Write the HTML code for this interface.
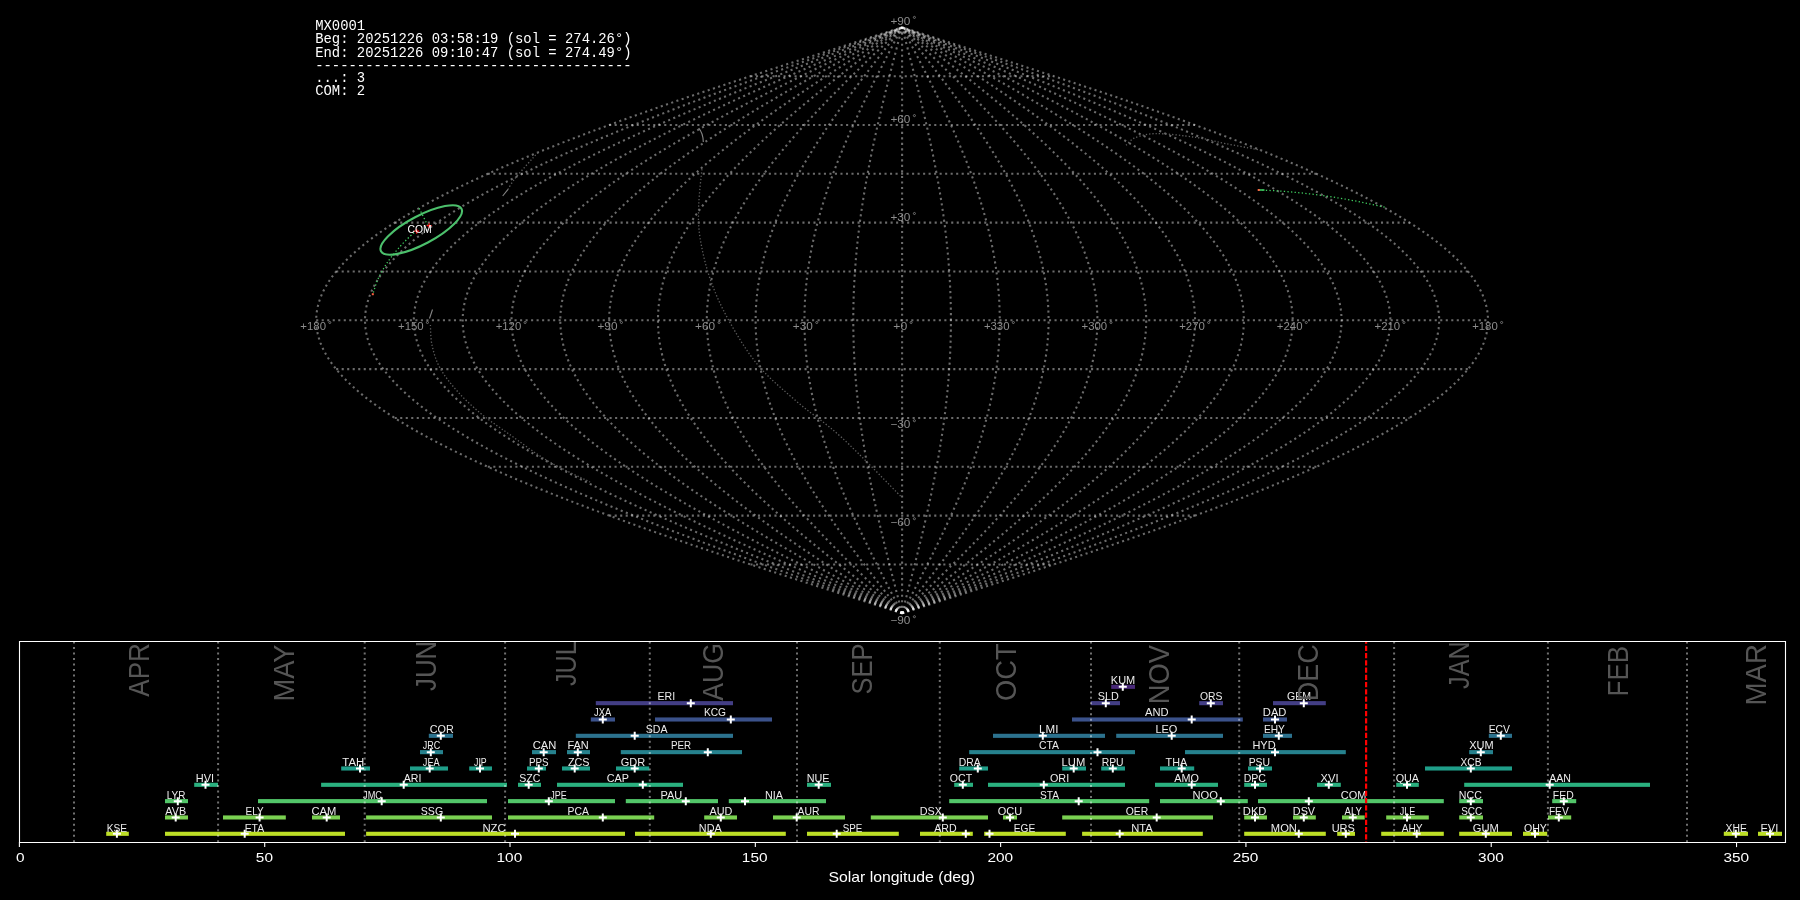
<!DOCTYPE html>
<html><head><meta charset="utf-8"><title>MX0001</title>
<style>
html,body{margin:0;padding:0;background:#000;width:1800px;height:900px;overflow:hidden}
svg{display:block;will-change:transform}
text{font-family:"Liberation Sans",sans-serif}
.mono{font-family:"Liberation Mono",monospace}
</style></head><body>
<svg width="1800" height="900" viewBox="0 0 1800 900">
<rect width="1800" height="900" fill="#000"/>
<g fill="none" stroke="#fff" stroke-opacity="0.42" stroke-width="2.08" stroke-dasharray="2.08 3.43">
<path d="M902.1 613.25 L907.21 611.63 L912.33 610 L917.44 608.37 L922.55 606.74 L927.66 605.12 L932.76 603.49 L937.87 601.86 L942.97 600.23 L948.07 598.61 L953.17 596.98 L958.26 595.35 L963.34 593.72 L968.43 592.1 L973.5 590.47 L978.58 588.84 L983.64 587.21 L988.7 585.59 L993.76 583.96 L998.8 582.33 L1003.84 580.7 L1008.87 579.08 L1013.9 577.45 L1018.91 575.82 L1023.92 574.19 L1028.91 572.57 L1033.9 570.94 L1038.88 569.31 L1043.84 567.68 L1048.8 566.06 L1053.74 564.43 L1058.68 562.8 L1063.6 561.17 L1068.51 559.55 L1073.4 557.92 L1078.29 556.29 L1083.16 554.66 L1088.01 553.04 L1092.85 551.41 L1097.68 549.78 L1102.49 548.15 L1107.29 546.53 L1112.07 544.9 L1116.84 543.27 L1121.58 541.64 L1126.32 540.02 L1131.03 538.39 L1135.73 536.76 L1140.41 535.13 L1145.07 533.51 L1149.72 531.88 L1154.34 530.25 L1158.94 528.62 L1163.53 526.99 L1168.1 525.37 L1172.64 523.74 L1177.17 522.11 L1181.67 520.48 L1186.15 518.86 L1190.61 517.23 L1195.05 515.6 L1199.47 513.97 L1203.86 512.35 L1208.24 510.72 L1212.58 509.09 L1216.91 507.46 L1221.21 505.84 L1225.48 504.21 L1229.74 502.58 L1233.96 500.95 L1238.16 499.33 L1242.34 497.7 L1246.49 496.07 L1250.61 494.44 L1254.71 492.82 L1258.78 491.19 L1262.82 489.56 L1266.84 487.93 L1270.82 486.31 L1274.78 484.68 L1278.71 483.05 L1282.62 481.42 L1286.49 479.8 L1290.33 478.17 L1294.15 476.54 L1297.93 474.91 L1301.69 473.29 L1305.41 471.66 L1309.11 470.03 L1312.77 468.4 L1316.4 466.78 L1320 465.15 L1323.57 463.52 L1327.1 461.89 L1330.61 460.27 L1334.08 458.64 L1337.51 457.01 L1340.92 455.38 L1344.29 453.76 L1347.63 452.13 L1350.93 450.5 L1354.2 448.87 L1357.44 447.25 L1360.64 445.62 L1363.8 443.99 L1366.93 442.36 L1370.03 440.74 L1373.09 439.11 L1376.11 437.48 L1379.1 435.85 L1382.05 434.23 L1384.96 432.6 L1387.84 430.97 L1390.68 429.34 L1393.48 427.72 L1396.25 426.09 L1398.98 424.46 L1401.67 422.83 L1404.32 421.21 L1406.93 419.58 L1409.51 417.95 L1412.05 416.32 L1414.55 414.7 L1417.01 413.07 L1419.43 411.44 L1421.81 409.81 L1424.15 408.19 L1426.45 406.56 L1428.71 404.93 L1430.93 403.3 L1433.11 401.68 L1435.25 400.05 L1437.35 398.42 L1439.41 396.79 L1441.43 395.17 L1443.41 393.54 L1445.34 391.91 L1447.24 390.28 L1449.09 388.66 L1450.9 387.03 L1452.67 385.4 L1454.4 383.77 L1456.09 382.15 L1457.73 380.52 L1459.33 378.89 L1460.89 377.26 L1462.41 375.64 L1463.88 374.01 L1465.31 372.38 L1466.7 370.75 L1468.04 369.13 L1469.34 367.5 L1470.6 365.87 L1471.82 364.24 L1472.99 362.62 L1474.12 360.99 L1475.2 359.36 L1476.24 357.73 L1477.24 356.11 L1478.2 354.48 L1479.11 352.85 L1479.97 351.22 L1480.79 349.6 L1481.57 347.97 L1482.31 346.34 L1482.99 344.71 L1483.64 343.09 L1484.24 341.46 L1484.8 339.83 L1485.31 338.2 L1485.78 336.58 L1486.2 334.95 L1486.58 333.32 L1486.91 331.69 L1487.2 330.07 L1487.45 328.44 L1487.65 326.81 L1487.81 325.18 L1487.92 323.56 L1487.98 321.93 L1488.01 320.3 L1487.98 318.67 L1487.92 317.04 L1487.81 315.42 L1487.65 313.79 L1487.45 312.16 L1487.2 310.53 L1486.91 308.91 L1486.58 307.28 L1486.2 305.65 L1485.78 304.02 L1485.31 302.4 L1484.8 300.77 L1484.24 299.14 L1483.64 297.51 L1482.99 295.89 L1482.31 294.26 L1481.57 292.63 L1480.79 291 L1479.97 289.38 L1479.11 287.75 L1478.2 286.12 L1477.24 284.49 L1476.24 282.87 L1475.2 281.24 L1474.12 279.61 L1472.99 277.98 L1471.82 276.36 L1470.6 274.73 L1469.34 273.1 L1468.04 271.47 L1466.7 269.85 L1465.31 268.22 L1463.88 266.59 L1462.41 264.96 L1460.89 263.34 L1459.33 261.71 L1457.73 260.08 L1456.09 258.45 L1454.4 256.83 L1452.67 255.2 L1450.9 253.57 L1449.09 251.94 L1447.24 250.32 L1445.34 248.69 L1443.41 247.06 L1441.43 245.43 L1439.41 243.81 L1437.35 242.18 L1435.25 240.55 L1433.11 238.92 L1430.93 237.3 L1428.71 235.67 L1426.45 234.04 L1424.15 232.41 L1421.81 230.79 L1419.43 229.16 L1417.01 227.53 L1414.55 225.9 L1412.05 224.28 L1409.51 222.65 L1406.93 221.02 L1404.32 219.39 L1401.67 217.77 L1398.98 216.14 L1396.25 214.51 L1393.48 212.88 L1390.68 211.26 L1387.84 209.63 L1384.96 208 L1382.05 206.37 L1379.1 204.75 L1376.11 203.12 L1373.09 201.49 L1370.03 199.86 L1366.93 198.24 L1363.8 196.61 L1360.64 194.98 L1357.44 193.35 L1354.2 191.73 L1350.93 190.1 L1347.63 188.47 L1344.29 186.84 L1340.92 185.22 L1337.51 183.59 L1334.08 181.96 L1330.61 180.33 L1327.1 178.71 L1323.57 177.08 L1320 175.45 L1316.4 173.82 L1312.77 172.2 L1309.11 170.57 L1305.41 168.94 L1301.69 167.31 L1297.93 165.69 L1294.15 164.06 L1290.33 162.43 L1286.49 160.8 L1282.62 159.18 L1278.71 157.55 L1274.78 155.92 L1270.82 154.29 L1266.84 152.67 L1262.82 151.04 L1258.78 149.41 L1254.71 147.78 L1250.61 146.16 L1246.49 144.53 L1242.34 142.9 L1238.16 141.27 L1233.96 139.65 L1229.74 138.02 L1225.48 136.39 L1221.21 134.76 L1216.91 133.14 L1212.58 131.51 L1208.24 129.88 L1203.86 128.25 L1199.47 126.63 L1195.05 125 L1190.61 123.37 L1186.15 121.74 L1181.67 120.12 L1177.17 118.49 L1172.64 116.86 L1168.1 115.23 L1163.53 113.61 L1158.94 111.98 L1154.34 110.35 L1149.72 108.72 L1145.07 107.09 L1140.41 105.47 L1135.73 103.84 L1131.03 102.21 L1126.32 100.58 L1121.58 98.96 L1116.84 97.33 L1112.07 95.7 L1107.29 94.07 L1102.49 92.45 L1097.68 90.82 L1092.85 89.19 L1088.01 87.56 L1083.16 85.94 L1078.29 84.31 L1073.4 82.68 L1068.51 81.05 L1063.6 79.43 L1058.68 77.8 L1053.74 76.17 L1048.8 74.54 L1043.84 72.92 L1038.88 71.29 L1033.9 69.66 L1028.91 68.03 L1023.92 66.41 L1018.91 64.78 L1013.9 63.15 L1008.87 61.52 L1003.84 59.9 L998.8 58.27 L993.76 56.64 L988.7 55.01 L983.64 53.39 L978.58 51.76 L973.5 50.13 L968.43 48.5 L963.34 46.88 L958.26 45.25 L953.17 43.62 L948.07 41.99 L942.97 40.37 L937.87 38.74 L932.76 37.11 L927.66 35.48 L922.55 33.86 L917.44 32.23 L912.33 30.6 L907.21 28.97 L902.1 27.35"/>
<path d="M902.1 613.25 L906.79 611.63 L911.47 610 L916.16 608.37 L920.84 606.74 L925.53 605.12 L930.21 603.49 L934.89 601.86 L939.56 600.23 L944.24 598.61 L948.91 596.98 L953.58 595.35 L958.24 593.72 L962.9 592.1 L967.55 590.47 L972.2 588.84 L976.85 587.21 L981.49 585.59 L986.12 583.96 L990.74 582.33 L995.36 580.7 L999.98 579.08 L1004.58 577.45 L1009.18 575.82 L1013.77 574.19 L1018.35 572.57 L1022.92 570.94 L1027.48 569.31 L1032.03 567.68 L1036.57 566.06 L1041.11 564.43 L1045.63 562.8 L1050.14 561.17 L1054.64 559.55 L1059.13 557.92 L1063.6 556.29 L1068.07 554.66 L1072.52 553.04 L1076.96 551.41 L1081.38 549.78 L1085.79 548.15 L1090.19 546.53 L1094.57 544.9 L1098.94 543.27 L1103.29 541.64 L1107.63 540.02 L1111.95 538.39 L1116.26 536.76 L1120.55 535.13 L1124.82 533.51 L1129.08 531.88 L1133.32 530.25 L1137.54 528.62 L1141.74 526.99 L1145.93 525.37 L1150.1 523.74 L1154.24 522.11 L1158.37 520.48 L1162.48 518.86 L1166.57 517.23 L1170.64 515.6 L1174.69 513.97 L1178.72 512.35 L1182.72 510.72 L1186.71 509.09 L1190.67 507.46 L1194.62 505.84 L1198.54 504.21 L1202.43 502.58 L1206.31 500.95 L1210.16 499.33 L1213.98 497.7 L1217.79 496.07 L1221.57 494.44 L1225.32 492.82 L1229.05 491.19 L1232.76 489.56 L1236.44 487.93 L1240.1 486.31 L1243.73 484.68 L1247.33 483.05 L1250.91 481.42 L1254.46 479.8 L1257.98 478.17 L1261.48 476.54 L1264.95 474.91 L1268.39 473.29 L1271.8 471.66 L1275.19 470.03 L1278.55 468.4 L1281.87 466.78 L1285.17 465.15 L1288.44 463.52 L1291.69 461.89 L1294.9 460.27 L1298.08 458.64 L1301.23 457.01 L1304.35 455.38 L1307.44 453.76 L1310.5 452.13 L1313.53 450.5 L1316.53 448.87 L1319.49 447.25 L1322.42 445.62 L1325.33 443.99 L1328.2 442.36 L1331.03 440.74 L1333.84 439.11 L1336.61 437.48 L1339.35 435.85 L1342.05 434.23 L1344.72 432.6 L1347.36 430.97 L1349.96 429.34 L1352.53 427.72 L1355.07 426.09 L1357.57 424.46 L1360.04 422.83 L1362.47 421.21 L1364.87 419.58 L1367.23 417.95 L1369.55 416.32 L1371.84 414.7 L1374.1 413.07 L1376.31 411.44 L1378.5 409.81 L1380.64 408.19 L1382.75 406.56 L1384.83 404.93 L1386.86 403.3 L1388.86 401.68 L1390.82 400.05 L1392.75 398.42 L1394.64 396.79 L1396.49 395.17 L1398.3 393.54 L1400.07 391.91 L1401.81 390.28 L1403.51 388.66 L1405.17 387.03 L1406.79 385.4 L1408.38 383.77 L1409.92 382.15 L1411.43 380.52 L1412.89 378.89 L1414.32 377.26 L1415.71 375.64 L1417.06 374.01 L1418.38 372.38 L1419.65 370.75 L1420.88 369.13 L1422.07 367.5 L1423.23 365.87 L1424.34 364.24 L1425.42 362.62 L1426.45 360.99 L1427.44 359.36 L1428.4 357.73 L1429.31 356.11 L1430.19 354.48 L1431.02 352.85 L1431.82 351.22 L1432.57 349.6 L1433.28 347.97 L1433.95 346.34 L1434.59 344.71 L1435.18 343.09 L1435.73 341.46 L1436.24 339.83 L1436.71 338.2 L1437.14 336.58 L1437.53 334.95 L1437.87 333.32 L1438.18 331.69 L1438.45 330.07 L1438.67 328.44 L1438.85 326.81 L1439 325.18 L1439.1 323.56 L1439.16 321.93 L1439.18 320.3 L1439.16 318.67 L1439.1 317.04 L1439 315.42 L1438.85 313.79 L1438.67 312.16 L1438.45 310.53 L1438.18 308.91 L1437.87 307.28 L1437.53 305.65 L1437.14 304.02 L1436.71 302.4 L1436.24 300.77 L1435.73 299.14 L1435.18 297.51 L1434.59 295.89 L1433.95 294.26 L1433.28 292.63 L1432.57 291 L1431.82 289.38 L1431.02 287.75 L1430.19 286.12 L1429.31 284.49 L1428.4 282.87 L1427.44 281.24 L1426.45 279.61 L1425.42 277.98 L1424.34 276.36 L1423.23 274.73 L1422.07 273.1 L1420.88 271.47 L1419.65 269.85 L1418.38 268.22 L1417.06 266.59 L1415.71 264.96 L1414.32 263.34 L1412.89 261.71 L1411.43 260.08 L1409.92 258.45 L1408.38 256.83 L1406.79 255.2 L1405.17 253.57 L1403.51 251.94 L1401.81 250.32 L1400.07 248.69 L1398.3 247.06 L1396.49 245.43 L1394.64 243.81 L1392.75 242.18 L1390.82 240.55 L1388.86 238.92 L1386.86 237.3 L1384.83 235.67 L1382.75 234.04 L1380.64 232.41 L1378.5 230.79 L1376.31 229.16 L1374.1 227.53 L1371.84 225.9 L1369.55 224.28 L1367.23 222.65 L1364.87 221.02 L1362.47 219.39 L1360.04 217.77 L1357.57 216.14 L1355.07 214.51 L1352.53 212.88 L1349.96 211.26 L1347.36 209.63 L1344.72 208 L1342.05 206.37 L1339.35 204.75 L1336.61 203.12 L1333.84 201.49 L1331.03 199.86 L1328.2 198.24 L1325.33 196.61 L1322.42 194.98 L1319.49 193.35 L1316.53 191.73 L1313.53 190.1 L1310.5 188.47 L1307.44 186.84 L1304.35 185.22 L1301.23 183.59 L1298.08 181.96 L1294.9 180.33 L1291.69 178.71 L1288.44 177.08 L1285.17 175.45 L1281.87 173.82 L1278.55 172.2 L1275.19 170.57 L1271.8 168.94 L1268.39 167.31 L1264.95 165.69 L1261.48 164.06 L1257.98 162.43 L1254.46 160.8 L1250.91 159.18 L1247.33 157.55 L1243.73 155.92 L1240.1 154.29 L1236.44 152.67 L1232.76 151.04 L1229.05 149.41 L1225.32 147.78 L1221.57 146.16 L1217.79 144.53 L1213.98 142.9 L1210.16 141.27 L1206.31 139.65 L1202.43 138.02 L1198.54 136.39 L1194.62 134.76 L1190.67 133.14 L1186.71 131.51 L1182.72 129.88 L1178.72 128.25 L1174.69 126.63 L1170.64 125 L1166.57 123.37 L1162.48 121.74 L1158.37 120.12 L1154.24 118.49 L1150.1 116.86 L1145.93 115.23 L1141.74 113.61 L1137.54 111.98 L1133.32 110.35 L1129.08 108.72 L1124.82 107.09 L1120.55 105.47 L1116.26 103.84 L1111.95 102.21 L1107.63 100.58 L1103.29 98.96 L1098.94 97.33 L1094.57 95.7 L1090.19 94.07 L1085.79 92.45 L1081.38 90.82 L1076.96 89.19 L1072.52 87.56 L1068.07 85.94 L1063.6 84.31 L1059.13 82.68 L1054.64 81.05 L1050.14 79.43 L1045.63 77.8 L1041.11 76.17 L1036.57 74.54 L1032.03 72.92 L1027.48 71.29 L1022.92 69.66 L1018.35 68.03 L1013.77 66.41 L1009.18 64.78 L1004.58 63.15 L999.98 61.52 L995.36 59.9 L990.74 58.27 L986.12 56.64 L981.49 55.01 L976.85 53.39 L972.2 51.76 L967.55 50.13 L962.9 48.5 L958.24 46.88 L953.58 45.25 L948.91 43.62 L944.24 41.99 L939.56 40.37 L934.89 38.74 L930.21 37.11 L925.53 35.48 L920.84 33.86 L916.16 32.23 L911.47 30.6 L906.79 28.97 L902.1 27.35"/>
<path d="M902.1 613.25 L906.36 611.63 L910.62 610 L914.88 608.37 L919.14 606.74 L923.4 605.12 L927.65 603.49 L931.91 601.86 L936.16 600.23 L940.41 598.61 L944.65 596.98 L948.9 595.35 L953.14 593.72 L957.37 592.1 L961.6 590.47 L965.83 588.84 L970.05 587.21 L974.27 585.59 L978.48 583.96 L982.69 582.33 L986.88 580.7 L991.08 579.08 L995.26 577.45 L999.44 575.82 L1003.61 574.19 L1007.78 572.57 L1011.93 570.94 L1016.08 569.31 L1020.22 567.68 L1024.35 566.06 L1028.47 564.43 L1032.58 562.8 L1036.68 561.17 L1040.77 559.55 L1044.85 557.92 L1048.92 556.29 L1052.98 554.66 L1057.03 553.04 L1061.06 551.41 L1065.08 549.78 L1069.09 548.15 L1073.09 546.53 L1077.08 544.9 L1081.05 543.27 L1085 541.64 L1088.95 540.02 L1092.88 538.39 L1096.79 536.76 L1100.69 535.13 L1104.58 533.51 L1108.45 531.88 L1112.3 530.25 L1116.14 528.62 L1119.96 526.99 L1123.76 525.37 L1127.55 523.74 L1131.32 522.11 L1135.08 520.48 L1138.81 518.86 L1142.53 517.23 L1146.23 515.6 L1149.91 513.97 L1153.57 512.35 L1157.21 510.72 L1160.84 509.09 L1164.44 507.46 L1168.02 505.84 L1171.59 504.21 L1175.13 502.58 L1178.65 500.95 L1182.15 499.33 L1185.63 497.7 L1189.09 496.07 L1192.53 494.44 L1195.94 492.82 L1199.33 491.19 L1202.7 489.56 L1206.05 487.93 L1209.37 486.31 L1212.67 484.68 L1215.94 483.05 L1219.2 481.42 L1222.42 479.8 L1225.63 478.17 L1228.81 476.54 L1231.96 474.91 L1235.09 473.29 L1238.19 471.66 L1241.27 470.03 L1244.32 468.4 L1247.35 466.78 L1250.35 465.15 L1253.32 463.52 L1256.27 461.89 L1259.19 460.27 L1262.08 458.64 L1264.94 457.01 L1267.78 455.38 L1270.59 453.76 L1273.37 452.13 L1276.13 450.5 L1278.85 448.87 L1281.55 447.25 L1284.21 445.62 L1286.85 443.99 L1289.46 442.36 L1292.04 440.74 L1294.59 439.11 L1297.11 437.48 L1299.6 435.85 L1302.06 434.23 L1304.48 432.6 L1306.88 430.97 L1309.25 429.34 L1311.59 427.72 L1313.89 426.09 L1316.16 424.46 L1318.41 422.83 L1320.62 421.21 L1322.8 419.58 L1324.94 417.95 L1327.06 416.32 L1329.14 414.7 L1331.19 413.07 L1333.2 411.44 L1335.19 409.81 L1337.14 408.19 L1339.06 406.56 L1340.94 404.93 L1342.79 403.3 L1344.61 401.68 L1346.39 400.05 L1348.14 398.42 L1349.86 396.79 L1351.54 395.17 L1353.19 393.54 L1354.8 391.91 L1356.38 390.28 L1357.93 388.66 L1359.44 387.03 L1360.91 385.4 L1362.35 383.77 L1363.75 382.15 L1365.12 380.52 L1366.46 378.89 L1367.76 377.26 L1369.02 375.64 L1370.25 374.01 L1371.44 372.38 L1372.6 370.75 L1373.72 369.13 L1374.8 367.5 L1375.85 365.87 L1376.87 364.24 L1377.84 362.62 L1378.78 360.99 L1379.69 359.36 L1380.55 357.73 L1381.39 356.11 L1382.18 354.48 L1382.94 352.85 L1383.66 351.22 L1384.34 349.6 L1384.99 347.97 L1385.6 346.34 L1386.18 344.71 L1386.72 343.09 L1387.22 341.46 L1387.68 339.83 L1388.11 338.2 L1388.5 336.58 L1388.85 334.95 L1389.17 333.32 L1389.45 331.69 L1389.69 330.07 L1389.89 328.44 L1390.06 326.81 L1390.19 325.18 L1390.28 323.56 L1390.34 321.93 L1390.36 320.3 L1390.34 318.67 L1390.28 317.04 L1390.19 315.42 L1390.06 313.79 L1389.89 312.16 L1389.69 310.53 L1389.45 308.91 L1389.17 307.28 L1388.85 305.65 L1388.5 304.02 L1388.11 302.4 L1387.68 300.77 L1387.22 299.14 L1386.72 297.51 L1386.18 295.89 L1385.6 294.26 L1384.99 292.63 L1384.34 291 L1383.66 289.38 L1382.94 287.75 L1382.18 286.12 L1381.39 284.49 L1380.55 282.87 L1379.69 281.24 L1378.78 279.61 L1377.84 277.98 L1376.87 276.36 L1375.85 274.73 L1374.8 273.1 L1373.72 271.47 L1372.6 269.85 L1371.44 268.22 L1370.25 266.59 L1369.02 264.96 L1367.76 263.34 L1366.46 261.71 L1365.12 260.08 L1363.75 258.45 L1362.35 256.83 L1360.91 255.2 L1359.44 253.57 L1357.93 251.94 L1356.38 250.32 L1354.8 248.69 L1353.19 247.06 L1351.54 245.43 L1349.86 243.81 L1348.14 242.18 L1346.39 240.55 L1344.61 238.92 L1342.79 237.3 L1340.94 235.67 L1339.06 234.04 L1337.14 232.41 L1335.19 230.79 L1333.2 229.16 L1331.19 227.53 L1329.14 225.9 L1327.06 224.28 L1324.94 222.65 L1322.8 221.02 L1320.62 219.39 L1318.41 217.77 L1316.16 216.14 L1313.89 214.51 L1311.59 212.88 L1309.25 211.26 L1306.88 209.63 L1304.48 208 L1302.06 206.37 L1299.6 204.75 L1297.11 203.12 L1294.59 201.49 L1292.04 199.86 L1289.46 198.24 L1286.85 196.61 L1284.21 194.98 L1281.55 193.35 L1278.85 191.73 L1276.13 190.1 L1273.37 188.47 L1270.59 186.84 L1267.78 185.22 L1264.94 183.59 L1262.08 181.96 L1259.19 180.33 L1256.27 178.71 L1253.32 177.08 L1250.35 175.45 L1247.35 173.82 L1244.32 172.2 L1241.27 170.57 L1238.19 168.94 L1235.09 167.31 L1231.96 165.69 L1228.81 164.06 L1225.63 162.43 L1222.42 160.8 L1219.2 159.18 L1215.94 157.55 L1212.67 155.92 L1209.37 154.29 L1206.05 152.67 L1202.7 151.04 L1199.33 149.41 L1195.94 147.78 L1192.53 146.16 L1189.09 144.53 L1185.63 142.9 L1182.15 141.27 L1178.65 139.65 L1175.13 138.02 L1171.59 136.39 L1168.02 134.76 L1164.44 133.14 L1160.84 131.51 L1157.21 129.88 L1153.57 128.25 L1149.91 126.63 L1146.23 125 L1142.53 123.37 L1138.81 121.74 L1135.08 120.12 L1131.32 118.49 L1127.55 116.86 L1123.76 115.23 L1119.96 113.61 L1116.14 111.98 L1112.3 110.35 L1108.45 108.72 L1104.58 107.09 L1100.69 105.47 L1096.79 103.84 L1092.88 102.21 L1088.95 100.58 L1085 98.96 L1081.05 97.33 L1077.08 95.7 L1073.09 94.07 L1069.09 92.45 L1065.08 90.82 L1061.06 89.19 L1057.03 87.56 L1052.98 85.94 L1048.92 84.31 L1044.85 82.68 L1040.77 81.05 L1036.68 79.43 L1032.58 77.8 L1028.47 76.17 L1024.35 74.54 L1020.22 72.92 L1016.08 71.29 L1011.93 69.66 L1007.78 68.03 L1003.61 66.41 L999.44 64.78 L995.26 63.15 L991.08 61.52 L986.88 59.9 L982.69 58.27 L978.48 56.64 L974.27 55.01 L970.05 53.39 L965.83 51.76 L961.6 50.13 L957.37 48.5 L953.14 46.88 L948.9 45.25 L944.65 43.62 L940.41 41.99 L936.16 40.37 L931.91 38.74 L927.65 37.11 L923.4 35.48 L919.14 33.86 L914.88 32.23 L910.62 30.6 L906.36 28.97 L902.1 27.35"/>
<path d="M902.1 613.25 L905.93 611.63 L909.77 610 L913.6 608.37 L917.44 606.74 L921.27 605.12 L925.1 603.49 L928.93 601.86 L932.75 600.23 L936.58 598.61 L940.4 596.98 L944.22 595.35 L948.03 593.72 L951.84 592.1 L955.65 590.47 L959.46 588.84 L963.26 587.21 L967.05 585.59 L970.84 583.96 L974.63 582.33 L978.41 580.7 L982.18 579.08 L985.95 577.45 L989.71 575.82 L993.46 574.19 L997.21 572.57 L1000.95 570.94 L1004.68 569.31 L1008.41 567.68 L1012.12 566.06 L1015.83 564.43 L1019.53 562.8 L1023.22 561.17 L1026.9 559.55 L1030.58 557.92 L1034.24 556.29 L1037.89 554.66 L1041.53 553.04 L1045.16 551.41 L1048.78 549.78 L1052.39 548.15 L1055.99 546.53 L1059.58 544.9 L1063.15 543.27 L1066.71 541.64 L1070.26 540.02 L1073.8 538.39 L1077.32 536.76 L1080.83 535.13 L1084.33 533.51 L1087.81 531.88 L1091.28 530.25 L1094.73 528.62 L1098.17 526.99 L1101.6 525.37 L1105.01 523.74 L1108.4 522.11 L1111.78 520.48 L1115.14 518.86 L1118.49 517.23 L1121.82 515.6 L1125.13 513.97 L1128.42 512.35 L1131.7 510.72 L1134.96 509.09 L1138.21 507.46 L1141.43 505.84 L1144.64 504.21 L1147.83 502.58 L1151 500.95 L1154.15 499.33 L1157.28 497.7 L1160.39 496.07 L1163.48 494.44 L1166.56 492.82 L1169.61 491.19 L1172.64 489.56 L1175.65 487.93 L1178.64 486.31 L1181.61 484.68 L1184.56 483.05 L1187.49 481.42 L1190.39 479.8 L1193.28 478.17 L1196.14 476.54 L1198.97 474.91 L1201.79 473.29 L1204.58 471.66 L1207.35 470.03 L1210.1 468.4 L1212.82 466.78 L1215.52 465.15 L1218.2 463.52 L1220.85 461.89 L1223.48 460.27 L1226.08 458.64 L1228.66 457.01 L1231.21 455.38 L1233.74 453.76 L1236.25 452.13 L1238.72 450.5 L1241.18 448.87 L1243.6 447.25 L1246 445.62 L1248.38 443.99 L1250.72 442.36 L1253.04 440.74 L1255.34 439.11 L1257.61 437.48 L1259.85 435.85 L1262.06 434.23 L1264.25 432.6 L1266.4 430.97 L1268.53 429.34 L1270.64 427.72 L1272.71 426.09 L1274.76 424.46 L1276.78 422.83 L1278.77 421.21 L1280.73 419.58 L1282.66 417.95 L1284.56 416.32 L1286.43 414.7 L1288.28 413.07 L1290.09 411.44 L1291.88 409.81 L1293.64 408.19 L1295.36 406.56 L1297.06 404.93 L1298.72 403.3 L1300.36 401.68 L1301.96 400.05 L1303.54 398.42 L1305.08 396.79 L1306.6 395.17 L1308.08 393.54 L1309.53 391.91 L1310.95 390.28 L1312.34 388.66 L1313.7 387.03 L1315.03 385.4 L1316.33 383.77 L1317.59 382.15 L1318.82 380.52 L1320.02 378.89 L1321.19 377.26 L1322.33 375.64 L1323.43 374.01 L1324.51 372.38 L1325.55 370.75 L1326.56 369.13 L1327.53 367.5 L1328.48 365.87 L1329.39 364.24 L1330.27 362.62 L1331.11 360.99 L1331.93 359.36 L1332.71 357.73 L1333.46 356.11 L1334.17 354.48 L1334.85 352.85 L1335.5 351.22 L1336.12 349.6 L1336.7 347.97 L1337.25 346.34 L1337.77 344.71 L1338.25 343.09 L1338.71 341.46 L1339.12 339.83 L1339.51 338.2 L1339.86 336.58 L1340.18 334.95 L1340.46 333.32 L1340.71 331.69 L1340.93 330.07 L1341.11 328.44 L1341.26 326.81 L1341.38 325.18 L1341.46 323.56 L1341.51 321.93 L1341.53 320.3 L1341.51 318.67 L1341.46 317.04 L1341.38 315.42 L1341.26 313.79 L1341.11 312.16 L1340.93 310.53 L1340.71 308.91 L1340.46 307.28 L1340.18 305.65 L1339.86 304.02 L1339.51 302.4 L1339.12 300.77 L1338.71 299.14 L1338.25 297.51 L1337.77 295.89 L1337.25 294.26 L1336.7 292.63 L1336.12 291 L1335.5 289.38 L1334.85 287.75 L1334.17 286.12 L1333.46 284.49 L1332.71 282.87 L1331.93 281.24 L1331.11 279.61 L1330.27 277.98 L1329.39 276.36 L1328.48 274.73 L1327.53 273.1 L1326.56 271.47 L1325.55 269.85 L1324.51 268.22 L1323.43 266.59 L1322.33 264.96 L1321.19 263.34 L1320.02 261.71 L1318.82 260.08 L1317.59 258.45 L1316.33 256.83 L1315.03 255.2 L1313.7 253.57 L1312.34 251.94 L1310.95 250.32 L1309.53 248.69 L1308.08 247.06 L1306.6 245.43 L1305.08 243.81 L1303.54 242.18 L1301.96 240.55 L1300.36 238.92 L1298.72 237.3 L1297.06 235.67 L1295.36 234.04 L1293.64 232.41 L1291.88 230.79 L1290.09 229.16 L1288.28 227.53 L1286.43 225.9 L1284.56 224.28 L1282.66 222.65 L1280.73 221.02 L1278.77 219.39 L1276.78 217.77 L1274.76 216.14 L1272.71 214.51 L1270.64 212.88 L1268.53 211.26 L1266.4 209.63 L1264.25 208 L1262.06 206.37 L1259.85 204.75 L1257.61 203.12 L1255.34 201.49 L1253.04 199.86 L1250.72 198.24 L1248.38 196.61 L1246 194.98 L1243.6 193.35 L1241.18 191.73 L1238.72 190.1 L1236.25 188.47 L1233.74 186.84 L1231.21 185.22 L1228.66 183.59 L1226.08 181.96 L1223.48 180.33 L1220.85 178.71 L1218.2 177.08 L1215.52 175.45 L1212.82 173.82 L1210.1 172.2 L1207.35 170.57 L1204.58 168.94 L1201.79 167.31 L1198.97 165.69 L1196.14 164.06 L1193.28 162.43 L1190.39 160.8 L1187.49 159.18 L1184.56 157.55 L1181.61 155.92 L1178.64 154.29 L1175.65 152.67 L1172.64 151.04 L1169.61 149.41 L1166.56 147.78 L1163.48 146.16 L1160.39 144.53 L1157.28 142.9 L1154.15 141.27 L1151 139.65 L1147.83 138.02 L1144.64 136.39 L1141.43 134.76 L1138.21 133.14 L1134.96 131.51 L1131.7 129.88 L1128.42 128.25 L1125.13 126.63 L1121.82 125 L1118.49 123.37 L1115.14 121.74 L1111.78 120.12 L1108.4 118.49 L1105.01 116.86 L1101.6 115.23 L1098.17 113.61 L1094.73 111.98 L1091.28 110.35 L1087.81 108.72 L1084.33 107.09 L1080.83 105.47 L1077.32 103.84 L1073.8 102.21 L1070.26 100.58 L1066.71 98.96 L1063.15 97.33 L1059.58 95.7 L1055.99 94.07 L1052.39 92.45 L1048.78 90.82 L1045.16 89.19 L1041.53 87.56 L1037.89 85.94 L1034.24 84.31 L1030.58 82.68 L1026.9 81.05 L1023.22 79.43 L1019.53 77.8 L1015.83 76.17 L1012.12 74.54 L1008.41 72.92 L1004.68 71.29 L1000.95 69.66 L997.21 68.03 L993.46 66.41 L989.71 64.78 L985.95 63.15 L982.18 61.52 L978.41 59.9 L974.63 58.27 L970.84 56.64 L967.05 55.01 L963.26 53.39 L959.46 51.76 L955.65 50.13 L951.84 48.5 L948.03 46.88 L944.22 45.25 L940.4 43.62 L936.58 41.99 L932.75 40.37 L928.93 38.74 L925.1 37.11 L921.27 35.48 L917.44 33.86 L913.6 32.23 L909.77 30.6 L905.93 28.97 L902.1 27.35"/>
<path d="M902.1 613.25 L905.51 611.63 L908.92 610 L912.32 608.37 L915.73 606.74 L919.14 605.12 L922.54 603.49 L925.95 601.86 L929.35 600.23 L932.75 598.61 L936.14 596.98 L939.54 595.35 L942.93 593.72 L946.32 592.1 L949.7 590.47 L953.08 588.84 L956.46 587.21 L959.84 585.59 L963.2 583.96 L966.57 582.33 L969.93 580.7 L973.28 579.08 L976.63 577.45 L979.97 575.82 L983.31 574.19 L986.64 572.57 L989.97 570.94 L993.28 569.31 L996.6 567.68 L999.9 566.06 L1003.2 564.43 L1006.48 562.8 L1009.77 561.17 L1013.04 559.55 L1016.3 557.92 L1019.56 556.29 L1022.8 554.66 L1026.04 553.04 L1029.27 551.41 L1032.49 549.78 L1035.69 548.15 L1038.89 546.53 L1042.08 544.9 L1045.26 543.27 L1048.42 541.64 L1051.58 540.02 L1054.72 538.39 L1057.85 536.76 L1060.97 535.13 L1064.08 533.51 L1067.18 531.88 L1070.26 530.25 L1073.33 528.62 L1076.39 526.99 L1079.43 525.37 L1082.46 523.74 L1085.48 522.11 L1088.48 520.48 L1091.47 518.86 L1094.44 517.23 L1097.4 515.6 L1100.35 513.97 L1103.28 512.35 L1106.19 510.72 L1109.09 509.09 L1111.97 507.46 L1114.84 505.84 L1117.69 504.21 L1120.52 502.58 L1123.34 500.95 L1126.14 499.33 L1128.93 497.7 L1131.69 496.07 L1134.44 494.44 L1137.17 492.82 L1139.89 491.19 L1142.58 489.56 L1145.26 487.93 L1147.92 486.31 L1150.56 484.68 L1153.18 483.05 L1155.78 481.42 L1158.36 479.8 L1160.92 478.17 L1163.47 476.54 L1165.99 474.91 L1168.49 473.29 L1170.97 471.66 L1173.44 470.03 L1175.88 468.4 L1178.3 466.78 L1180.7 465.15 L1183.08 463.52 L1185.43 461.89 L1187.77 460.27 L1190.08 458.64 L1192.38 457.01 L1194.65 455.38 L1196.89 453.76 L1199.12 452.13 L1201.32 450.5 L1203.5 448.87 L1205.66 447.25 L1207.79 445.62 L1209.9 443.99 L1211.99 442.36 L1214.05 440.74 L1216.09 439.11 L1218.11 437.48 L1220.1 435.85 L1222.06 434.23 L1224.01 432.6 L1225.93 430.97 L1227.82 429.34 L1229.69 427.72 L1231.53 426.09 L1233.35 424.46 L1235.15 422.83 L1236.91 421.21 L1238.66 419.58 L1240.37 417.95 L1242.07 416.32 L1243.73 414.7 L1245.37 413.07 L1246.98 411.44 L1248.57 409.81 L1250.13 408.19 L1251.67 406.56 L1253.17 404.93 L1254.65 403.3 L1256.11 401.68 L1257.54 400.05 L1258.94 398.42 L1260.31 396.79 L1261.65 395.17 L1262.97 393.54 L1264.26 391.91 L1265.53 390.28 L1266.76 388.66 L1267.97 387.03 L1269.15 385.4 L1270.3 383.77 L1271.42 382.15 L1272.52 380.52 L1273.59 378.89 L1274.63 377.26 L1275.64 375.64 L1276.62 374.01 L1277.57 372.38 L1278.5 370.75 L1279.4 369.13 L1280.26 367.5 L1281.1 365.87 L1281.91 364.24 L1282.69 362.62 L1283.45 360.99 L1284.17 359.36 L1284.86 357.73 L1285.53 356.11 L1286.16 354.48 L1286.77 352.85 L1287.35 351.22 L1287.9 349.6 L1288.41 347.97 L1288.9 346.34 L1289.36 344.71 L1289.79 343.09 L1290.19 341.46 L1290.56 339.83 L1290.91 338.2 L1291.22 336.58 L1291.5 334.95 L1291.75 333.32 L1291.98 331.69 L1292.17 330.07 L1292.33 328.44 L1292.47 326.81 L1292.57 325.18 L1292.65 323.56 L1292.69 321.93 L1292.7 320.3 L1292.69 318.67 L1292.65 317.04 L1292.57 315.42 L1292.47 313.79 L1292.33 312.16 L1292.17 310.53 L1291.98 308.91 L1291.75 307.28 L1291.5 305.65 L1291.22 304.02 L1290.91 302.4 L1290.56 300.77 L1290.19 299.14 L1289.79 297.51 L1289.36 295.89 L1288.9 294.26 L1288.41 292.63 L1287.9 291 L1287.35 289.38 L1286.77 287.75 L1286.16 286.12 L1285.53 284.49 L1284.86 282.87 L1284.17 281.24 L1283.45 279.61 L1282.69 277.98 L1281.91 276.36 L1281.1 274.73 L1280.26 273.1 L1279.4 271.47 L1278.5 269.85 L1277.57 268.22 L1276.62 266.59 L1275.64 264.96 L1274.63 263.34 L1273.59 261.71 L1272.52 260.08 L1271.42 258.45 L1270.3 256.83 L1269.15 255.2 L1267.97 253.57 L1266.76 251.94 L1265.53 250.32 L1264.26 248.69 L1262.97 247.06 L1261.65 245.43 L1260.31 243.81 L1258.94 242.18 L1257.54 240.55 L1256.11 238.92 L1254.65 237.3 L1253.17 235.67 L1251.67 234.04 L1250.13 232.41 L1248.57 230.79 L1246.98 229.16 L1245.37 227.53 L1243.73 225.9 L1242.07 224.28 L1240.37 222.65 L1238.66 221.02 L1236.91 219.39 L1235.15 217.77 L1233.35 216.14 L1231.53 214.51 L1229.69 212.88 L1227.82 211.26 L1225.93 209.63 L1224.01 208 L1222.06 206.37 L1220.1 204.75 L1218.11 203.12 L1216.09 201.49 L1214.05 199.86 L1211.99 198.24 L1209.9 196.61 L1207.79 194.98 L1205.66 193.35 L1203.5 191.73 L1201.32 190.1 L1199.12 188.47 L1196.89 186.84 L1194.65 185.22 L1192.38 183.59 L1190.08 181.96 L1187.77 180.33 L1185.43 178.71 L1183.08 177.08 L1180.7 175.45 L1178.3 173.82 L1175.88 172.2 L1173.44 170.57 L1170.97 168.94 L1168.49 167.31 L1165.99 165.69 L1163.47 164.06 L1160.92 162.43 L1158.36 160.8 L1155.78 159.18 L1153.18 157.55 L1150.56 155.92 L1147.92 154.29 L1145.26 152.67 L1142.58 151.04 L1139.89 149.41 L1137.17 147.78 L1134.44 146.16 L1131.69 144.53 L1128.93 142.9 L1126.14 141.27 L1123.34 139.65 L1120.52 138.02 L1117.69 136.39 L1114.84 134.76 L1111.97 133.14 L1109.09 131.51 L1106.19 129.88 L1103.28 128.25 L1100.35 126.63 L1097.4 125 L1094.44 123.37 L1091.47 121.74 L1088.48 120.12 L1085.48 118.49 L1082.46 116.86 L1079.43 115.23 L1076.39 113.61 L1073.33 111.98 L1070.26 110.35 L1067.18 108.72 L1064.08 107.09 L1060.97 105.47 L1057.85 103.84 L1054.72 102.21 L1051.58 100.58 L1048.42 98.96 L1045.26 97.33 L1042.08 95.7 L1038.89 94.07 L1035.69 92.45 L1032.49 90.82 L1029.27 89.19 L1026.04 87.56 L1022.8 85.94 L1019.56 84.31 L1016.3 82.68 L1013.04 81.05 L1009.77 79.43 L1006.48 77.8 L1003.2 76.17 L999.9 74.54 L996.6 72.92 L993.28 71.29 L989.97 69.66 L986.64 68.03 L983.31 66.41 L979.97 64.78 L976.63 63.15 L973.28 61.52 L969.93 59.9 L966.57 58.27 L963.2 56.64 L959.84 55.01 L956.46 53.39 L953.08 51.76 L949.7 50.13 L946.32 48.5 L942.93 46.88 L939.54 45.25 L936.14 43.62 L932.75 41.99 L929.35 40.37 L925.95 38.74 L922.54 37.11 L919.14 35.48 L915.73 33.86 L912.32 32.23 L908.92 30.6 L905.51 28.97 L902.1 27.35"/>
<path d="M902.1 613.25 L905.08 611.63 L908.06 610 L911.05 608.37 L914.03 606.74 L917.01 605.12 L919.99 603.49 L922.97 601.86 L925.94 600.23 L928.92 598.61 L931.89 596.98 L934.86 595.35 L937.83 593.72 L940.79 592.1 L943.75 590.47 L946.71 588.84 L949.67 587.21 L952.62 585.59 L955.57 583.96 L958.51 582.33 L961.45 580.7 L964.38 579.08 L967.31 577.45 L970.24 575.82 L973.16 574.19 L976.07 572.57 L978.98 570.94 L981.89 569.31 L984.78 567.68 L987.67 566.06 L990.56 564.43 L993.44 562.8 L996.31 561.17 L999.17 559.55 L1002.03 557.92 L1004.87 556.29 L1007.72 554.66 L1010.55 553.04 L1013.37 551.41 L1016.19 549.78 L1019 548.15 L1021.79 546.53 L1024.58 544.9 L1027.36 543.27 L1030.13 541.64 L1032.89 540.02 L1035.64 538.39 L1038.38 536.76 L1041.11 535.13 L1043.83 533.51 L1046.54 531.88 L1049.24 530.25 L1051.93 528.62 L1054.6 526.99 L1057.26 525.37 L1059.92 523.74 L1062.56 522.11 L1065.18 520.48 L1067.8 518.86 L1070.4 517.23 L1072.99 515.6 L1075.57 513.97 L1078.13 512.35 L1080.68 510.72 L1083.22 509.09 L1085.74 507.46 L1088.25 505.84 L1090.74 504.21 L1093.22 502.58 L1095.69 500.95 L1098.14 499.33 L1100.57 497.7 L1102.99 496.07 L1105.4 494.44 L1107.79 492.82 L1110.16 491.19 L1112.52 489.56 L1114.86 487.93 L1117.19 486.31 L1119.5 484.68 L1121.79 483.05 L1124.07 481.42 L1126.33 479.8 L1128.57 478.17 L1130.79 476.54 L1133 474.91 L1135.19 473.29 L1137.37 471.66 L1139.52 470.03 L1141.66 468.4 L1143.77 466.78 L1145.87 465.15 L1147.96 463.52 L1150.02 461.89 L1152.06 460.27 L1154.09 458.64 L1156.09 457.01 L1158.08 455.38 L1160.04 453.76 L1161.99 452.13 L1163.92 450.5 L1165.83 448.87 L1167.71 447.25 L1169.58 445.62 L1171.43 443.99 L1173.25 442.36 L1175.06 440.74 L1176.84 439.11 L1178.61 437.48 L1180.35 435.85 L1182.07 434.23 L1183.77 432.6 L1185.45 430.97 L1187.1 429.34 L1188.74 427.72 L1190.35 426.09 L1191.95 424.46 L1193.51 422.83 L1195.06 421.21 L1196.59 419.58 L1198.09 417.95 L1199.57 416.32 L1201.03 414.7 L1202.46 413.07 L1203.87 411.44 L1205.26 409.81 L1206.63 408.19 L1207.97 406.56 L1209.29 404.93 L1210.58 403.3 L1211.86 401.68 L1213.11 400.05 L1214.33 398.42 L1215.53 396.79 L1216.71 395.17 L1217.86 393.54 L1218.99 391.91 L1220.1 390.28 L1221.18 388.66 L1222.23 387.03 L1223.27 385.4 L1224.28 383.77 L1225.26 382.15 L1226.22 380.52 L1227.15 378.89 L1228.06 377.26 L1228.94 375.64 L1229.8 374.01 L1230.64 372.38 L1231.45 370.75 L1232.23 369.13 L1232.99 367.5 L1233.73 365.87 L1234.44 364.24 L1235.12 362.62 L1235.78 360.99 L1236.41 359.36 L1237.02 357.73 L1237.6 356.11 L1238.16 354.48 L1238.69 352.85 L1239.19 351.22 L1239.67 349.6 L1240.12 347.97 L1240.55 346.34 L1240.96 344.71 L1241.33 343.09 L1241.68 341.46 L1242.01 339.83 L1242.31 338.2 L1242.58 336.58 L1242.83 334.95 L1243.05 333.32 L1243.24 331.69 L1243.41 330.07 L1243.55 328.44 L1243.67 326.81 L1243.76 325.18 L1243.83 323.56 L1243.87 321.93 L1243.88 320.3 L1243.87 318.67 L1243.83 317.04 L1243.76 315.42 L1243.67 313.79 L1243.55 312.16 L1243.41 310.53 L1243.24 308.91 L1243.05 307.28 L1242.83 305.65 L1242.58 304.02 L1242.31 302.4 L1242.01 300.77 L1241.68 299.14 L1241.33 297.51 L1240.96 295.89 L1240.55 294.26 L1240.12 292.63 L1239.67 291 L1239.19 289.38 L1238.69 287.75 L1238.16 286.12 L1237.6 284.49 L1237.02 282.87 L1236.41 281.24 L1235.78 279.61 L1235.12 277.98 L1234.44 276.36 L1233.73 274.73 L1232.99 273.1 L1232.23 271.47 L1231.45 269.85 L1230.64 268.22 L1229.8 266.59 L1228.94 264.96 L1228.06 263.34 L1227.15 261.71 L1226.22 260.08 L1225.26 258.45 L1224.28 256.83 L1223.27 255.2 L1222.23 253.57 L1221.18 251.94 L1220.1 250.32 L1218.99 248.69 L1217.86 247.06 L1216.71 245.43 L1215.53 243.81 L1214.33 242.18 L1213.11 240.55 L1211.86 238.92 L1210.58 237.3 L1209.29 235.67 L1207.97 234.04 L1206.63 232.41 L1205.26 230.79 L1203.87 229.16 L1202.46 227.53 L1201.03 225.9 L1199.57 224.28 L1198.09 222.65 L1196.59 221.02 L1195.06 219.39 L1193.51 217.77 L1191.95 216.14 L1190.35 214.51 L1188.74 212.88 L1187.1 211.26 L1185.45 209.63 L1183.77 208 L1182.07 206.37 L1180.35 204.75 L1178.61 203.12 L1176.84 201.49 L1175.06 199.86 L1173.25 198.24 L1171.43 196.61 L1169.58 194.98 L1167.71 193.35 L1165.83 191.73 L1163.92 190.1 L1161.99 188.47 L1160.04 186.84 L1158.08 185.22 L1156.09 183.59 L1154.09 181.96 L1152.06 180.33 L1150.02 178.71 L1147.96 177.08 L1145.87 175.45 L1143.77 173.82 L1141.66 172.2 L1139.52 170.57 L1137.37 168.94 L1135.19 167.31 L1133 165.69 L1130.79 164.06 L1128.57 162.43 L1126.33 160.8 L1124.07 159.18 L1121.79 157.55 L1119.5 155.92 L1117.19 154.29 L1114.86 152.67 L1112.52 151.04 L1110.16 149.41 L1107.79 147.78 L1105.4 146.16 L1102.99 144.53 L1100.57 142.9 L1098.14 141.27 L1095.69 139.65 L1093.22 138.02 L1090.74 136.39 L1088.25 134.76 L1085.74 133.14 L1083.22 131.51 L1080.68 129.88 L1078.13 128.25 L1075.57 126.63 L1072.99 125 L1070.4 123.37 L1067.8 121.74 L1065.18 120.12 L1062.56 118.49 L1059.92 116.86 L1057.26 115.23 L1054.6 113.61 L1051.93 111.98 L1049.24 110.35 L1046.54 108.72 L1043.83 107.09 L1041.11 105.47 L1038.38 103.84 L1035.64 102.21 L1032.89 100.58 L1030.13 98.96 L1027.36 97.33 L1024.58 95.7 L1021.79 94.07 L1019 92.45 L1016.19 90.82 L1013.37 89.19 L1010.55 87.56 L1007.72 85.94 L1004.87 84.31 L1002.03 82.68 L999.17 81.05 L996.31 79.43 L993.44 77.8 L990.56 76.17 L987.67 74.54 L984.78 72.92 L981.89 71.29 L978.98 69.66 L976.07 68.03 L973.16 66.41 L970.24 64.78 L967.31 63.15 L964.38 61.52 L961.45 59.9 L958.51 58.27 L955.57 56.64 L952.62 55.01 L949.67 53.39 L946.71 51.76 L943.75 50.13 L940.79 48.5 L937.83 46.88 L934.86 45.25 L931.89 43.62 L928.92 41.99 L925.94 40.37 L922.97 38.74 L919.99 37.11 L917.01 35.48 L914.03 33.86 L911.05 32.23 L908.06 30.6 L905.08 28.97 L902.1 27.35"/>
<path d="M902.1 613.25 L904.66 611.63 L907.21 610 L909.77 608.37 L912.32 606.74 L914.88 605.12 L917.43 603.49 L919.98 601.86 L922.54 600.23 L925.08 598.61 L927.63 596.98 L930.18 595.35 L932.72 593.72 L935.26 592.1 L937.8 590.47 L940.34 588.84 L942.87 587.21 L945.4 585.59 L947.93 583.96 L950.45 582.33 L952.97 580.7 L955.49 579.08 L958 577.45 L960.51 575.82 L963.01 574.19 L965.51 572.57 L968 570.94 L970.49 569.31 L972.97 567.68 L975.45 566.06 L977.92 564.43 L980.39 562.8 L982.85 561.17 L985.3 559.55 L987.75 557.92 L990.19 556.29 L992.63 554.66 L995.06 553.04 L997.48 551.41 L999.89 549.78 L1002.3 548.15 L1004.69 546.53 L1007.09 544.9 L1009.47 543.27 L1011.84 541.64 L1014.21 540.02 L1016.57 538.39 L1018.91 536.76 L1021.25 535.13 L1023.59 533.51 L1025.91 531.88 L1028.22 530.25 L1030.52 528.62 L1032.82 526.99 L1035.1 525.37 L1037.37 523.74 L1039.63 522.11 L1041.89 520.48 L1044.13 518.86 L1046.36 517.23 L1048.58 515.6 L1050.79 513.97 L1052.98 512.35 L1055.17 510.72 L1057.34 509.09 L1059.5 507.46 L1061.65 505.84 L1063.79 504.21 L1065.92 502.58 L1068.03 500.95 L1070.13 499.33 L1072.22 497.7 L1074.29 496.07 L1076.36 494.44 L1078.4 492.82 L1080.44 491.19 L1082.46 489.56 L1084.47 487.93 L1086.46 486.31 L1088.44 484.68 L1090.41 483.05 L1092.36 481.42 L1094.29 479.8 L1096.22 478.17 L1098.12 476.54 L1100.02 474.91 L1101.89 473.29 L1103.76 471.66 L1105.6 470.03 L1107.43 468.4 L1109.25 466.78 L1111.05 465.15 L1112.83 463.52 L1114.6 461.89 L1116.35 460.27 L1118.09 458.64 L1119.81 457.01 L1121.51 455.38 L1123.19 453.76 L1124.86 452.13 L1126.52 450.5 L1128.15 448.87 L1129.77 447.25 L1131.37 445.62 L1132.95 443.99 L1134.52 442.36 L1136.06 440.74 L1137.59 439.11 L1139.1 437.48 L1140.6 435.85 L1142.07 434.23 L1143.53 432.6 L1144.97 430.97 L1146.39 429.34 L1147.79 427.72 L1149.17 426.09 L1150.54 424.46 L1151.88 422.83 L1153.21 421.21 L1154.52 419.58 L1155.81 417.95 L1157.07 416.32 L1158.32 414.7 L1159.55 413.07 L1160.76 411.44 L1161.95 409.81 L1163.12 408.19 L1164.27 406.56 L1165.4 404.93 L1166.52 403.3 L1167.61 401.68 L1168.68 400.05 L1169.73 398.42 L1170.76 396.79 L1171.77 395.17 L1172.75 393.54 L1173.72 391.91 L1174.67 390.28 L1175.6 388.66 L1176.5 387.03 L1177.39 385.4 L1178.25 383.77 L1179.09 382.15 L1179.91 380.52 L1180.72 378.89 L1181.49 377.26 L1182.25 375.64 L1182.99 374.01 L1183.7 372.38 L1184.4 370.75 L1185.07 369.13 L1185.72 367.5 L1186.35 365.87 L1186.96 364.24 L1187.55 362.62 L1188.11 360.99 L1188.65 359.36 L1189.17 357.73 L1189.67 356.11 L1190.15 354.48 L1190.6 352.85 L1191.04 351.22 L1191.45 349.6 L1191.84 347.97 L1192.2 346.34 L1192.55 344.71 L1192.87 343.09 L1193.17 341.46 L1193.45 339.83 L1193.7 338.2 L1193.94 336.58 L1194.15 334.95 L1194.34 333.32 L1194.51 331.69 L1194.65 330.07 L1194.77 328.44 L1194.88 326.81 L1194.95 325.18 L1195.01 323.56 L1195.04 321.93 L1195.05 320.3 L1195.04 318.67 L1195.01 317.04 L1194.95 315.42 L1194.88 313.79 L1194.77 312.16 L1194.65 310.53 L1194.51 308.91 L1194.34 307.28 L1194.15 305.65 L1193.94 304.02 L1193.7 302.4 L1193.45 300.77 L1193.17 299.14 L1192.87 297.51 L1192.55 295.89 L1192.2 294.26 L1191.84 292.63 L1191.45 291 L1191.04 289.38 L1190.6 287.75 L1190.15 286.12 L1189.67 284.49 L1189.17 282.87 L1188.65 281.24 L1188.11 279.61 L1187.55 277.98 L1186.96 276.36 L1186.35 274.73 L1185.72 273.1 L1185.07 271.47 L1184.4 269.85 L1183.7 268.22 L1182.99 266.59 L1182.25 264.96 L1181.49 263.34 L1180.72 261.71 L1179.91 260.08 L1179.09 258.45 L1178.25 256.83 L1177.39 255.2 L1176.5 253.57 L1175.6 251.94 L1174.67 250.32 L1173.72 248.69 L1172.75 247.06 L1171.77 245.43 L1170.76 243.81 L1169.73 242.18 L1168.68 240.55 L1167.61 238.92 L1166.52 237.3 L1165.4 235.67 L1164.27 234.04 L1163.12 232.41 L1161.95 230.79 L1160.76 229.16 L1159.55 227.53 L1158.32 225.9 L1157.07 224.28 L1155.81 222.65 L1154.52 221.02 L1153.21 219.39 L1151.88 217.77 L1150.54 216.14 L1149.17 214.51 L1147.79 212.88 L1146.39 211.26 L1144.97 209.63 L1143.53 208 L1142.07 206.37 L1140.6 204.75 L1139.1 203.12 L1137.59 201.49 L1136.06 199.86 L1134.52 198.24 L1132.95 196.61 L1131.37 194.98 L1129.77 193.35 L1128.15 191.73 L1126.52 190.1 L1124.86 188.47 L1123.19 186.84 L1121.51 185.22 L1119.81 183.59 L1118.09 181.96 L1116.35 180.33 L1114.6 178.71 L1112.83 177.08 L1111.05 175.45 L1109.25 173.82 L1107.43 172.2 L1105.6 170.57 L1103.76 168.94 L1101.89 167.31 L1100.02 165.69 L1098.12 164.06 L1096.22 162.43 L1094.29 160.8 L1092.36 159.18 L1090.41 157.55 L1088.44 155.92 L1086.46 154.29 L1084.47 152.67 L1082.46 151.04 L1080.44 149.41 L1078.4 147.78 L1076.36 146.16 L1074.29 144.53 L1072.22 142.9 L1070.13 141.27 L1068.03 139.65 L1065.92 138.02 L1063.79 136.39 L1061.65 134.76 L1059.5 133.14 L1057.34 131.51 L1055.17 129.88 L1052.98 128.25 L1050.79 126.63 L1048.58 125 L1046.36 123.37 L1044.13 121.74 L1041.89 120.12 L1039.63 118.49 L1037.37 116.86 L1035.1 115.23 L1032.82 113.61 L1030.52 111.98 L1028.22 110.35 L1025.91 108.72 L1023.59 107.09 L1021.25 105.47 L1018.91 103.84 L1016.57 102.21 L1014.21 100.58 L1011.84 98.96 L1009.47 97.33 L1007.09 95.7 L1004.69 94.07 L1002.3 92.45 L999.89 90.82 L997.48 89.19 L995.06 87.56 L992.63 85.94 L990.19 84.31 L987.75 82.68 L985.3 81.05 L982.85 79.43 L980.39 77.8 L977.92 76.17 L975.45 74.54 L972.97 72.92 L970.49 71.29 L968 69.66 L965.51 68.03 L963.01 66.41 L960.51 64.78 L958 63.15 L955.49 61.52 L952.97 59.9 L950.45 58.27 L947.93 56.64 L945.4 55.01 L942.87 53.39 L940.34 51.76 L937.8 50.13 L935.26 48.5 L932.72 46.88 L930.18 45.25 L927.63 43.62 L925.08 41.99 L922.54 40.37 L919.98 38.74 L917.43 37.11 L914.88 35.48 L912.32 33.86 L909.77 32.23 L907.21 30.6 L904.66 28.97 L902.1 27.35"/>
<path d="M902.1 613.25 L904.23 611.63 L906.36 610 L908.49 608.37 L910.62 606.74 L912.75 605.12 L914.88 603.49 L917 601.86 L919.13 600.23 L921.25 598.61 L923.38 596.98 L925.5 595.35 L927.62 593.72 L929.74 592.1 L931.85 590.47 L933.97 588.84 L936.08 587.21 L938.18 585.59 L940.29 583.96 L942.39 582.33 L944.49 580.7 L946.59 579.08 L948.68 577.45 L950.77 575.82 L952.86 574.19 L954.94 572.57 L957.02 570.94 L959.09 569.31 L961.16 567.68 L963.22 566.06 L965.28 564.43 L967.34 562.8 L969.39 561.17 L971.44 559.55 L973.48 557.92 L975.51 556.29 L977.54 554.66 L979.56 553.04 L981.58 551.41 L983.59 549.78 L985.6 548.15 L987.6 546.53 L989.59 544.9 L991.57 543.27 L993.55 541.64 L995.52 540.02 L997.49 538.39 L999.45 536.76 L1001.4 535.13 L1003.34 533.51 L1005.27 531.88 L1007.2 530.25 L1009.12 528.62 L1011.03 526.99 L1012.93 525.37 L1014.83 523.74 L1016.71 522.11 L1018.59 520.48 L1020.46 518.86 L1022.31 517.23 L1024.16 515.6 L1026 513.97 L1027.84 512.35 L1029.66 510.72 L1031.47 509.09 L1033.27 507.46 L1035.06 505.84 L1036.84 504.21 L1038.61 502.58 L1040.38 500.95 L1042.13 499.33 L1043.87 497.7 L1045.59 496.07 L1047.31 494.44 L1049.02 492.82 L1050.72 491.19 L1052.4 489.56 L1054.07 487.93 L1055.73 486.31 L1057.38 484.68 L1059.02 483.05 L1060.65 481.42 L1062.26 479.8 L1063.86 478.17 L1065.45 476.54 L1067.03 474.91 L1068.59 473.29 L1070.15 471.66 L1071.69 470.03 L1073.21 468.4 L1074.72 466.78 L1076.22 465.15 L1077.71 463.52 L1079.18 461.89 L1080.64 460.27 L1082.09 458.64 L1083.52 457.01 L1084.94 455.38 L1086.35 453.76 L1087.74 452.13 L1089.11 450.5 L1090.48 448.87 L1091.82 447.25 L1093.16 445.62 L1094.48 443.99 L1095.78 442.36 L1097.07 440.74 L1098.34 439.11 L1099.6 437.48 L1100.85 435.85 L1102.08 434.23 L1103.29 432.6 L1104.49 430.97 L1105.67 429.34 L1106.84 427.72 L1108 426.09 L1109.13 424.46 L1110.25 422.83 L1111.36 421.21 L1112.45 419.58 L1113.52 417.95 L1114.58 416.32 L1115.62 414.7 L1116.64 413.07 L1117.65 411.44 L1118.64 409.81 L1119.62 408.19 L1120.58 406.56 L1121.52 404.93 L1122.45 403.3 L1123.36 401.68 L1124.25 400.05 L1125.12 398.42 L1125.98 396.79 L1126.82 395.17 L1127.64 393.54 L1128.45 391.91 L1129.24 390.28 L1130.01 388.66 L1130.77 387.03 L1131.51 385.4 L1132.23 383.77 L1132.93 382.15 L1133.61 380.52 L1134.28 378.89 L1134.93 377.26 L1135.56 375.64 L1136.17 374.01 L1136.77 372.38 L1137.35 370.75 L1137.91 369.13 L1138.45 367.5 L1138.98 365.87 L1139.48 364.24 L1139.97 362.62 L1140.44 360.99 L1140.89 359.36 L1141.33 357.73 L1141.74 356.11 L1142.14 354.48 L1142.52 352.85 L1142.88 351.22 L1143.22 349.6 L1143.55 347.97 L1143.85 346.34 L1144.14 344.71 L1144.41 343.09 L1144.66 341.46 L1144.89 339.83 L1145.1 338.2 L1145.3 336.58 L1145.48 334.95 L1145.63 333.32 L1145.77 331.69 L1145.89 330.07 L1146 328.44 L1146.08 326.81 L1146.14 325.18 L1146.19 323.56 L1146.22 321.93 L1146.23 320.3 L1146.22 318.67 L1146.19 317.04 L1146.14 315.42 L1146.08 313.79 L1146 312.16 L1145.89 310.53 L1145.77 308.91 L1145.63 307.28 L1145.48 305.65 L1145.3 304.02 L1145.1 302.4 L1144.89 300.77 L1144.66 299.14 L1144.41 297.51 L1144.14 295.89 L1143.85 294.26 L1143.55 292.63 L1143.22 291 L1142.88 289.38 L1142.52 287.75 L1142.14 286.12 L1141.74 284.49 L1141.33 282.87 L1140.89 281.24 L1140.44 279.61 L1139.97 277.98 L1139.48 276.36 L1138.98 274.73 L1138.45 273.1 L1137.91 271.47 L1137.35 269.85 L1136.77 268.22 L1136.17 266.59 L1135.56 264.96 L1134.93 263.34 L1134.28 261.71 L1133.61 260.08 L1132.93 258.45 L1132.23 256.83 L1131.51 255.2 L1130.77 253.57 L1130.01 251.94 L1129.24 250.32 L1128.45 248.69 L1127.64 247.06 L1126.82 245.43 L1125.98 243.81 L1125.12 242.18 L1124.25 240.55 L1123.36 238.92 L1122.45 237.3 L1121.52 235.67 L1120.58 234.04 L1119.62 232.41 L1118.64 230.79 L1117.65 229.16 L1116.64 227.53 L1115.62 225.9 L1114.58 224.28 L1113.52 222.65 L1112.45 221.02 L1111.36 219.39 L1110.25 217.77 L1109.13 216.14 L1108 214.51 L1106.84 212.88 L1105.67 211.26 L1104.49 209.63 L1103.29 208 L1102.08 206.37 L1100.85 204.75 L1099.6 203.12 L1098.34 201.49 L1097.07 199.86 L1095.78 198.24 L1094.48 196.61 L1093.16 194.98 L1091.82 193.35 L1090.48 191.73 L1089.11 190.1 L1087.74 188.47 L1086.35 186.84 L1084.94 185.22 L1083.52 183.59 L1082.09 181.96 L1080.64 180.33 L1079.18 178.71 L1077.71 177.08 L1076.22 175.45 L1074.72 173.82 L1073.21 172.2 L1071.69 170.57 L1070.15 168.94 L1068.59 167.31 L1067.03 165.69 L1065.45 164.06 L1063.86 162.43 L1062.26 160.8 L1060.65 159.18 L1059.02 157.55 L1057.38 155.92 L1055.73 154.29 L1054.07 152.67 L1052.4 151.04 L1050.72 149.41 L1049.02 147.78 L1047.31 146.16 L1045.59 144.53 L1043.87 142.9 L1042.13 141.27 L1040.38 139.65 L1038.61 138.02 L1036.84 136.39 L1035.06 134.76 L1033.27 133.14 L1031.47 131.51 L1029.66 129.88 L1027.84 128.25 L1026 126.63 L1024.16 125 L1022.31 123.37 L1020.46 121.74 L1018.59 120.12 L1016.71 118.49 L1014.83 116.86 L1012.93 115.23 L1011.03 113.61 L1009.12 111.98 L1007.2 110.35 L1005.27 108.72 L1003.34 107.09 L1001.4 105.47 L999.45 103.84 L997.49 102.21 L995.52 100.58 L993.55 98.96 L991.57 97.33 L989.59 95.7 L987.6 94.07 L985.6 92.45 L983.59 90.82 L981.58 89.19 L979.56 87.56 L977.54 85.94 L975.51 84.31 L973.48 82.68 L971.44 81.05 L969.39 79.43 L967.34 77.8 L965.28 76.17 L963.22 74.54 L961.16 72.92 L959.09 71.29 L957.02 69.66 L954.94 68.03 L952.86 66.41 L950.77 64.78 L948.68 63.15 L946.59 61.52 L944.49 59.9 L942.39 58.27 L940.29 56.64 L938.18 55.01 L936.08 53.39 L933.97 51.76 L931.85 50.13 L929.74 48.5 L927.62 46.88 L925.5 45.25 L923.38 43.62 L921.25 41.99 L919.13 40.37 L917 38.74 L914.88 37.11 L912.75 35.48 L910.62 33.86 L908.49 32.23 L906.36 30.6 L904.23 28.97 L902.1 27.35"/>
<path d="M902.1 613.25 L903.8 611.63 L905.51 610 L907.21 608.37 L908.92 606.74 L910.62 605.12 L912.32 603.49 L914.02 601.86 L915.72 600.23 L917.42 598.61 L919.12 596.98 L920.82 595.35 L922.51 593.72 L924.21 592.1 L925.9 590.47 L927.59 588.84 L929.28 587.21 L930.97 585.59 L932.65 583.96 L934.33 582.33 L936.01 580.7 L937.69 579.08 L939.37 577.45 L941.04 575.82 L942.71 574.19 L944.37 572.57 L946.03 570.94 L947.69 569.31 L949.35 567.68 L951 566.06 L952.65 564.43 L954.29 562.8 L955.93 561.17 L957.57 559.55 L959.2 557.92 L960.83 556.29 L962.45 554.66 L964.07 553.04 L965.68 551.41 L967.29 549.78 L968.9 548.15 L970.5 546.53 L972.09 544.9 L973.68 543.27 L975.26 541.64 L976.84 540.02 L978.41 538.39 L979.98 536.76 L981.54 535.13 L983.09 533.51 L984.64 531.88 L986.18 530.25 L987.71 528.62 L989.24 526.99 L990.77 525.37 L992.28 523.74 L993.79 522.11 L995.29 520.48 L996.78 518.86 L998.27 517.23 L999.75 515.6 L1001.22 513.97 L1002.69 512.35 L1004.15 510.72 L1005.59 509.09 L1007.04 507.46 L1008.47 505.84 L1009.89 504.21 L1011.31 502.58 L1012.72 500.95 L1014.12 499.33 L1015.51 497.7 L1016.9 496.07 L1018.27 494.44 L1019.64 492.82 L1020.99 491.19 L1022.34 489.56 L1023.68 487.93 L1025.01 486.31 L1026.33 484.68 L1027.64 483.05 L1028.94 481.42 L1030.23 479.8 L1031.51 478.17 L1032.78 476.54 L1034.04 474.91 L1035.3 473.29 L1036.54 471.66 L1037.77 470.03 L1038.99 468.4 L1040.2 466.78 L1041.4 465.15 L1042.59 463.52 L1043.77 461.89 L1044.94 460.27 L1046.09 458.64 L1047.24 457.01 L1048.37 455.38 L1049.5 453.76 L1050.61 452.13 L1051.71 450.5 L1052.8 448.87 L1053.88 447.25 L1054.95 445.62 L1056 443.99 L1057.04 442.36 L1058.08 440.74 L1059.1 439.11 L1060.1 437.48 L1061.1 435.85 L1062.08 434.23 L1063.05 432.6 L1064.01 430.97 L1064.96 429.34 L1065.89 427.72 L1066.82 426.09 L1067.73 424.46 L1068.62 422.83 L1069.51 421.21 L1070.38 419.58 L1071.24 417.95 L1072.08 416.32 L1072.92 414.7 L1073.74 413.07 L1074.54 411.44 L1075.34 409.81 L1076.12 408.19 L1076.88 406.56 L1077.64 404.93 L1078.38 403.3 L1079.1 401.68 L1079.82 400.05 L1080.52 398.42 L1081.2 396.79 L1081.88 395.17 L1082.54 393.54 L1083.18 391.91 L1083.81 390.28 L1084.43 388.66 L1085.03 387.03 L1085.62 385.4 L1086.2 383.77 L1086.76 382.15 L1087.31 380.52 L1087.84 378.89 L1088.36 377.26 L1088.87 375.64 L1089.36 374.01 L1089.84 372.38 L1090.3 370.75 L1090.75 369.13 L1091.18 367.5 L1091.6 365.87 L1092.01 364.24 L1092.4 362.62 L1092.77 360.99 L1093.13 359.36 L1093.48 357.73 L1093.81 356.11 L1094.13 354.48 L1094.44 352.85 L1094.72 351.22 L1095 349.6 L1095.26 347.97 L1095.5 346.34 L1095.73 344.71 L1095.95 343.09 L1096.15 341.46 L1096.33 339.83 L1096.5 338.2 L1096.66 336.58 L1096.8 334.95 L1096.93 333.32 L1097.04 331.69 L1097.13 330.07 L1097.22 328.44 L1097.28 326.81 L1097.34 325.18 L1097.37 323.56 L1097.39 321.93 L1097.4 320.3 L1097.39 318.67 L1097.37 317.04 L1097.34 315.42 L1097.28 313.79 L1097.22 312.16 L1097.13 310.53 L1097.04 308.91 L1096.93 307.28 L1096.8 305.65 L1096.66 304.02 L1096.5 302.4 L1096.33 300.77 L1096.15 299.14 L1095.95 297.51 L1095.73 295.89 L1095.5 294.26 L1095.26 292.63 L1095 291 L1094.72 289.38 L1094.44 287.75 L1094.13 286.12 L1093.81 284.49 L1093.48 282.87 L1093.13 281.24 L1092.77 279.61 L1092.4 277.98 L1092.01 276.36 L1091.6 274.73 L1091.18 273.1 L1090.75 271.47 L1090.3 269.85 L1089.84 268.22 L1089.36 266.59 L1088.87 264.96 L1088.36 263.34 L1087.84 261.71 L1087.31 260.08 L1086.76 258.45 L1086.2 256.83 L1085.62 255.2 L1085.03 253.57 L1084.43 251.94 L1083.81 250.32 L1083.18 248.69 L1082.54 247.06 L1081.88 245.43 L1081.2 243.81 L1080.52 242.18 L1079.82 240.55 L1079.1 238.92 L1078.38 237.3 L1077.64 235.67 L1076.88 234.04 L1076.12 232.41 L1075.34 230.79 L1074.54 229.16 L1073.74 227.53 L1072.92 225.9 L1072.08 224.28 L1071.24 222.65 L1070.38 221.02 L1069.51 219.39 L1068.62 217.77 L1067.73 216.14 L1066.82 214.51 L1065.89 212.88 L1064.96 211.26 L1064.01 209.63 L1063.05 208 L1062.08 206.37 L1061.1 204.75 L1060.1 203.12 L1059.1 201.49 L1058.08 199.86 L1057.04 198.24 L1056 196.61 L1054.95 194.98 L1053.88 193.35 L1052.8 191.73 L1051.71 190.1 L1050.61 188.47 L1049.5 186.84 L1048.37 185.22 L1047.24 183.59 L1046.09 181.96 L1044.94 180.33 L1043.77 178.71 L1042.59 177.08 L1041.4 175.45 L1040.2 173.82 L1038.99 172.2 L1037.77 170.57 L1036.54 168.94 L1035.3 167.31 L1034.04 165.69 L1032.78 164.06 L1031.51 162.43 L1030.23 160.8 L1028.94 159.18 L1027.64 157.55 L1026.33 155.92 L1025.01 154.29 L1023.68 152.67 L1022.34 151.04 L1020.99 149.41 L1019.64 147.78 L1018.27 146.16 L1016.9 144.53 L1015.51 142.9 L1014.12 141.27 L1012.72 139.65 L1011.31 138.02 L1009.89 136.39 L1008.47 134.76 L1007.04 133.14 L1005.59 131.51 L1004.15 129.88 L1002.69 128.25 L1001.22 126.63 L999.75 125 L998.27 123.37 L996.78 121.74 L995.29 120.12 L993.79 118.49 L992.28 116.86 L990.77 115.23 L989.24 113.61 L987.71 111.98 L986.18 110.35 L984.64 108.72 L983.09 107.09 L981.54 105.47 L979.98 103.84 L978.41 102.21 L976.84 100.58 L975.26 98.96 L973.68 97.33 L972.09 95.7 L970.5 94.07 L968.9 92.45 L967.29 90.82 L965.68 89.19 L964.07 87.56 L962.45 85.94 L960.83 84.31 L959.2 82.68 L957.57 81.05 L955.93 79.43 L954.29 77.8 L952.65 76.17 L951 74.54 L949.35 72.92 L947.69 71.29 L946.03 69.66 L944.37 68.03 L942.71 66.41 L941.04 64.78 L939.37 63.15 L937.69 61.52 L936.01 59.9 L934.33 58.27 L932.65 56.64 L930.97 55.01 L929.28 53.39 L927.59 51.76 L925.9 50.13 L924.21 48.5 L922.51 46.88 L920.82 45.25 L919.12 43.62 L917.42 41.99 L915.72 40.37 L914.02 38.74 L912.32 37.11 L910.62 35.48 L908.92 33.86 L907.21 32.23 L905.51 30.6 L903.8 28.97 L902.1 27.35"/>
<path d="M902.1 613.25 L903.38 611.63 L904.66 610 L905.93 608.37 L907.21 606.74 L908.49 605.12 L909.77 603.49 L911.04 601.86 L912.32 600.23 L913.59 598.61 L914.87 596.98 L916.14 595.35 L917.41 593.72 L918.68 592.1 L919.95 590.47 L921.22 588.84 L922.49 587.21 L923.75 585.59 L925.01 583.96 L926.28 582.33 L927.54 580.7 L928.79 579.08 L930.05 577.45 L931.3 575.82 L932.55 574.19 L933.8 572.57 L935.05 570.94 L936.29 569.31 L937.54 567.68 L938.77 566.06 L940.01 564.43 L941.24 562.8 L942.47 561.17 L943.7 559.55 L944.93 557.92 L946.15 556.29 L947.36 554.66 L948.58 553.04 L949.79 551.41 L950.99 549.78 L952.2 548.15 L953.4 546.53 L954.59 544.9 L955.78 543.27 L956.97 541.64 L958.15 540.02 L959.33 538.39 L960.51 536.76 L961.68 535.13 L962.84 533.51 L964 531.88 L965.16 530.25 L966.31 528.62 L967.46 526.99 L968.6 525.37 L969.74 523.74 L970.87 522.11 L971.99 520.48 L973.11 518.86 L974.23 517.23 L975.34 515.6 L976.44 513.97 L977.54 512.35 L978.63 510.72 L979.72 509.09 L980.8 507.46 L981.88 505.84 L982.95 504.21 L984.01 502.58 L985.07 500.95 L986.12 499.33 L987.16 497.7 L988.2 496.07 L989.23 494.44 L990.25 492.82 L991.27 491.19 L992.28 489.56 L993.28 487.93 L994.28 486.31 L995.27 484.68 L996.25 483.05 L997.23 481.42 L998.2 479.8 L999.16 478.17 L1000.11 476.54 L1001.06 474.91 L1002 473.29 L1002.93 471.66 L1003.85 470.03 L1004.77 468.4 L1005.67 466.78 L1006.57 465.15 L1007.47 463.52 L1008.35 461.89 L1009.23 460.27 L1010.09 458.64 L1010.95 457.01 L1011.8 455.38 L1012.65 453.76 L1013.48 452.13 L1014.31 450.5 L1015.13 448.87 L1015.93 447.25 L1016.73 445.62 L1017.53 443.99 L1018.31 442.36 L1019.08 440.74 L1019.85 439.11 L1020.6 437.48 L1021.35 435.85 L1022.09 434.23 L1022.82 432.6 L1023.53 430.97 L1024.24 429.34 L1024.95 427.72 L1025.64 426.09 L1026.32 424.46 L1026.99 422.83 L1027.66 421.21 L1028.31 419.58 L1028.95 417.95 L1029.59 416.32 L1030.21 414.7 L1030.83 413.07 L1031.43 411.44 L1032.03 409.81 L1032.61 408.19 L1033.19 406.56 L1033.75 404.93 L1034.31 403.3 L1034.85 401.68 L1035.39 400.05 L1035.91 398.42 L1036.43 396.79 L1036.93 395.17 L1037.43 393.54 L1037.91 391.91 L1038.38 390.28 L1038.85 388.66 L1039.3 387.03 L1039.74 385.4 L1040.18 383.77 L1040.6 382.15 L1041.01 380.52 L1041.41 378.89 L1041.8 377.26 L1042.18 375.64 L1042.54 374.01 L1042.9 372.38 L1043.25 370.75 L1043.59 369.13 L1043.91 367.5 L1044.23 365.87 L1044.53 364.24 L1044.82 362.62 L1045.1 360.99 L1045.38 359.36 L1045.64 357.73 L1045.89 356.11 L1046.12 354.48 L1046.35 352.85 L1046.57 351.22 L1046.77 349.6 L1046.97 347.97 L1047.15 346.34 L1047.32 344.71 L1047.48 343.09 L1047.64 341.46 L1047.77 339.83 L1047.9 338.2 L1048.02 336.58 L1048.13 334.95 L1048.22 333.32 L1048.3 331.69 L1048.38 330.07 L1048.44 328.44 L1048.49 326.81 L1048.53 325.18 L1048.55 323.56 L1048.57 321.93 L1048.58 320.3 L1048.57 318.67 L1048.55 317.04 L1048.53 315.42 L1048.49 313.79 L1048.44 312.16 L1048.38 310.53 L1048.3 308.91 L1048.22 307.28 L1048.13 305.65 L1048.02 304.02 L1047.9 302.4 L1047.77 300.77 L1047.64 299.14 L1047.48 297.51 L1047.32 295.89 L1047.15 294.26 L1046.97 292.63 L1046.77 291 L1046.57 289.38 L1046.35 287.75 L1046.12 286.12 L1045.89 284.49 L1045.64 282.87 L1045.38 281.24 L1045.1 279.61 L1044.82 277.98 L1044.53 276.36 L1044.23 274.73 L1043.91 273.1 L1043.59 271.47 L1043.25 269.85 L1042.9 268.22 L1042.54 266.59 L1042.18 264.96 L1041.8 263.34 L1041.41 261.71 L1041.01 260.08 L1040.6 258.45 L1040.18 256.83 L1039.74 255.2 L1039.3 253.57 L1038.85 251.94 L1038.38 250.32 L1037.91 248.69 L1037.43 247.06 L1036.93 245.43 L1036.43 243.81 L1035.91 242.18 L1035.39 240.55 L1034.85 238.92 L1034.31 237.3 L1033.75 235.67 L1033.19 234.04 L1032.61 232.41 L1032.03 230.79 L1031.43 229.16 L1030.83 227.53 L1030.21 225.9 L1029.59 224.28 L1028.95 222.65 L1028.31 221.02 L1027.66 219.39 L1026.99 217.77 L1026.32 216.14 L1025.64 214.51 L1024.95 212.88 L1024.24 211.26 L1023.53 209.63 L1022.82 208 L1022.09 206.37 L1021.35 204.75 L1020.6 203.12 L1019.85 201.49 L1019.08 199.86 L1018.31 198.24 L1017.53 196.61 L1016.73 194.98 L1015.93 193.35 L1015.13 191.73 L1014.31 190.1 L1013.48 188.47 L1012.65 186.84 L1011.8 185.22 L1010.95 183.59 L1010.09 181.96 L1009.23 180.33 L1008.35 178.71 L1007.47 177.08 L1006.57 175.45 L1005.67 173.82 L1004.77 172.2 L1003.85 170.57 L1002.93 168.94 L1002 167.31 L1001.06 165.69 L1000.11 164.06 L999.16 162.43 L998.2 160.8 L997.23 159.18 L996.25 157.55 L995.27 155.92 L994.28 154.29 L993.28 152.67 L992.28 151.04 L991.27 149.41 L990.25 147.78 L989.23 146.16 L988.2 144.53 L987.16 142.9 L986.12 141.27 L985.07 139.65 L984.01 138.02 L982.95 136.39 L981.88 134.76 L980.8 133.14 L979.72 131.51 L978.63 129.88 L977.54 128.25 L976.44 126.63 L975.34 125 L974.23 123.37 L973.11 121.74 L971.99 120.12 L970.87 118.49 L969.74 116.86 L968.6 115.23 L967.46 113.61 L966.31 111.98 L965.16 110.35 L964 108.72 L962.84 107.09 L961.68 105.47 L960.51 103.84 L959.33 102.21 L958.15 100.58 L956.97 98.96 L955.78 97.33 L954.59 95.7 L953.4 94.07 L952.2 92.45 L950.99 90.82 L949.79 89.19 L948.58 87.56 L947.36 85.94 L946.15 84.31 L944.93 82.68 L943.7 81.05 L942.47 79.43 L941.24 77.8 L940.01 76.17 L938.77 74.54 L937.54 72.92 L936.29 71.29 L935.05 69.66 L933.8 68.03 L932.55 66.41 L931.3 64.78 L930.05 63.15 L928.79 61.52 L927.54 59.9 L926.28 58.27 L925.01 56.64 L923.75 55.01 L922.49 53.39 L921.22 51.76 L919.95 50.13 L918.68 48.5 L917.41 46.88 L916.14 45.25 L914.87 43.62 L913.59 41.99 L912.32 40.37 L911.04 38.74 L909.77 37.11 L908.49 35.48 L907.21 33.86 L905.93 32.23 L904.66 30.6 L903.38 28.97 L902.1 27.35"/>
<path d="M902.1 613.25 L902.95 611.63 L903.8 610 L904.66 608.37 L905.51 606.74 L906.36 605.12 L907.21 603.49 L908.06 601.86 L908.91 600.23 L909.76 598.61 L910.61 596.98 L911.46 595.35 L912.31 593.72 L913.15 592.1 L914 590.47 L914.85 588.84 L915.69 587.21 L916.53 585.59 L917.38 583.96 L918.22 582.33 L919.06 580.7 L919.9 579.08 L920.73 577.45 L921.57 575.82 L922.4 574.19 L923.24 572.57 L924.07 570.94 L924.9 569.31 L925.72 567.68 L926.55 566.06 L927.37 564.43 L928.2 562.8 L929.02 561.17 L929.83 559.55 L930.65 557.92 L931.46 556.29 L932.28 554.66 L933.09 553.04 L933.89 551.41 L934.7 549.78 L935.5 548.15 L936.3 546.53 L937.1 544.9 L937.89 543.27 L938.68 541.64 L939.47 540.02 L940.26 538.39 L941.04 536.76 L941.82 535.13 L942.6 533.51 L943.37 531.88 L944.14 530.25 L944.91 528.62 L945.67 526.99 L946.43 525.37 L947.19 523.74 L947.94 522.11 L948.7 520.48 L949.44 518.86 L950.19 517.23 L950.93 515.6 L951.66 513.97 L952.39 512.35 L953.12 510.72 L953.85 509.09 L954.57 507.46 L955.28 505.84 L956 504.21 L956.71 502.58 L957.41 500.95 L958.11 499.33 L958.81 497.7 L959.5 496.07 L960.19 494.44 L960.87 492.82 L961.55 491.19 L962.22 489.56 L962.89 487.93 L963.55 486.31 L964.21 484.68 L964.87 483.05 L965.52 481.42 L966.16 479.8 L966.81 478.17 L967.44 476.54 L968.07 474.91 L968.7 473.29 L969.32 471.66 L969.93 470.03 L970.54 468.4 L971.15 466.78 L971.75 465.15 L972.34 463.52 L972.93 461.89 L973.52 460.27 L974.1 458.64 L974.67 457.01 L975.24 455.38 L975.8 453.76 L976.35 452.13 L976.91 450.5 L977.45 448.87 L977.99 447.25 L978.52 445.62 L979.05 443.99 L979.57 442.36 L980.09 440.74 L980.6 439.11 L981.1 437.48 L981.6 435.85 L982.09 434.23 L982.58 432.6 L983.06 430.97 L983.53 429.34 L984 427.72 L984.46 426.09 L984.91 424.46 L985.36 422.83 L985.8 421.21 L986.24 419.58 L986.67 417.95 L987.09 416.32 L987.51 414.7 L987.92 413.07 L988.32 411.44 L988.72 409.81 L989.11 408.19 L989.49 406.56 L989.87 404.93 L990.24 403.3 L990.6 401.68 L990.96 400.05 L991.31 398.42 L991.65 396.79 L991.99 395.17 L992.32 393.54 L992.64 391.91 L992.96 390.28 L993.27 388.66 L993.57 387.03 L993.86 385.4 L994.15 383.77 L994.43 382.15 L994.7 380.52 L994.97 378.89 L995.23 377.26 L995.48 375.64 L995.73 374.01 L995.97 372.38 L996.2 370.75 L996.42 369.13 L996.64 367.5 L996.85 365.87 L997.05 364.24 L997.25 362.62 L997.44 360.99 L997.62 359.36 L997.79 357.73 L997.96 356.11 L998.12 354.48 L998.27 352.85 L998.41 351.22 L998.55 349.6 L998.68 347.97 L998.8 346.34 L998.92 344.71 L999.02 343.09 L999.12 341.46 L999.22 339.83 L999.3 338.2 L999.38 336.58 L999.45 334.95 L999.51 333.32 L999.57 331.69 L999.62 330.07 L999.66 328.44 L999.69 326.81 L999.72 325.18 L999.74 323.56 L999.75 321.93 L999.75 320.3 L999.75 318.67 L999.74 317.04 L999.72 315.42 L999.69 313.79 L999.66 312.16 L999.62 310.53 L999.57 308.91 L999.51 307.28 L999.45 305.65 L999.38 304.02 L999.3 302.4 L999.22 300.77 L999.12 299.14 L999.02 297.51 L998.92 295.89 L998.8 294.26 L998.68 292.63 L998.55 291 L998.41 289.38 L998.27 287.75 L998.12 286.12 L997.96 284.49 L997.79 282.87 L997.62 281.24 L997.44 279.61 L997.25 277.98 L997.05 276.36 L996.85 274.73 L996.64 273.1 L996.42 271.47 L996.2 269.85 L995.97 268.22 L995.73 266.59 L995.48 264.96 L995.23 263.34 L994.97 261.71 L994.7 260.08 L994.43 258.45 L994.15 256.83 L993.86 255.2 L993.57 253.57 L993.27 251.94 L992.96 250.32 L992.64 248.69 L992.32 247.06 L991.99 245.43 L991.65 243.81 L991.31 242.18 L990.96 240.55 L990.6 238.92 L990.24 237.3 L989.87 235.67 L989.49 234.04 L989.11 232.41 L988.72 230.79 L988.32 229.16 L987.92 227.53 L987.51 225.9 L987.09 224.28 L986.67 222.65 L986.24 221.02 L985.8 219.39 L985.36 217.77 L984.91 216.14 L984.46 214.51 L984 212.88 L983.53 211.26 L983.06 209.63 L982.58 208 L982.09 206.37 L981.6 204.75 L981.1 203.12 L980.6 201.49 L980.09 199.86 L979.57 198.24 L979.05 196.61 L978.52 194.98 L977.99 193.35 L977.45 191.73 L976.91 190.1 L976.35 188.47 L975.8 186.84 L975.24 185.22 L974.67 183.59 L974.1 181.96 L973.52 180.33 L972.93 178.71 L972.34 177.08 L971.75 175.45 L971.15 173.82 L970.54 172.2 L969.93 170.57 L969.32 168.94 L968.7 167.31 L968.07 165.69 L967.44 164.06 L966.81 162.43 L966.16 160.8 L965.52 159.18 L964.87 157.55 L964.21 155.92 L963.55 154.29 L962.89 152.67 L962.22 151.04 L961.55 149.41 L960.87 147.78 L960.19 146.16 L959.5 144.53 L958.81 142.9 L958.11 141.27 L957.41 139.65 L956.71 138.02 L956 136.39 L955.28 134.76 L954.57 133.14 L953.85 131.51 L953.12 129.88 L952.39 128.25 L951.66 126.63 L950.93 125 L950.19 123.37 L949.44 121.74 L948.7 120.12 L947.94 118.49 L947.19 116.86 L946.43 115.23 L945.67 113.61 L944.91 111.98 L944.14 110.35 L943.37 108.72 L942.6 107.09 L941.82 105.47 L941.04 103.84 L940.26 102.21 L939.47 100.58 L938.68 98.96 L937.89 97.33 L937.1 95.7 L936.3 94.07 L935.5 92.45 L934.7 90.82 L933.89 89.19 L933.09 87.56 L932.28 85.94 L931.46 84.31 L930.65 82.68 L929.83 81.05 L929.02 79.43 L928.2 77.8 L927.37 76.17 L926.55 74.54 L925.72 72.92 L924.9 71.29 L924.07 69.66 L923.24 68.03 L922.4 66.41 L921.57 64.78 L920.73 63.15 L919.9 61.52 L919.06 59.9 L918.22 58.27 L917.38 56.64 L916.53 55.01 L915.69 53.39 L914.85 51.76 L914 50.13 L913.15 48.5 L912.31 46.88 L911.46 45.25 L910.61 43.62 L909.76 41.99 L908.91 40.37 L908.06 38.74 L907.21 37.11 L906.36 35.48 L905.51 33.86 L904.66 32.23 L903.8 30.6 L902.95 28.97 L902.1 27.35"/>
<path d="M902.1 613.25 L902.53 611.63 L902.95 610 L903.38 608.37 L903.8 606.74 L904.23 605.12 L904.66 603.49 L905.08 601.86 L905.51 600.23 L905.93 598.61 L906.36 596.98 L906.78 595.35 L907.2 593.72 L907.63 592.1 L908.05 590.47 L908.47 588.84 L908.9 587.21 L909.32 585.59 L909.74 583.96 L910.16 582.33 L910.58 580.7 L911 579.08 L911.42 577.45 L911.83 575.82 L912.25 574.19 L912.67 572.57 L913.08 570.94 L913.5 569.31 L913.91 567.68 L914.32 566.06 L914.74 564.43 L915.15 562.8 L915.56 561.17 L915.97 559.55 L916.38 557.92 L916.78 556.29 L917.19 554.66 L917.59 553.04 L918 551.41 L918.4 549.78 L918.8 548.15 L919.2 546.53 L919.6 544.9 L919.99 543.27 L920.39 541.64 L920.78 540.02 L921.18 538.39 L921.57 536.76 L921.96 535.13 L922.35 533.51 L922.73 531.88 L923.12 530.25 L923.5 528.62 L923.89 526.99 L924.27 525.37 L924.65 523.74 L925.02 522.11 L925.4 520.48 L925.77 518.86 L926.14 517.23 L926.51 515.6 L926.88 513.97 L927.25 512.35 L927.61 510.72 L927.97 509.09 L928.33 507.46 L928.69 505.84 L929.05 504.21 L929.4 502.58 L929.76 500.95 L930.11 499.33 L930.45 497.7 L930.8 496.07 L931.14 494.44 L931.48 492.82 L931.82 491.19 L932.16 489.56 L932.49 487.93 L932.83 486.31 L933.16 484.68 L933.48 483.05 L933.81 481.42 L934.13 479.8 L934.45 478.17 L934.77 476.54 L935.09 474.91 L935.4 473.29 L935.71 471.66 L936.02 470.03 L936.32 468.4 L936.62 466.78 L936.92 465.15 L937.22 463.52 L937.52 461.89 L937.81 460.27 L938.1 458.64 L938.38 457.01 L938.67 455.38 L938.95 453.76 L939.23 452.13 L939.5 450.5 L939.78 448.87 L940.04 447.25 L940.31 445.62 L940.58 443.99 L940.84 442.36 L941.09 440.74 L941.35 439.11 L941.6 437.48 L941.85 435.85 L942.1 434.23 L942.34 432.6 L942.58 430.97 L942.81 429.34 L943.05 427.72 L943.28 426.09 L943.51 424.46 L943.73 422.83 L943.95 421.21 L944.17 419.58 L944.38 417.95 L944.6 416.32 L944.8 414.7 L945.01 413.07 L945.21 411.44 L945.41 409.81 L945.6 408.19 L945.8 406.56 L945.98 404.93 L946.17 403.3 L946.35 401.68 L946.53 400.05 L946.7 398.42 L946.88 396.79 L947.04 395.17 L947.21 393.54 L947.37 391.91 L947.53 390.28 L947.68 388.66 L947.83 387.03 L947.98 385.4 L948.13 383.77 L948.27 382.15 L948.4 380.52 L948.54 378.89 L948.67 377.26 L948.79 375.64 L948.91 374.01 L949.03 372.38 L949.15 370.75 L949.26 369.13 L949.37 367.5 L949.48 365.87 L949.58 364.24 L949.67 362.62 L949.77 360.99 L949.86 359.36 L949.95 357.73 L950.03 356.11 L950.11 354.48 L950.18 352.85 L950.26 351.22 L950.32 349.6 L950.39 347.97 L950.45 346.34 L950.51 344.71 L950.56 343.09 L950.61 341.46 L950.66 339.83 L950.7 338.2 L950.74 336.58 L950.78 334.95 L950.81 333.32 L950.83 331.69 L950.86 330.07 L950.88 328.44 L950.9 326.81 L950.91 325.18 L950.92 323.56 L950.92 321.93 L950.93 320.3 L950.92 318.67 L950.92 317.04 L950.91 315.42 L950.9 313.79 L950.88 312.16 L950.86 310.53 L950.83 308.91 L950.81 307.28 L950.78 305.65 L950.74 304.02 L950.7 302.4 L950.66 300.77 L950.61 299.14 L950.56 297.51 L950.51 295.89 L950.45 294.26 L950.39 292.63 L950.32 291 L950.26 289.38 L950.18 287.75 L950.11 286.12 L950.03 284.49 L949.95 282.87 L949.86 281.24 L949.77 279.61 L949.67 277.98 L949.58 276.36 L949.48 274.73 L949.37 273.1 L949.26 271.47 L949.15 269.85 L949.03 268.22 L948.91 266.59 L948.79 264.96 L948.67 263.34 L948.54 261.71 L948.4 260.08 L948.27 258.45 L948.13 256.83 L947.98 255.2 L947.83 253.57 L947.68 251.94 L947.53 250.32 L947.37 248.69 L947.21 247.06 L947.04 245.43 L946.88 243.81 L946.7 242.18 L946.53 240.55 L946.35 238.92 L946.17 237.3 L945.98 235.67 L945.8 234.04 L945.6 232.41 L945.41 230.79 L945.21 229.16 L945.01 227.53 L944.8 225.9 L944.6 224.28 L944.38 222.65 L944.17 221.02 L943.95 219.39 L943.73 217.77 L943.51 216.14 L943.28 214.51 L943.05 212.88 L942.81 211.26 L942.58 209.63 L942.34 208 L942.1 206.37 L941.85 204.75 L941.6 203.12 L941.35 201.49 L941.09 199.86 L940.84 198.24 L940.58 196.61 L940.31 194.98 L940.04 193.35 L939.78 191.73 L939.5 190.1 L939.23 188.47 L938.95 186.84 L938.67 185.22 L938.38 183.59 L938.1 181.96 L937.81 180.33 L937.52 178.71 L937.22 177.08 L936.92 175.45 L936.62 173.82 L936.32 172.2 L936.02 170.57 L935.71 168.94 L935.4 167.31 L935.09 165.69 L934.77 164.06 L934.45 162.43 L934.13 160.8 L933.81 159.18 L933.48 157.55 L933.16 155.92 L932.83 154.29 L932.49 152.67 L932.16 151.04 L931.82 149.41 L931.48 147.78 L931.14 146.16 L930.8 144.53 L930.45 142.9 L930.11 141.27 L929.76 139.65 L929.4 138.02 L929.05 136.39 L928.69 134.76 L928.33 133.14 L927.97 131.51 L927.61 129.88 L927.25 128.25 L926.88 126.63 L926.51 125 L926.14 123.37 L925.77 121.74 L925.4 120.12 L925.02 118.49 L924.65 116.86 L924.27 115.23 L923.89 113.61 L923.5 111.98 L923.12 110.35 L922.73 108.72 L922.35 107.09 L921.96 105.47 L921.57 103.84 L921.18 102.21 L920.78 100.58 L920.39 98.96 L919.99 97.33 L919.6 95.7 L919.2 94.07 L918.8 92.45 L918.4 90.82 L918 89.19 L917.59 87.56 L917.19 85.94 L916.78 84.31 L916.38 82.68 L915.97 81.05 L915.56 79.43 L915.15 77.8 L914.74 76.17 L914.32 74.54 L913.91 72.92 L913.5 71.29 L913.08 69.66 L912.67 68.03 L912.25 66.41 L911.83 64.78 L911.42 63.15 L911 61.52 L910.58 59.9 L910.16 58.27 L909.74 56.64 L909.32 55.01 L908.9 53.39 L908.47 51.76 L908.05 50.13 L907.63 48.5 L907.2 46.88 L906.78 45.25 L906.36 43.62 L905.93 41.99 L905.51 40.37 L905.08 38.74 L904.66 37.11 L904.23 35.48 L903.8 33.86 L903.38 32.23 L902.95 30.6 L902.53 28.97 L902.1 27.35"/>
<path d="M902.1 613.25 L902.1 611.63 L902.1 610 L902.1 608.37 L902.1 606.74 L902.1 605.12 L902.1 603.49 L902.1 601.86 L902.1 600.23 L902.1 598.61 L902.1 596.98 L902.1 595.35 L902.1 593.72 L902.1 592.1 L902.1 590.47 L902.1 588.84 L902.1 587.21 L902.1 585.59 L902.1 583.96 L902.1 582.33 L902.1 580.7 L902.1 579.08 L902.1 577.45 L902.1 575.82 L902.1 574.19 L902.1 572.57 L902.1 570.94 L902.1 569.31 L902.1 567.68 L902.1 566.06 L902.1 564.43 L902.1 562.8 L902.1 561.17 L902.1 559.55 L902.1 557.92 L902.1 556.29 L902.1 554.66 L902.1 553.04 L902.1 551.41 L902.1 549.78 L902.1 548.15 L902.1 546.53 L902.1 544.9 L902.1 543.27 L902.1 541.64 L902.1 540.02 L902.1 538.39 L902.1 536.76 L902.1 535.13 L902.1 533.51 L902.1 531.88 L902.1 530.25 L902.1 528.62 L902.1 526.99 L902.1 525.37 L902.1 523.74 L902.1 522.11 L902.1 520.48 L902.1 518.86 L902.1 517.23 L902.1 515.6 L902.1 513.97 L902.1 512.35 L902.1 510.72 L902.1 509.09 L902.1 507.46 L902.1 505.84 L902.1 504.21 L902.1 502.58 L902.1 500.95 L902.1 499.33 L902.1 497.7 L902.1 496.07 L902.1 494.44 L902.1 492.82 L902.1 491.19 L902.1 489.56 L902.1 487.93 L902.1 486.31 L902.1 484.68 L902.1 483.05 L902.1 481.42 L902.1 479.8 L902.1 478.17 L902.1 476.54 L902.1 474.91 L902.1 473.29 L902.1 471.66 L902.1 470.03 L902.1 468.4 L902.1 466.78 L902.1 465.15 L902.1 463.52 L902.1 461.89 L902.1 460.27 L902.1 458.64 L902.1 457.01 L902.1 455.38 L902.1 453.76 L902.1 452.13 L902.1 450.5 L902.1 448.87 L902.1 447.25 L902.1 445.62 L902.1 443.99 L902.1 442.36 L902.1 440.74 L902.1 439.11 L902.1 437.48 L902.1 435.85 L902.1 434.23 L902.1 432.6 L902.1 430.97 L902.1 429.34 L902.1 427.72 L902.1 426.09 L902.1 424.46 L902.1 422.83 L902.1 421.21 L902.1 419.58 L902.1 417.95 L902.1 416.32 L902.1 414.7 L902.1 413.07 L902.1 411.44 L902.1 409.81 L902.1 408.19 L902.1 406.56 L902.1 404.93 L902.1 403.3 L902.1 401.68 L902.1 400.05 L902.1 398.42 L902.1 396.79 L902.1 395.17 L902.1 393.54 L902.1 391.91 L902.1 390.28 L902.1 388.66 L902.1 387.03 L902.1 385.4 L902.1 383.77 L902.1 382.15 L902.1 380.52 L902.1 378.89 L902.1 377.26 L902.1 375.64 L902.1 374.01 L902.1 372.38 L902.1 370.75 L902.1 369.13 L902.1 367.5 L902.1 365.87 L902.1 364.24 L902.1 362.62 L902.1 360.99 L902.1 359.36 L902.1 357.73 L902.1 356.11 L902.1 354.48 L902.1 352.85 L902.1 351.22 L902.1 349.6 L902.1 347.97 L902.1 346.34 L902.1 344.71 L902.1 343.09 L902.1 341.46 L902.1 339.83 L902.1 338.2 L902.1 336.58 L902.1 334.95 L902.1 333.32 L902.1 331.69 L902.1 330.07 L902.1 328.44 L902.1 326.81 L902.1 325.18 L902.1 323.56 L902.1 321.93 L902.1 320.3 L902.1 318.67 L902.1 317.04 L902.1 315.42 L902.1 313.79 L902.1 312.16 L902.1 310.53 L902.1 308.91 L902.1 307.28 L902.1 305.65 L902.1 304.02 L902.1 302.4 L902.1 300.77 L902.1 299.14 L902.1 297.51 L902.1 295.89 L902.1 294.26 L902.1 292.63 L902.1 291 L902.1 289.38 L902.1 287.75 L902.1 286.12 L902.1 284.49 L902.1 282.87 L902.1 281.24 L902.1 279.61 L902.1 277.98 L902.1 276.36 L902.1 274.73 L902.1 273.1 L902.1 271.47 L902.1 269.85 L902.1 268.22 L902.1 266.59 L902.1 264.96 L902.1 263.34 L902.1 261.71 L902.1 260.08 L902.1 258.45 L902.1 256.83 L902.1 255.2 L902.1 253.57 L902.1 251.94 L902.1 250.32 L902.1 248.69 L902.1 247.06 L902.1 245.43 L902.1 243.81 L902.1 242.18 L902.1 240.55 L902.1 238.92 L902.1 237.3 L902.1 235.67 L902.1 234.04 L902.1 232.41 L902.1 230.79 L902.1 229.16 L902.1 227.53 L902.1 225.9 L902.1 224.28 L902.1 222.65 L902.1 221.02 L902.1 219.39 L902.1 217.77 L902.1 216.14 L902.1 214.51 L902.1 212.88 L902.1 211.26 L902.1 209.63 L902.1 208 L902.1 206.37 L902.1 204.75 L902.1 203.12 L902.1 201.49 L902.1 199.86 L902.1 198.24 L902.1 196.61 L902.1 194.98 L902.1 193.35 L902.1 191.73 L902.1 190.1 L902.1 188.47 L902.1 186.84 L902.1 185.22 L902.1 183.59 L902.1 181.96 L902.1 180.33 L902.1 178.71 L902.1 177.08 L902.1 175.45 L902.1 173.82 L902.1 172.2 L902.1 170.57 L902.1 168.94 L902.1 167.31 L902.1 165.69 L902.1 164.06 L902.1 162.43 L902.1 160.8 L902.1 159.18 L902.1 157.55 L902.1 155.92 L902.1 154.29 L902.1 152.67 L902.1 151.04 L902.1 149.41 L902.1 147.78 L902.1 146.16 L902.1 144.53 L902.1 142.9 L902.1 141.27 L902.1 139.65 L902.1 138.02 L902.1 136.39 L902.1 134.76 L902.1 133.14 L902.1 131.51 L902.1 129.88 L902.1 128.25 L902.1 126.63 L902.1 125 L902.1 123.37 L902.1 121.74 L902.1 120.12 L902.1 118.49 L902.1 116.86 L902.1 115.23 L902.1 113.61 L902.1 111.98 L902.1 110.35 L902.1 108.72 L902.1 107.09 L902.1 105.47 L902.1 103.84 L902.1 102.21 L902.1 100.58 L902.1 98.96 L902.1 97.33 L902.1 95.7 L902.1 94.07 L902.1 92.45 L902.1 90.82 L902.1 89.19 L902.1 87.56 L902.1 85.94 L902.1 84.31 L902.1 82.68 L902.1 81.05 L902.1 79.43 L902.1 77.8 L902.1 76.17 L902.1 74.54 L902.1 72.92 L902.1 71.29 L902.1 69.66 L902.1 68.03 L902.1 66.41 L902.1 64.78 L902.1 63.15 L902.1 61.52 L902.1 59.9 L902.1 58.27 L902.1 56.64 L902.1 55.01 L902.1 53.39 L902.1 51.76 L902.1 50.13 L902.1 48.5 L902.1 46.88 L902.1 45.25 L902.1 43.62 L902.1 41.99 L902.1 40.37 L902.1 38.74 L902.1 37.11 L902.1 35.48 L902.1 33.86 L902.1 32.23 L902.1 30.6 L902.1 28.97 L902.1 27.35"/>
<path d="M902.1 613.25 L901.67 611.63 L901.25 610 L900.82 608.37 L900.4 606.74 L899.97 605.12 L899.54 603.49 L899.12 601.86 L898.69 600.23 L898.27 598.61 L897.84 596.98 L897.42 595.35 L897 593.72 L896.57 592.1 L896.15 590.47 L895.73 588.84 L895.3 587.21 L894.88 585.59 L894.46 583.96 L894.04 582.33 L893.62 580.7 L893.2 579.08 L892.78 577.45 L892.37 575.82 L891.95 574.19 L891.53 572.57 L891.12 570.94 L890.7 569.31 L890.29 567.68 L889.88 566.06 L889.46 564.43 L889.05 562.8 L888.64 561.17 L888.23 559.55 L887.82 557.92 L887.42 556.29 L887.01 554.66 L886.61 553.04 L886.2 551.41 L885.8 549.78 L885.4 548.15 L885 546.53 L884.6 544.9 L884.21 543.27 L883.81 541.64 L883.42 540.02 L883.02 538.39 L882.63 536.76 L882.24 535.13 L881.85 533.51 L881.47 531.88 L881.08 530.25 L880.7 528.62 L880.31 526.99 L879.93 525.37 L879.55 523.74 L879.18 522.11 L878.8 520.48 L878.43 518.86 L878.06 517.23 L877.69 515.6 L877.32 513.97 L876.95 512.35 L876.59 510.72 L876.23 509.09 L875.87 507.46 L875.51 505.84 L875.15 504.21 L874.8 502.58 L874.44 500.95 L874.09 499.33 L873.75 497.7 L873.4 496.07 L873.06 494.44 L872.72 492.82 L872.38 491.19 L872.04 489.56 L871.71 487.93 L871.37 486.31 L871.04 484.68 L870.72 483.05 L870.39 481.42 L870.07 479.8 L869.75 478.17 L869.43 476.54 L869.11 474.91 L868.8 473.29 L868.49 471.66 L868.18 470.03 L867.88 468.4 L867.58 466.78 L867.28 465.15 L866.98 463.52 L866.68 461.89 L866.39 460.27 L866.1 458.64 L865.82 457.01 L865.53 455.38 L865.25 453.76 L864.97 452.13 L864.7 450.5 L864.42 448.87 L864.16 447.25 L863.89 445.62 L863.62 443.99 L863.36 442.36 L863.11 440.74 L862.85 439.11 L862.6 437.48 L862.35 435.85 L862.1 434.23 L861.86 432.6 L861.62 430.97 L861.39 429.34 L861.15 427.72 L860.92 426.09 L860.69 424.46 L860.47 422.83 L860.25 421.21 L860.03 419.58 L859.82 417.95 L859.6 416.32 L859.4 414.7 L859.19 413.07 L858.99 411.44 L858.79 409.81 L858.6 408.19 L858.4 406.56 L858.22 404.93 L858.03 403.3 L857.85 401.68 L857.67 400.05 L857.5 398.42 L857.32 396.79 L857.16 395.17 L856.99 393.54 L856.83 391.91 L856.67 390.28 L856.52 388.66 L856.37 387.03 L856.22 385.4 L856.07 383.77 L855.93 382.15 L855.8 380.52 L855.66 378.89 L855.53 377.26 L855.41 375.64 L855.29 374.01 L855.17 372.38 L855.05 370.75 L854.94 369.13 L854.83 367.5 L854.72 365.87 L854.62 364.24 L854.53 362.62 L854.43 360.99 L854.34 359.36 L854.25 357.73 L854.17 356.11 L854.09 354.48 L854.02 352.85 L853.94 351.22 L853.88 349.6 L853.81 347.97 L853.75 346.34 L853.69 344.71 L853.64 343.09 L853.59 341.46 L853.54 339.83 L853.5 338.2 L853.46 336.58 L853.42 334.95 L853.39 333.32 L853.37 331.69 L853.34 330.07 L853.32 328.44 L853.3 326.81 L853.29 325.18 L853.28 323.56 L853.28 321.93 L853.27 320.3 L853.28 318.67 L853.28 317.04 L853.29 315.42 L853.3 313.79 L853.32 312.16 L853.34 310.53 L853.37 308.91 L853.39 307.28 L853.42 305.65 L853.46 304.02 L853.5 302.4 L853.54 300.77 L853.59 299.14 L853.64 297.51 L853.69 295.89 L853.75 294.26 L853.81 292.63 L853.88 291 L853.94 289.38 L854.02 287.75 L854.09 286.12 L854.17 284.49 L854.25 282.87 L854.34 281.24 L854.43 279.61 L854.53 277.98 L854.62 276.36 L854.72 274.73 L854.83 273.1 L854.94 271.47 L855.05 269.85 L855.17 268.22 L855.29 266.59 L855.41 264.96 L855.53 263.34 L855.66 261.71 L855.8 260.08 L855.93 258.45 L856.07 256.83 L856.22 255.2 L856.37 253.57 L856.52 251.94 L856.67 250.32 L856.83 248.69 L856.99 247.06 L857.16 245.43 L857.32 243.81 L857.5 242.18 L857.67 240.55 L857.85 238.92 L858.03 237.3 L858.22 235.67 L858.4 234.04 L858.6 232.41 L858.79 230.79 L858.99 229.16 L859.19 227.53 L859.4 225.9 L859.6 224.28 L859.82 222.65 L860.03 221.02 L860.25 219.39 L860.47 217.77 L860.69 216.14 L860.92 214.51 L861.15 212.88 L861.39 211.26 L861.62 209.63 L861.86 208 L862.1 206.37 L862.35 204.75 L862.6 203.12 L862.85 201.49 L863.11 199.86 L863.36 198.24 L863.62 196.61 L863.89 194.98 L864.16 193.35 L864.42 191.73 L864.7 190.1 L864.97 188.47 L865.25 186.84 L865.53 185.22 L865.82 183.59 L866.1 181.96 L866.39 180.33 L866.68 178.71 L866.98 177.08 L867.28 175.45 L867.58 173.82 L867.88 172.2 L868.18 170.57 L868.49 168.94 L868.8 167.31 L869.11 165.69 L869.43 164.06 L869.75 162.43 L870.07 160.8 L870.39 159.18 L870.72 157.55 L871.04 155.92 L871.37 154.29 L871.71 152.67 L872.04 151.04 L872.38 149.41 L872.72 147.78 L873.06 146.16 L873.4 144.53 L873.75 142.9 L874.09 141.27 L874.44 139.65 L874.8 138.02 L875.15 136.39 L875.51 134.76 L875.87 133.14 L876.23 131.51 L876.59 129.88 L876.95 128.25 L877.32 126.63 L877.69 125 L878.06 123.37 L878.43 121.74 L878.8 120.12 L879.18 118.49 L879.55 116.86 L879.93 115.23 L880.31 113.61 L880.7 111.98 L881.08 110.35 L881.47 108.72 L881.85 107.09 L882.24 105.47 L882.63 103.84 L883.02 102.21 L883.42 100.58 L883.81 98.96 L884.21 97.33 L884.6 95.7 L885 94.07 L885.4 92.45 L885.8 90.82 L886.2 89.19 L886.61 87.56 L887.01 85.94 L887.42 84.31 L887.82 82.68 L888.23 81.05 L888.64 79.43 L889.05 77.8 L889.46 76.17 L889.88 74.54 L890.29 72.92 L890.7 71.29 L891.12 69.66 L891.53 68.03 L891.95 66.41 L892.37 64.78 L892.78 63.15 L893.2 61.52 L893.62 59.9 L894.04 58.27 L894.46 56.64 L894.88 55.01 L895.3 53.39 L895.73 51.76 L896.15 50.13 L896.57 48.5 L897 46.88 L897.42 45.25 L897.84 43.62 L898.27 41.99 L898.69 40.37 L899.12 38.74 L899.54 37.11 L899.97 35.48 L900.4 33.86 L900.82 32.23 L901.25 30.6 L901.67 28.97 L902.1 27.35"/>
<path d="M902.1 613.25 L901.25 611.63 L900.4 610 L899.54 608.37 L898.69 606.74 L897.84 605.12 L896.99 603.49 L896.14 601.86 L895.29 600.23 L894.44 598.61 L893.59 596.98 L892.74 595.35 L891.89 593.72 L891.05 592.1 L890.2 590.47 L889.35 588.84 L888.51 587.21 L887.67 585.59 L886.82 583.96 L885.98 582.33 L885.14 580.7 L884.3 579.08 L883.47 577.45 L882.63 575.82 L881.8 574.19 L880.96 572.57 L880.13 570.94 L879.3 569.31 L878.48 567.68 L877.65 566.06 L876.83 564.43 L876 562.8 L875.18 561.17 L874.37 559.55 L873.55 557.92 L872.74 556.29 L871.92 554.66 L871.11 553.04 L870.31 551.41 L869.5 549.78 L868.7 548.15 L867.9 546.53 L867.1 544.9 L866.31 543.27 L865.52 541.64 L864.73 540.02 L863.94 538.39 L863.16 536.76 L862.38 535.13 L861.6 533.51 L860.83 531.88 L860.06 530.25 L859.29 528.62 L858.53 526.99 L857.77 525.37 L857.01 523.74 L856.26 522.11 L855.5 520.48 L854.76 518.86 L854.01 517.23 L853.27 515.6 L852.54 513.97 L851.81 512.35 L851.08 510.72 L850.35 509.09 L849.63 507.46 L848.92 505.84 L848.2 504.21 L847.49 502.58 L846.79 500.95 L846.09 499.33 L845.39 497.7 L844.7 496.07 L844.01 494.44 L843.33 492.82 L842.65 491.19 L841.98 489.56 L841.31 487.93 L840.65 486.31 L839.99 484.68 L839.33 483.05 L838.68 481.42 L838.04 479.8 L837.39 478.17 L836.76 476.54 L836.13 474.91 L835.5 473.29 L834.88 471.66 L834.27 470.03 L833.66 468.4 L833.05 466.78 L832.45 465.15 L831.86 463.52 L831.27 461.89 L830.68 460.27 L830.1 458.64 L829.53 457.01 L828.96 455.38 L828.4 453.76 L827.85 452.13 L827.29 450.5 L826.75 448.87 L826.21 447.25 L825.68 445.62 L825.15 443.99 L824.63 442.36 L824.11 440.74 L823.6 439.11 L823.1 437.48 L822.6 435.85 L822.11 434.23 L821.62 432.6 L821.14 430.97 L820.67 429.34 L820.2 427.72 L819.74 426.09 L819.29 424.46 L818.84 422.83 L818.4 421.21 L817.96 419.58 L817.53 417.95 L817.11 416.32 L816.69 414.7 L816.28 413.07 L815.88 411.44 L815.48 409.81 L815.09 408.19 L814.71 406.56 L814.33 404.93 L813.96 403.3 L813.6 401.68 L813.24 400.05 L812.89 398.42 L812.55 396.79 L812.21 395.17 L811.88 393.54 L811.56 391.91 L811.24 390.28 L810.93 388.66 L810.63 387.03 L810.34 385.4 L810.05 383.77 L809.77 382.15 L809.5 380.52 L809.23 378.89 L808.97 377.26 L808.72 375.64 L808.47 374.01 L808.23 372.38 L808 370.75 L807.78 369.13 L807.56 367.5 L807.35 365.87 L807.15 364.24 L806.95 362.62 L806.76 360.99 L806.58 359.36 L806.41 357.73 L806.24 356.11 L806.08 354.48 L805.93 352.85 L805.79 351.22 L805.65 349.6 L805.52 347.97 L805.4 346.34 L805.28 344.71 L805.18 343.09 L805.08 341.46 L804.98 339.83 L804.9 338.2 L804.82 336.58 L804.75 334.95 L804.69 333.32 L804.63 331.69 L804.58 330.07 L804.54 328.44 L804.51 326.81 L804.48 325.18 L804.46 323.56 L804.45 321.93 L804.45 320.3 L804.45 318.67 L804.46 317.04 L804.48 315.42 L804.51 313.79 L804.54 312.16 L804.58 310.53 L804.63 308.91 L804.69 307.28 L804.75 305.65 L804.82 304.02 L804.9 302.4 L804.98 300.77 L805.08 299.14 L805.18 297.51 L805.28 295.89 L805.4 294.26 L805.52 292.63 L805.65 291 L805.79 289.38 L805.93 287.75 L806.08 286.12 L806.24 284.49 L806.41 282.87 L806.58 281.24 L806.76 279.61 L806.95 277.98 L807.15 276.36 L807.35 274.73 L807.56 273.1 L807.78 271.47 L808 269.85 L808.23 268.22 L808.47 266.59 L808.72 264.96 L808.97 263.34 L809.23 261.71 L809.5 260.08 L809.77 258.45 L810.05 256.83 L810.34 255.2 L810.63 253.57 L810.93 251.94 L811.24 250.32 L811.56 248.69 L811.88 247.06 L812.21 245.43 L812.55 243.81 L812.89 242.18 L813.24 240.55 L813.6 238.92 L813.96 237.3 L814.33 235.67 L814.71 234.04 L815.09 232.41 L815.48 230.79 L815.88 229.16 L816.28 227.53 L816.69 225.9 L817.11 224.28 L817.53 222.65 L817.96 221.02 L818.4 219.39 L818.84 217.77 L819.29 216.14 L819.74 214.51 L820.2 212.88 L820.67 211.26 L821.14 209.63 L821.62 208 L822.11 206.37 L822.6 204.75 L823.1 203.12 L823.6 201.49 L824.11 199.86 L824.63 198.24 L825.15 196.61 L825.68 194.98 L826.21 193.35 L826.75 191.73 L827.29 190.1 L827.85 188.47 L828.4 186.84 L828.96 185.22 L829.53 183.59 L830.1 181.96 L830.68 180.33 L831.27 178.71 L831.86 177.08 L832.45 175.45 L833.05 173.82 L833.66 172.2 L834.27 170.57 L834.88 168.94 L835.5 167.31 L836.13 165.69 L836.76 164.06 L837.39 162.43 L838.04 160.8 L838.68 159.18 L839.33 157.55 L839.99 155.92 L840.65 154.29 L841.31 152.67 L841.98 151.04 L842.65 149.41 L843.33 147.78 L844.01 146.16 L844.7 144.53 L845.39 142.9 L846.09 141.27 L846.79 139.65 L847.49 138.02 L848.2 136.39 L848.92 134.76 L849.63 133.14 L850.35 131.51 L851.08 129.88 L851.81 128.25 L852.54 126.63 L853.27 125 L854.01 123.37 L854.76 121.74 L855.5 120.12 L856.26 118.49 L857.01 116.86 L857.77 115.23 L858.53 113.61 L859.29 111.98 L860.06 110.35 L860.83 108.72 L861.6 107.09 L862.38 105.47 L863.16 103.84 L863.94 102.21 L864.73 100.58 L865.52 98.96 L866.31 97.33 L867.1 95.7 L867.9 94.07 L868.7 92.45 L869.5 90.82 L870.31 89.19 L871.11 87.56 L871.92 85.94 L872.74 84.31 L873.55 82.68 L874.37 81.05 L875.18 79.43 L876 77.8 L876.83 76.17 L877.65 74.54 L878.48 72.92 L879.3 71.29 L880.13 69.66 L880.96 68.03 L881.8 66.41 L882.63 64.78 L883.47 63.15 L884.3 61.52 L885.14 59.9 L885.98 58.27 L886.82 56.64 L887.67 55.01 L888.51 53.39 L889.35 51.76 L890.2 50.13 L891.05 48.5 L891.89 46.88 L892.74 45.25 L893.59 43.62 L894.44 41.99 L895.29 40.37 L896.14 38.74 L896.99 37.11 L897.84 35.48 L898.69 33.86 L899.54 32.23 L900.4 30.6 L901.25 28.97 L902.1 27.35"/>
<path d="M902.1 613.25 L900.82 611.63 L899.54 610 L898.27 608.37 L896.99 606.74 L895.71 605.12 L894.43 603.49 L893.16 601.86 L891.88 600.23 L890.61 598.61 L889.33 596.98 L888.06 595.35 L886.79 593.72 L885.52 592.1 L884.25 590.47 L882.98 588.84 L881.71 587.21 L880.45 585.59 L879.19 583.96 L877.92 582.33 L876.66 580.7 L875.41 579.08 L874.15 577.45 L872.9 575.82 L871.65 574.19 L870.4 572.57 L869.15 570.94 L867.91 569.31 L866.66 567.68 L865.43 566.06 L864.19 564.43 L862.96 562.8 L861.73 561.17 L860.5 559.55 L859.27 557.92 L858.05 556.29 L856.84 554.66 L855.62 553.04 L854.41 551.41 L853.21 549.78 L852 548.15 L850.8 546.53 L849.61 544.9 L848.42 543.27 L847.23 541.64 L846.05 540.02 L844.87 538.39 L843.69 536.76 L842.52 535.13 L841.36 533.51 L840.2 531.88 L839.04 530.25 L837.89 528.62 L836.74 526.99 L835.6 525.37 L834.46 523.74 L833.33 522.11 L832.21 520.48 L831.09 518.86 L829.97 517.23 L828.86 515.6 L827.76 513.97 L826.66 512.35 L825.57 510.72 L824.48 509.09 L823.4 507.46 L822.32 505.84 L821.25 504.21 L820.19 502.58 L819.13 500.95 L818.08 499.33 L817.04 497.7 L816 496.07 L814.97 494.44 L813.95 492.82 L812.93 491.19 L811.92 489.56 L810.92 487.93 L809.92 486.31 L808.93 484.68 L807.95 483.05 L806.97 481.42 L806 479.8 L805.04 478.17 L804.09 476.54 L803.14 474.91 L802.2 473.29 L801.27 471.66 L800.35 470.03 L799.43 468.4 L798.53 466.78 L797.63 465.15 L796.73 463.52 L795.85 461.89 L794.97 460.27 L794.11 458.64 L793.25 457.01 L792.4 455.38 L791.55 453.76 L790.72 452.13 L789.89 450.5 L789.07 448.87 L788.27 447.25 L787.47 445.62 L786.67 443.99 L785.89 442.36 L785.12 440.74 L784.35 439.11 L783.6 437.48 L782.85 435.85 L782.11 434.23 L781.38 432.6 L780.67 430.97 L779.96 429.34 L779.25 427.72 L778.56 426.09 L777.88 424.46 L777.21 422.83 L776.54 421.21 L775.89 419.58 L775.25 417.95 L774.61 416.32 L773.99 414.7 L773.37 413.07 L772.77 411.44 L772.17 409.81 L771.59 408.19 L771.01 406.56 L770.45 404.93 L769.89 403.3 L769.35 401.68 L768.81 400.05 L768.29 398.42 L767.77 396.79 L767.27 395.17 L766.77 393.54 L766.29 391.91 L765.82 390.28 L765.35 388.66 L764.9 387.03 L764.46 385.4 L764.02 383.77 L763.6 382.15 L763.19 380.52 L762.79 378.89 L762.4 377.26 L762.02 375.64 L761.66 374.01 L761.3 372.38 L760.95 370.75 L760.61 369.13 L760.29 367.5 L759.97 365.87 L759.67 364.24 L759.38 362.62 L759.1 360.99 L758.82 359.36 L758.56 357.73 L758.31 356.11 L758.08 354.48 L757.85 352.85 L757.63 351.22 L757.43 349.6 L757.23 347.97 L757.05 346.34 L756.88 344.71 L756.72 343.09 L756.56 341.46 L756.43 339.83 L756.3 338.2 L756.18 336.58 L756.07 334.95 L755.98 333.32 L755.9 331.69 L755.82 330.07 L755.76 328.44 L755.71 326.81 L755.67 325.18 L755.65 323.56 L755.63 321.93 L755.62 320.3 L755.63 318.67 L755.65 317.04 L755.67 315.42 L755.71 313.79 L755.76 312.16 L755.82 310.53 L755.9 308.91 L755.98 307.28 L756.07 305.65 L756.18 304.02 L756.3 302.4 L756.43 300.77 L756.56 299.14 L756.72 297.51 L756.88 295.89 L757.05 294.26 L757.23 292.63 L757.43 291 L757.63 289.38 L757.85 287.75 L758.08 286.12 L758.31 284.49 L758.56 282.87 L758.82 281.24 L759.1 279.61 L759.38 277.98 L759.67 276.36 L759.97 274.73 L760.29 273.1 L760.61 271.47 L760.95 269.85 L761.3 268.22 L761.66 266.59 L762.02 264.96 L762.4 263.34 L762.79 261.71 L763.19 260.08 L763.6 258.45 L764.02 256.83 L764.46 255.2 L764.9 253.57 L765.35 251.94 L765.82 250.32 L766.29 248.69 L766.77 247.06 L767.27 245.43 L767.77 243.81 L768.29 242.18 L768.81 240.55 L769.35 238.92 L769.89 237.3 L770.45 235.67 L771.01 234.04 L771.59 232.41 L772.17 230.79 L772.77 229.16 L773.37 227.53 L773.99 225.9 L774.61 224.28 L775.25 222.65 L775.89 221.02 L776.54 219.39 L777.21 217.77 L777.88 216.14 L778.56 214.51 L779.25 212.88 L779.96 211.26 L780.67 209.63 L781.38 208 L782.11 206.37 L782.85 204.75 L783.6 203.12 L784.35 201.49 L785.12 199.86 L785.89 198.24 L786.67 196.61 L787.47 194.98 L788.27 193.35 L789.07 191.73 L789.89 190.1 L790.72 188.47 L791.55 186.84 L792.4 185.22 L793.25 183.59 L794.11 181.96 L794.97 180.33 L795.85 178.71 L796.73 177.08 L797.63 175.45 L798.53 173.82 L799.43 172.2 L800.35 170.57 L801.27 168.94 L802.2 167.31 L803.14 165.69 L804.09 164.06 L805.04 162.43 L806 160.8 L806.97 159.18 L807.95 157.55 L808.93 155.92 L809.92 154.29 L810.92 152.67 L811.92 151.04 L812.93 149.41 L813.95 147.78 L814.97 146.16 L816 144.53 L817.04 142.9 L818.08 141.27 L819.13 139.65 L820.19 138.02 L821.25 136.39 L822.32 134.76 L823.4 133.14 L824.48 131.51 L825.57 129.88 L826.66 128.25 L827.76 126.63 L828.86 125 L829.97 123.37 L831.09 121.74 L832.21 120.12 L833.33 118.49 L834.46 116.86 L835.6 115.23 L836.74 113.61 L837.89 111.98 L839.04 110.35 L840.2 108.72 L841.36 107.09 L842.52 105.47 L843.69 103.84 L844.87 102.21 L846.05 100.58 L847.23 98.96 L848.42 97.33 L849.61 95.7 L850.8 94.07 L852 92.45 L853.21 90.82 L854.41 89.19 L855.62 87.56 L856.84 85.94 L858.05 84.31 L859.27 82.68 L860.5 81.05 L861.73 79.43 L862.96 77.8 L864.19 76.17 L865.43 74.54 L866.66 72.92 L867.91 71.29 L869.15 69.66 L870.4 68.03 L871.65 66.41 L872.9 64.78 L874.15 63.15 L875.41 61.52 L876.66 59.9 L877.92 58.27 L879.19 56.64 L880.45 55.01 L881.71 53.39 L882.98 51.76 L884.25 50.13 L885.52 48.5 L886.79 46.88 L888.06 45.25 L889.33 43.62 L890.61 41.99 L891.88 40.37 L893.16 38.74 L894.43 37.11 L895.71 35.48 L896.99 33.86 L898.27 32.23 L899.54 30.6 L900.82 28.97 L902.1 27.35"/>
<path d="M902.1 613.25 L900.4 611.63 L898.69 610 L896.99 608.37 L895.28 606.74 L893.58 605.12 L891.88 603.49 L890.18 601.86 L888.48 600.23 L886.78 598.61 L885.08 596.98 L883.38 595.35 L881.69 593.72 L879.99 592.1 L878.3 590.47 L876.61 588.84 L874.92 587.21 L873.23 585.59 L871.55 583.96 L869.87 582.33 L868.19 580.7 L866.51 579.08 L864.83 577.45 L863.16 575.82 L861.49 574.19 L859.83 572.57 L858.17 570.94 L856.51 569.31 L854.85 567.68 L853.2 566.06 L851.55 564.43 L849.91 562.8 L848.27 561.17 L846.63 559.55 L845 557.92 L843.37 556.29 L841.75 554.66 L840.13 553.04 L838.52 551.41 L836.91 549.78 L835.3 548.15 L833.7 546.53 L832.11 544.9 L830.52 543.27 L828.94 541.64 L827.36 540.02 L825.79 538.39 L824.22 536.76 L822.66 535.13 L821.11 533.51 L819.56 531.88 L818.02 530.25 L816.49 528.62 L814.96 526.99 L813.43 525.37 L811.92 523.74 L810.41 522.11 L808.91 520.48 L807.42 518.86 L805.93 517.23 L804.45 515.6 L802.98 513.97 L801.51 512.35 L800.05 510.72 L798.61 509.09 L797.16 507.46 L795.73 505.84 L794.31 504.21 L792.89 502.58 L791.48 500.95 L790.08 499.33 L788.69 497.7 L787.3 496.07 L785.93 494.44 L784.56 492.82 L783.21 491.19 L781.86 489.56 L780.52 487.93 L779.19 486.31 L777.87 484.68 L776.56 483.05 L775.26 481.42 L773.97 479.8 L772.69 478.17 L771.42 476.54 L770.16 474.91 L768.9 473.29 L767.66 471.66 L766.43 470.03 L765.21 468.4 L764 466.78 L762.8 465.15 L761.61 463.52 L760.43 461.89 L759.26 460.27 L758.11 458.64 L756.96 457.01 L755.83 455.38 L754.7 453.76 L753.59 452.13 L752.49 450.5 L751.4 448.87 L750.32 447.25 L749.25 445.62 L748.2 443.99 L747.16 442.36 L746.12 440.74 L745.1 439.11 L744.1 437.48 L743.1 435.85 L742.12 434.23 L741.15 432.6 L740.19 430.97 L739.24 429.34 L738.31 427.72 L737.38 426.09 L736.47 424.46 L735.58 422.83 L734.69 421.21 L733.82 419.58 L732.96 417.95 L732.12 416.32 L731.28 414.7 L730.46 413.07 L729.66 411.44 L728.86 409.81 L728.08 408.19 L727.32 406.56 L726.56 404.93 L725.82 403.3 L725.1 401.68 L724.38 400.05 L723.68 398.42 L723 396.79 L722.32 395.17 L721.66 393.54 L721.02 391.91 L720.39 390.28 L719.77 388.66 L719.17 387.03 L718.58 385.4 L718 383.77 L717.44 382.15 L716.89 380.52 L716.36 378.89 L715.84 377.26 L715.33 375.64 L714.84 374.01 L714.36 372.38 L713.9 370.75 L713.45 369.13 L713.02 367.5 L712.6 365.87 L712.19 364.24 L711.8 362.62 L711.43 360.99 L711.07 359.36 L710.72 357.73 L710.39 356.11 L710.07 354.48 L709.76 352.85 L709.48 351.22 L709.2 349.6 L708.94 347.97 L708.7 346.34 L708.47 344.71 L708.25 343.09 L708.05 341.46 L707.87 339.83 L707.7 338.2 L707.54 336.58 L707.4 334.95 L707.27 333.32 L707.16 331.69 L707.07 330.07 L706.98 328.44 L706.92 326.81 L706.86 325.18 L706.83 323.56 L706.81 321.93 L706.8 320.3 L706.81 318.67 L706.83 317.04 L706.86 315.42 L706.92 313.79 L706.98 312.16 L707.07 310.53 L707.16 308.91 L707.27 307.28 L707.4 305.65 L707.54 304.02 L707.7 302.4 L707.87 300.77 L708.05 299.14 L708.25 297.51 L708.47 295.89 L708.7 294.26 L708.94 292.63 L709.2 291 L709.48 289.38 L709.76 287.75 L710.07 286.12 L710.39 284.49 L710.72 282.87 L711.07 281.24 L711.43 279.61 L711.8 277.98 L712.19 276.36 L712.6 274.73 L713.02 273.1 L713.45 271.47 L713.9 269.85 L714.36 268.22 L714.84 266.59 L715.33 264.96 L715.84 263.34 L716.36 261.71 L716.89 260.08 L717.44 258.45 L718 256.83 L718.58 255.2 L719.17 253.57 L719.77 251.94 L720.39 250.32 L721.02 248.69 L721.66 247.06 L722.32 245.43 L723 243.81 L723.68 242.18 L724.38 240.55 L725.1 238.92 L725.82 237.3 L726.56 235.67 L727.32 234.04 L728.08 232.41 L728.86 230.79 L729.66 229.16 L730.46 227.53 L731.28 225.9 L732.12 224.28 L732.96 222.65 L733.82 221.02 L734.69 219.39 L735.58 217.77 L736.47 216.14 L737.38 214.51 L738.31 212.88 L739.24 211.26 L740.19 209.63 L741.15 208 L742.12 206.37 L743.1 204.75 L744.1 203.12 L745.1 201.49 L746.12 199.86 L747.16 198.24 L748.2 196.61 L749.25 194.98 L750.32 193.35 L751.4 191.73 L752.49 190.1 L753.59 188.47 L754.7 186.84 L755.83 185.22 L756.96 183.59 L758.11 181.96 L759.26 180.33 L760.43 178.71 L761.61 177.08 L762.8 175.45 L764 173.82 L765.21 172.2 L766.43 170.57 L767.66 168.94 L768.9 167.31 L770.16 165.69 L771.42 164.06 L772.69 162.43 L773.97 160.8 L775.26 159.18 L776.56 157.55 L777.87 155.92 L779.19 154.29 L780.52 152.67 L781.86 151.04 L783.21 149.41 L784.56 147.78 L785.93 146.16 L787.3 144.53 L788.69 142.9 L790.08 141.27 L791.48 139.65 L792.89 138.02 L794.31 136.39 L795.73 134.76 L797.16 133.14 L798.61 131.51 L800.05 129.88 L801.51 128.25 L802.98 126.63 L804.45 125 L805.93 123.37 L807.42 121.74 L808.91 120.12 L810.41 118.49 L811.92 116.86 L813.43 115.23 L814.96 113.61 L816.49 111.98 L818.02 110.35 L819.56 108.72 L821.11 107.09 L822.66 105.47 L824.22 103.84 L825.79 102.21 L827.36 100.58 L828.94 98.96 L830.52 97.33 L832.11 95.7 L833.7 94.07 L835.3 92.45 L836.91 90.82 L838.52 89.19 L840.13 87.56 L841.75 85.94 L843.37 84.31 L845 82.68 L846.63 81.05 L848.27 79.43 L849.91 77.8 L851.55 76.17 L853.2 74.54 L854.85 72.92 L856.51 71.29 L858.17 69.66 L859.83 68.03 L861.49 66.41 L863.16 64.78 L864.83 63.15 L866.51 61.52 L868.19 59.9 L869.87 58.27 L871.55 56.64 L873.23 55.01 L874.92 53.39 L876.61 51.76 L878.3 50.13 L879.99 48.5 L881.69 46.88 L883.38 45.25 L885.08 43.62 L886.78 41.99 L888.48 40.37 L890.18 38.74 L891.88 37.11 L893.58 35.48 L895.28 33.86 L896.99 32.23 L898.69 30.6 L900.4 28.97 L902.1 27.35"/>
<path d="M902.1 613.25 L899.97 611.63 L897.84 610 L895.71 608.37 L893.58 606.74 L891.45 605.12 L889.32 603.49 L887.2 601.86 L885.07 600.23 L882.95 598.61 L880.82 596.98 L878.7 595.35 L876.58 593.72 L874.46 592.1 L872.35 590.47 L870.23 588.84 L868.12 587.21 L866.02 585.59 L863.91 583.96 L861.81 582.33 L859.71 580.7 L857.61 579.08 L855.52 577.45 L853.43 575.82 L851.34 574.19 L849.26 572.57 L847.18 570.94 L845.11 569.31 L843.04 567.68 L840.98 566.06 L838.92 564.43 L836.86 562.8 L834.81 561.17 L832.76 559.55 L830.72 557.92 L828.69 556.29 L826.66 554.66 L824.64 553.04 L822.62 551.41 L820.61 549.78 L818.6 548.15 L816.6 546.53 L814.61 544.9 L812.63 543.27 L810.65 541.64 L808.68 540.02 L806.71 538.39 L804.75 536.76 L802.8 535.13 L800.86 533.51 L798.93 531.88 L797 530.25 L795.08 528.62 L793.17 526.99 L791.27 525.37 L789.37 523.74 L787.49 522.11 L785.61 520.48 L783.74 518.86 L781.89 517.23 L780.04 515.6 L778.2 513.97 L776.36 512.35 L774.54 510.72 L772.73 509.09 L770.93 507.46 L769.14 505.84 L767.36 504.21 L765.59 502.58 L763.82 500.95 L762.07 499.33 L760.33 497.7 L758.61 496.07 L756.89 494.44 L755.18 492.82 L753.48 491.19 L751.8 489.56 L750.13 487.93 L748.47 486.31 L746.82 484.68 L745.18 483.05 L743.55 481.42 L741.94 479.8 L740.34 478.17 L738.75 476.54 L737.17 474.91 L735.61 473.29 L734.05 471.66 L732.51 470.03 L730.99 468.4 L729.48 466.78 L727.98 465.15 L726.49 463.52 L725.02 461.89 L723.56 460.27 L722.11 458.64 L720.68 457.01 L719.26 455.38 L717.85 453.76 L716.46 452.13 L715.09 450.5 L713.72 448.87 L712.38 447.25 L711.04 445.62 L709.72 443.99 L708.42 442.36 L707.13 440.74 L705.86 439.11 L704.6 437.48 L703.35 435.85 L702.12 434.23 L700.91 432.6 L699.71 430.97 L698.53 429.34 L697.36 427.72 L696.2 426.09 L695.07 424.46 L693.95 422.83 L692.84 421.21 L691.75 419.58 L690.68 417.95 L689.62 416.32 L688.58 414.7 L687.56 413.07 L686.55 411.44 L685.56 409.81 L684.58 408.19 L683.62 406.56 L682.68 404.93 L681.75 403.3 L680.84 401.68 L679.95 400.05 L679.08 398.42 L678.22 396.79 L677.38 395.17 L676.56 393.54 L675.75 391.91 L674.96 390.28 L674.19 388.66 L673.43 387.03 L672.69 385.4 L671.97 383.77 L671.27 382.15 L670.59 380.52 L669.92 378.89 L669.27 377.26 L668.64 375.64 L668.03 374.01 L667.43 372.38 L666.85 370.75 L666.29 369.13 L665.75 367.5 L665.22 365.87 L664.72 364.24 L664.23 362.62 L663.76 360.99 L663.31 359.36 L662.87 357.73 L662.46 356.11 L662.06 354.48 L661.68 352.85 L661.32 351.22 L660.98 349.6 L660.65 347.97 L660.35 346.34 L660.06 344.71 L659.79 343.09 L659.54 341.46 L659.31 339.83 L659.1 338.2 L658.9 336.58 L658.72 334.95 L658.57 333.32 L658.43 331.69 L658.31 330.07 L658.2 328.44 L658.12 326.81 L658.06 325.18 L658.01 323.56 L657.98 321.93 L657.97 320.3 L657.98 318.67 L658.01 317.04 L658.06 315.42 L658.12 313.79 L658.2 312.16 L658.31 310.53 L658.43 308.91 L658.57 307.28 L658.72 305.65 L658.9 304.02 L659.1 302.4 L659.31 300.77 L659.54 299.14 L659.79 297.51 L660.06 295.89 L660.35 294.26 L660.65 292.63 L660.98 291 L661.32 289.38 L661.68 287.75 L662.06 286.12 L662.46 284.49 L662.87 282.87 L663.31 281.24 L663.76 279.61 L664.23 277.98 L664.72 276.36 L665.22 274.73 L665.75 273.1 L666.29 271.47 L666.85 269.85 L667.43 268.22 L668.03 266.59 L668.64 264.96 L669.27 263.34 L669.92 261.71 L670.59 260.08 L671.27 258.45 L671.97 256.83 L672.69 255.2 L673.43 253.57 L674.19 251.94 L674.96 250.32 L675.75 248.69 L676.56 247.06 L677.38 245.43 L678.22 243.81 L679.08 242.18 L679.95 240.55 L680.84 238.92 L681.75 237.3 L682.68 235.67 L683.62 234.04 L684.58 232.41 L685.56 230.79 L686.55 229.16 L687.56 227.53 L688.58 225.9 L689.62 224.28 L690.68 222.65 L691.75 221.02 L692.84 219.39 L693.95 217.77 L695.07 216.14 L696.2 214.51 L697.36 212.88 L698.53 211.26 L699.71 209.63 L700.91 208 L702.12 206.37 L703.35 204.75 L704.6 203.12 L705.86 201.49 L707.13 199.86 L708.42 198.24 L709.72 196.61 L711.04 194.98 L712.38 193.35 L713.72 191.73 L715.09 190.1 L716.46 188.47 L717.85 186.84 L719.26 185.22 L720.68 183.59 L722.11 181.96 L723.56 180.33 L725.02 178.71 L726.49 177.08 L727.98 175.45 L729.48 173.82 L730.99 172.2 L732.51 170.57 L734.05 168.94 L735.61 167.31 L737.17 165.69 L738.75 164.06 L740.34 162.43 L741.94 160.8 L743.55 159.18 L745.18 157.55 L746.82 155.92 L748.47 154.29 L750.13 152.67 L751.8 151.04 L753.48 149.41 L755.18 147.78 L756.89 146.16 L758.61 144.53 L760.33 142.9 L762.07 141.27 L763.82 139.65 L765.59 138.02 L767.36 136.39 L769.14 134.76 L770.93 133.14 L772.73 131.51 L774.54 129.88 L776.36 128.25 L778.2 126.63 L780.04 125 L781.89 123.37 L783.74 121.74 L785.61 120.12 L787.49 118.49 L789.37 116.86 L791.27 115.23 L793.17 113.61 L795.08 111.98 L797 110.35 L798.93 108.72 L800.86 107.09 L802.8 105.47 L804.75 103.84 L806.71 102.21 L808.68 100.58 L810.65 98.96 L812.63 97.33 L814.61 95.7 L816.6 94.07 L818.6 92.45 L820.61 90.82 L822.62 89.19 L824.64 87.56 L826.66 85.94 L828.69 84.31 L830.72 82.68 L832.76 81.05 L834.81 79.43 L836.86 77.8 L838.92 76.17 L840.98 74.54 L843.04 72.92 L845.11 71.29 L847.18 69.66 L849.26 68.03 L851.34 66.41 L853.43 64.78 L855.52 63.15 L857.61 61.52 L859.71 59.9 L861.81 58.27 L863.91 56.64 L866.02 55.01 L868.12 53.39 L870.23 51.76 L872.35 50.13 L874.46 48.5 L876.58 46.88 L878.7 45.25 L880.82 43.62 L882.95 41.99 L885.07 40.37 L887.2 38.74 L889.32 37.11 L891.45 35.48 L893.58 33.86 L895.71 32.23 L897.84 30.6 L899.97 28.97 L902.1 27.35"/>
<path d="M902.1 613.25 L899.54 611.63 L896.99 610 L894.43 608.37 L891.88 606.74 L889.32 605.12 L886.77 603.49 L884.22 601.86 L881.66 600.23 L879.12 598.61 L876.57 596.98 L874.02 595.35 L871.48 593.72 L868.94 592.1 L866.4 590.47 L863.86 588.84 L861.33 587.21 L858.8 585.59 L856.27 583.96 L853.75 582.33 L851.23 580.7 L848.71 579.08 L846.2 577.45 L843.69 575.82 L841.19 574.19 L838.69 572.57 L836.2 570.94 L833.71 569.31 L831.23 567.68 L828.75 566.06 L826.28 564.43 L823.81 562.8 L821.35 561.17 L818.9 559.55 L816.45 557.92 L814.01 556.29 L811.57 554.66 L809.14 553.04 L806.72 551.41 L804.31 549.78 L801.9 548.15 L799.51 546.53 L797.11 544.9 L794.73 543.27 L792.36 541.64 L789.99 540.02 L787.63 538.39 L785.29 536.76 L782.95 535.13 L780.61 533.51 L778.29 531.88 L775.98 530.25 L773.68 528.62 L771.38 526.99 L769.1 525.37 L766.83 523.74 L764.57 522.11 L762.31 520.48 L760.07 518.86 L757.84 517.23 L755.62 515.6 L753.41 513.97 L751.22 512.35 L749.03 510.72 L746.86 509.09 L744.7 507.46 L742.55 505.84 L740.41 504.21 L738.28 502.58 L736.17 500.95 L734.07 499.33 L731.98 497.7 L729.91 496.07 L727.84 494.44 L725.8 492.82 L723.76 491.19 L721.74 489.56 L719.73 487.93 L717.74 486.31 L715.76 484.68 L713.79 483.05 L711.84 481.42 L709.91 479.8 L707.98 478.17 L706.08 476.54 L704.18 474.91 L702.31 473.29 L700.44 471.66 L698.6 470.03 L696.77 468.4 L694.95 466.78 L693.15 465.15 L691.37 463.52 L689.6 461.89 L687.85 460.27 L686.11 458.64 L684.39 457.01 L682.69 455.38 L681.01 453.76 L679.34 452.13 L677.68 450.5 L676.05 448.87 L674.43 447.25 L672.83 445.62 L671.25 443.99 L669.68 442.36 L668.14 440.74 L666.61 439.11 L665.1 437.48 L663.6 435.85 L662.13 434.23 L660.67 432.6 L659.23 430.97 L657.81 429.34 L656.41 427.72 L655.03 426.09 L653.66 424.46 L652.32 422.83 L650.99 421.21 L649.68 419.58 L648.39 417.95 L647.13 416.32 L645.88 414.7 L644.65 413.07 L643.44 411.44 L642.25 409.81 L641.08 408.19 L639.93 406.56 L638.8 404.93 L637.68 403.3 L636.59 401.68 L635.52 400.05 L634.47 398.42 L633.44 396.79 L632.43 395.17 L631.45 393.54 L630.48 391.91 L629.53 390.28 L628.6 388.66 L627.7 387.03 L626.81 385.4 L625.95 383.77 L625.11 382.15 L624.29 380.52 L623.48 378.89 L622.71 377.26 L621.95 375.64 L621.21 374.01 L620.5 372.38 L619.8 370.75 L619.13 369.13 L618.48 367.5 L617.85 365.87 L617.24 364.24 L616.65 362.62 L616.09 360.99 L615.55 359.36 L615.03 357.73 L614.53 356.11 L614.05 354.48 L613.6 352.85 L613.16 351.22 L612.75 349.6 L612.36 347.97 L612 346.34 L611.65 344.71 L611.33 343.09 L611.03 341.46 L610.75 339.83 L610.5 338.2 L610.26 336.58 L610.05 334.95 L609.86 333.32 L609.69 331.69 L609.55 330.07 L609.43 328.44 L609.32 326.81 L609.25 325.18 L609.19 323.56 L609.16 321.93 L609.15 320.3 L609.16 318.67 L609.19 317.04 L609.25 315.42 L609.32 313.79 L609.43 312.16 L609.55 310.53 L609.69 308.91 L609.86 307.28 L610.05 305.65 L610.26 304.02 L610.5 302.4 L610.75 300.77 L611.03 299.14 L611.33 297.51 L611.65 295.89 L612 294.26 L612.36 292.63 L612.75 291 L613.16 289.38 L613.6 287.75 L614.05 286.12 L614.53 284.49 L615.03 282.87 L615.55 281.24 L616.09 279.61 L616.65 277.98 L617.24 276.36 L617.85 274.73 L618.48 273.1 L619.13 271.47 L619.8 269.85 L620.5 268.22 L621.21 266.59 L621.95 264.96 L622.71 263.34 L623.48 261.71 L624.29 260.08 L625.11 258.45 L625.95 256.83 L626.81 255.2 L627.7 253.57 L628.6 251.94 L629.53 250.32 L630.48 248.69 L631.45 247.06 L632.43 245.43 L633.44 243.81 L634.47 242.18 L635.52 240.55 L636.59 238.92 L637.68 237.3 L638.8 235.67 L639.93 234.04 L641.08 232.41 L642.25 230.79 L643.44 229.16 L644.65 227.53 L645.88 225.9 L647.13 224.28 L648.39 222.65 L649.68 221.02 L650.99 219.39 L652.32 217.77 L653.66 216.14 L655.03 214.51 L656.41 212.88 L657.81 211.26 L659.23 209.63 L660.67 208 L662.13 206.37 L663.6 204.75 L665.1 203.12 L666.61 201.49 L668.14 199.86 L669.68 198.24 L671.25 196.61 L672.83 194.98 L674.43 193.35 L676.05 191.73 L677.68 190.1 L679.34 188.47 L681.01 186.84 L682.69 185.22 L684.39 183.59 L686.11 181.96 L687.85 180.33 L689.6 178.71 L691.37 177.08 L693.15 175.45 L694.95 173.82 L696.77 172.2 L698.6 170.57 L700.44 168.94 L702.31 167.31 L704.18 165.69 L706.08 164.06 L707.98 162.43 L709.91 160.8 L711.84 159.18 L713.79 157.55 L715.76 155.92 L717.74 154.29 L719.73 152.67 L721.74 151.04 L723.76 149.41 L725.8 147.78 L727.84 146.16 L729.91 144.53 L731.98 142.9 L734.07 141.27 L736.17 139.65 L738.28 138.02 L740.41 136.39 L742.55 134.76 L744.7 133.14 L746.86 131.51 L749.03 129.88 L751.22 128.25 L753.41 126.63 L755.62 125 L757.84 123.37 L760.07 121.74 L762.31 120.12 L764.57 118.49 L766.83 116.86 L769.1 115.23 L771.38 113.61 L773.68 111.98 L775.98 110.35 L778.29 108.72 L780.61 107.09 L782.95 105.47 L785.29 103.84 L787.63 102.21 L789.99 100.58 L792.36 98.96 L794.73 97.33 L797.11 95.7 L799.51 94.07 L801.9 92.45 L804.31 90.82 L806.72 89.19 L809.14 87.56 L811.57 85.94 L814.01 84.31 L816.45 82.68 L818.9 81.05 L821.35 79.43 L823.81 77.8 L826.28 76.17 L828.75 74.54 L831.23 72.92 L833.71 71.29 L836.2 69.66 L838.69 68.03 L841.19 66.41 L843.69 64.78 L846.2 63.15 L848.71 61.52 L851.23 59.9 L853.75 58.27 L856.27 56.64 L858.8 55.01 L861.33 53.39 L863.86 51.76 L866.4 50.13 L868.94 48.5 L871.48 46.88 L874.02 45.25 L876.57 43.62 L879.12 41.99 L881.66 40.37 L884.22 38.74 L886.77 37.11 L889.32 35.48 L891.88 33.86 L894.43 32.23 L896.99 30.6 L899.54 28.97 L902.1 27.35"/>
<path d="M902.1 613.25 L899.12 611.63 L896.14 610 L893.15 608.37 L890.17 606.74 L887.19 605.12 L884.21 603.49 L881.23 601.86 L878.26 600.23 L875.28 598.61 L872.31 596.98 L869.34 595.35 L866.37 593.72 L863.41 592.1 L860.45 590.47 L857.49 588.84 L854.53 587.21 L851.58 585.59 L848.63 583.96 L845.69 582.33 L842.75 580.7 L839.82 579.08 L836.89 577.45 L833.96 575.82 L831.04 574.19 L828.13 572.57 L825.22 570.94 L822.31 569.31 L819.42 567.68 L816.53 566.06 L813.64 564.43 L810.76 562.8 L807.89 561.17 L805.03 559.55 L802.17 557.92 L799.33 556.29 L796.48 554.66 L793.65 553.04 L790.83 551.41 L788.01 549.78 L785.2 548.15 L782.41 546.53 L779.62 544.9 L776.84 543.27 L774.07 541.64 L771.31 540.02 L768.56 538.39 L765.82 536.76 L763.09 535.13 L760.37 533.51 L757.66 531.88 L754.96 530.25 L752.27 528.62 L749.6 526.99 L746.94 525.37 L744.28 523.74 L741.64 522.11 L739.02 520.48 L736.4 518.86 L733.8 517.23 L731.21 515.6 L728.63 513.97 L726.07 512.35 L723.52 510.72 L720.98 509.09 L718.46 507.46 L715.95 505.84 L713.46 504.21 L710.98 502.58 L708.51 500.95 L706.06 499.33 L703.63 497.7 L701.21 496.07 L698.8 494.44 L696.41 492.82 L694.04 491.19 L691.68 489.56 L689.34 487.93 L687.01 486.31 L684.7 484.68 L682.41 483.05 L680.13 481.42 L677.87 479.8 L675.63 478.17 L673.41 476.54 L671.2 474.91 L669.01 473.29 L666.83 471.66 L664.68 470.03 L662.54 468.4 L660.43 466.78 L658.33 465.15 L656.24 463.52 L654.18 461.89 L652.14 460.27 L650.11 458.64 L648.11 457.01 L646.12 455.38 L644.16 453.76 L642.21 452.13 L640.28 450.5 L638.37 448.87 L636.49 447.25 L634.62 445.62 L632.77 443.99 L630.95 442.36 L629.14 440.74 L627.36 439.11 L625.59 437.48 L623.85 435.85 L622.13 434.23 L620.43 432.6 L618.75 430.97 L617.1 429.34 L615.46 427.72 L613.85 426.09 L612.25 424.46 L610.69 422.83 L609.14 421.21 L607.61 419.58 L606.11 417.95 L604.63 416.32 L603.17 414.7 L601.74 413.07 L600.33 411.44 L598.94 409.81 L597.57 408.19 L596.23 406.56 L594.91 404.93 L593.62 403.3 L592.34 401.68 L591.09 400.05 L589.87 398.42 L588.67 396.79 L587.49 395.17 L586.34 393.54 L585.21 391.91 L584.1 390.28 L583.02 388.66 L581.97 387.03 L580.93 385.4 L579.92 383.77 L578.94 382.15 L577.98 380.52 L577.05 378.89 L576.14 377.26 L575.26 375.64 L574.4 374.01 L573.56 372.38 L572.75 370.75 L571.97 369.13 L571.21 367.5 L570.47 365.87 L569.76 364.24 L569.08 362.62 L568.42 360.99 L567.79 359.36 L567.18 357.73 L566.6 356.11 L566.04 354.48 L565.51 352.85 L565.01 351.22 L564.53 349.6 L564.08 347.97 L563.65 346.34 L563.24 344.71 L562.87 343.09 L562.52 341.46 L562.19 339.83 L561.89 338.2 L561.62 336.58 L561.37 334.95 L561.15 333.32 L560.96 331.69 L560.79 330.07 L560.65 328.44 L560.53 326.81 L560.44 325.18 L560.37 323.56 L560.33 321.93 L560.32 320.3 L560.33 318.67 L560.37 317.04 L560.44 315.42 L560.53 313.79 L560.65 312.16 L560.79 310.53 L560.96 308.91 L561.15 307.28 L561.37 305.65 L561.62 304.02 L561.89 302.4 L562.19 300.77 L562.52 299.14 L562.87 297.51 L563.24 295.89 L563.65 294.26 L564.08 292.63 L564.53 291 L565.01 289.38 L565.51 287.75 L566.04 286.12 L566.6 284.49 L567.18 282.87 L567.79 281.24 L568.42 279.61 L569.08 277.98 L569.76 276.36 L570.47 274.73 L571.21 273.1 L571.97 271.47 L572.75 269.85 L573.56 268.22 L574.4 266.59 L575.26 264.96 L576.14 263.34 L577.05 261.71 L577.98 260.08 L578.94 258.45 L579.92 256.83 L580.93 255.2 L581.97 253.57 L583.02 251.94 L584.1 250.32 L585.21 248.69 L586.34 247.06 L587.49 245.43 L588.67 243.81 L589.87 242.18 L591.09 240.55 L592.34 238.92 L593.62 237.3 L594.91 235.67 L596.23 234.04 L597.57 232.41 L598.94 230.79 L600.33 229.16 L601.74 227.53 L603.17 225.9 L604.63 224.28 L606.11 222.65 L607.61 221.02 L609.14 219.39 L610.69 217.77 L612.25 216.14 L613.85 214.51 L615.46 212.88 L617.1 211.26 L618.75 209.63 L620.43 208 L622.13 206.37 L623.85 204.75 L625.59 203.12 L627.36 201.49 L629.14 199.86 L630.95 198.24 L632.77 196.61 L634.62 194.98 L636.49 193.35 L638.37 191.73 L640.28 190.1 L642.21 188.47 L644.16 186.84 L646.12 185.22 L648.11 183.59 L650.11 181.96 L652.14 180.33 L654.18 178.71 L656.24 177.08 L658.33 175.45 L660.43 173.82 L662.54 172.2 L664.68 170.57 L666.83 168.94 L669.01 167.31 L671.2 165.69 L673.41 164.06 L675.63 162.43 L677.87 160.8 L680.13 159.18 L682.41 157.55 L684.7 155.92 L687.01 154.29 L689.34 152.67 L691.68 151.04 L694.04 149.41 L696.41 147.78 L698.8 146.16 L701.21 144.53 L703.63 142.9 L706.06 141.27 L708.51 139.65 L710.98 138.02 L713.46 136.39 L715.95 134.76 L718.46 133.14 L720.98 131.51 L723.52 129.88 L726.07 128.25 L728.63 126.63 L731.21 125 L733.8 123.37 L736.4 121.74 L739.02 120.12 L741.64 118.49 L744.28 116.86 L746.94 115.23 L749.6 113.61 L752.27 111.98 L754.96 110.35 L757.66 108.72 L760.37 107.09 L763.09 105.47 L765.82 103.84 L768.56 102.21 L771.31 100.58 L774.07 98.96 L776.84 97.33 L779.62 95.7 L782.41 94.07 L785.2 92.45 L788.01 90.82 L790.83 89.19 L793.65 87.56 L796.48 85.94 L799.33 84.31 L802.17 82.68 L805.03 81.05 L807.89 79.43 L810.76 77.8 L813.64 76.17 L816.53 74.54 L819.42 72.92 L822.31 71.29 L825.22 69.66 L828.13 68.03 L831.04 66.41 L833.96 64.78 L836.89 63.15 L839.82 61.52 L842.75 59.9 L845.69 58.27 L848.63 56.64 L851.58 55.01 L854.53 53.39 L857.49 51.76 L860.45 50.13 L863.41 48.5 L866.37 46.88 L869.34 45.25 L872.31 43.62 L875.28 41.99 L878.26 40.37 L881.23 38.74 L884.21 37.11 L887.19 35.48 L890.17 33.86 L893.15 32.23 L896.14 30.6 L899.12 28.97 L902.1 27.35"/>
<path d="M902.1 613.25 L898.69 611.63 L895.28 610 L891.88 608.37 L888.47 606.74 L885.06 605.12 L881.66 603.49 L878.25 601.86 L874.85 600.23 L871.45 598.61 L868.06 596.98 L864.66 595.35 L861.27 593.72 L857.88 592.1 L854.5 590.47 L851.12 588.84 L847.74 587.21 L844.36 585.59 L841 583.96 L837.63 582.33 L834.27 580.7 L830.92 579.08 L827.57 577.45 L824.23 575.82 L820.89 574.19 L817.56 572.57 L814.23 570.94 L810.92 569.31 L807.6 567.68 L804.3 566.06 L801 564.43 L797.72 562.8 L794.43 561.17 L791.16 559.55 L787.9 557.92 L784.64 556.29 L781.4 554.66 L778.16 553.04 L774.93 551.41 L771.71 549.78 L768.51 548.15 L765.31 546.53 L762.12 544.9 L758.94 543.27 L755.78 541.64 L752.62 540.02 L749.48 538.39 L746.35 536.76 L743.23 535.13 L740.12 533.51 L737.02 531.88 L733.94 530.25 L730.87 528.62 L727.81 526.99 L724.77 525.37 L721.74 523.74 L718.72 522.11 L715.72 520.48 L712.73 518.86 L709.76 517.23 L706.8 515.6 L703.85 513.97 L700.92 512.35 L698.01 510.72 L695.11 509.09 L692.23 507.46 L689.36 505.84 L686.51 504.21 L683.68 502.58 L680.86 500.95 L678.06 499.33 L675.27 497.7 L672.51 496.07 L669.76 494.44 L667.03 492.82 L664.31 491.19 L661.62 489.56 L658.94 487.93 L656.28 486.31 L653.64 484.68 L651.02 483.05 L648.42 481.42 L645.84 479.8 L643.28 478.17 L640.73 476.54 L638.21 474.91 L635.71 473.29 L633.23 471.66 L630.76 470.03 L628.32 468.4 L625.9 466.78 L623.5 465.15 L621.12 463.52 L618.77 461.89 L616.43 460.27 L614.12 458.64 L611.82 457.01 L609.55 455.38 L607.31 453.76 L605.08 452.13 L602.88 450.5 L600.7 448.87 L598.54 447.25 L596.41 445.62 L594.3 443.99 L592.21 442.36 L590.15 440.74 L588.11 439.11 L586.09 437.48 L584.1 435.85 L582.14 434.23 L580.19 432.6 L578.27 430.97 L576.38 429.34 L574.51 427.72 L572.67 426.09 L570.85 424.46 L569.05 422.83 L567.29 421.21 L565.54 419.58 L563.83 417.95 L562.13 416.32 L560.47 414.7 L558.83 413.07 L557.22 411.44 L555.63 409.81 L554.07 408.19 L552.53 406.56 L551.03 404.93 L549.55 403.3 L548.09 401.68 L546.66 400.05 L545.26 398.42 L543.89 396.79 L542.55 395.17 L541.23 393.54 L539.94 391.91 L538.67 390.28 L537.44 388.66 L536.23 387.03 L535.05 385.4 L533.9 383.77 L532.78 382.15 L531.68 380.52 L530.61 378.89 L529.57 377.26 L528.56 375.64 L527.58 374.01 L526.63 372.38 L525.7 370.75 L524.8 369.13 L523.94 367.5 L523.1 365.87 L522.29 364.24 L521.51 362.62 L520.75 360.99 L520.03 359.36 L519.34 357.73 L518.67 356.11 L518.04 354.48 L517.43 352.85 L516.85 351.22 L516.3 349.6 L515.79 347.97 L515.3 346.34 L514.84 344.71 L514.41 343.09 L514.01 341.46 L513.64 339.83 L513.29 338.2 L512.98 336.58 L512.7 334.95 L512.45 333.32 L512.22 331.69 L512.03 330.07 L511.87 328.44 L511.73 326.81 L511.63 325.18 L511.55 323.56 L511.51 321.93 L511.5 320.3 L511.51 318.67 L511.55 317.04 L511.63 315.42 L511.73 313.79 L511.87 312.16 L512.03 310.53 L512.22 308.91 L512.45 307.28 L512.7 305.65 L512.98 304.02 L513.29 302.4 L513.64 300.77 L514.01 299.14 L514.41 297.51 L514.84 295.89 L515.3 294.26 L515.79 292.63 L516.3 291 L516.85 289.38 L517.43 287.75 L518.04 286.12 L518.67 284.49 L519.34 282.87 L520.03 281.24 L520.75 279.61 L521.51 277.98 L522.29 276.36 L523.1 274.73 L523.94 273.1 L524.8 271.47 L525.7 269.85 L526.63 268.22 L527.58 266.59 L528.56 264.96 L529.57 263.34 L530.61 261.71 L531.68 260.08 L532.78 258.45 L533.9 256.83 L535.05 255.2 L536.23 253.57 L537.44 251.94 L538.67 250.32 L539.94 248.69 L541.23 247.06 L542.55 245.43 L543.89 243.81 L545.26 242.18 L546.66 240.55 L548.09 238.92 L549.55 237.3 L551.03 235.67 L552.53 234.04 L554.07 232.41 L555.63 230.79 L557.22 229.16 L558.83 227.53 L560.47 225.9 L562.13 224.28 L563.83 222.65 L565.54 221.02 L567.29 219.39 L569.05 217.77 L570.85 216.14 L572.67 214.51 L574.51 212.88 L576.38 211.26 L578.27 209.63 L580.19 208 L582.14 206.37 L584.1 204.75 L586.09 203.12 L588.11 201.49 L590.15 199.86 L592.21 198.24 L594.3 196.61 L596.41 194.98 L598.54 193.35 L600.7 191.73 L602.88 190.1 L605.08 188.47 L607.31 186.84 L609.55 185.22 L611.82 183.59 L614.12 181.96 L616.43 180.33 L618.77 178.71 L621.12 177.08 L623.5 175.45 L625.9 173.82 L628.32 172.2 L630.76 170.57 L633.23 168.94 L635.71 167.31 L638.21 165.69 L640.73 164.06 L643.28 162.43 L645.84 160.8 L648.42 159.18 L651.02 157.55 L653.64 155.92 L656.28 154.29 L658.94 152.67 L661.62 151.04 L664.31 149.41 L667.03 147.78 L669.76 146.16 L672.51 144.53 L675.27 142.9 L678.06 141.27 L680.86 139.65 L683.68 138.02 L686.51 136.39 L689.36 134.76 L692.23 133.14 L695.11 131.51 L698.01 129.88 L700.92 128.25 L703.85 126.63 L706.8 125 L709.76 123.37 L712.73 121.74 L715.72 120.12 L718.72 118.49 L721.74 116.86 L724.77 115.23 L727.81 113.61 L730.87 111.98 L733.94 110.35 L737.02 108.72 L740.12 107.09 L743.23 105.47 L746.35 103.84 L749.48 102.21 L752.62 100.58 L755.78 98.96 L758.94 97.33 L762.12 95.7 L765.31 94.07 L768.51 92.45 L771.71 90.82 L774.93 89.19 L778.16 87.56 L781.4 85.94 L784.64 84.31 L787.9 82.68 L791.16 81.05 L794.43 79.43 L797.72 77.8 L801 76.17 L804.3 74.54 L807.6 72.92 L810.92 71.29 L814.23 69.66 L817.56 68.03 L820.89 66.41 L824.23 64.78 L827.57 63.15 L830.92 61.52 L834.27 59.9 L837.63 58.27 L841 56.64 L844.36 55.01 L847.74 53.39 L851.12 51.76 L854.5 50.13 L857.88 48.5 L861.27 46.88 L864.66 45.25 L868.06 43.62 L871.45 41.99 L874.85 40.37 L878.25 38.74 L881.66 37.11 L885.06 35.48 L888.47 33.86 L891.88 32.23 L895.28 30.6 L898.69 28.97 L902.1 27.35"/>
<path d="M902.1 613.25 L898.27 611.63 L894.43 610 L890.6 608.37 L886.76 606.74 L882.93 605.12 L879.1 603.49 L875.27 601.86 L871.45 600.23 L867.62 598.61 L863.8 596.98 L859.98 595.35 L856.17 593.72 L852.36 592.1 L848.55 590.47 L844.74 588.84 L840.94 587.21 L837.15 585.59 L833.36 583.96 L829.57 582.33 L825.79 580.7 L822.02 579.08 L818.25 577.45 L814.49 575.82 L810.74 574.19 L806.99 572.57 L803.25 570.94 L799.52 569.31 L795.79 567.68 L792.08 566.06 L788.37 564.43 L784.67 562.8 L780.98 561.17 L777.3 559.55 L773.62 557.92 L769.96 556.29 L766.31 554.66 L762.67 553.04 L759.04 551.41 L755.42 549.78 L751.81 548.15 L748.21 546.53 L744.62 544.9 L741.05 543.27 L737.49 541.64 L733.94 540.02 L730.4 538.39 L726.88 536.76 L723.37 535.13 L719.87 533.51 L716.39 531.88 L712.92 530.25 L709.47 528.62 L706.03 526.99 L702.6 525.37 L699.19 523.74 L695.8 522.11 L692.42 520.48 L689.06 518.86 L685.71 517.23 L682.38 515.6 L679.07 513.97 L675.78 512.35 L672.5 510.72 L669.24 509.09 L665.99 507.46 L662.77 505.84 L659.56 504.21 L656.37 502.58 L653.2 500.95 L650.05 499.33 L646.92 497.7 L643.81 496.07 L640.72 494.44 L637.64 492.82 L634.59 491.19 L631.56 489.56 L628.55 487.93 L625.56 486.31 L622.59 484.68 L619.64 483.05 L616.71 481.42 L613.81 479.8 L610.92 478.17 L608.06 476.54 L605.23 474.91 L602.41 473.29 L599.62 471.66 L596.85 470.03 L594.1 468.4 L591.38 466.78 L588.68 465.15 L586 463.52 L583.35 461.89 L580.72 460.27 L578.12 458.64 L575.54 457.01 L572.99 455.38 L570.46 453.76 L567.95 452.13 L565.48 450.5 L563.02 448.87 L560.6 447.25 L558.2 445.62 L555.82 443.99 L553.48 442.36 L551.16 440.74 L548.86 439.11 L546.59 437.48 L544.35 435.85 L542.14 434.23 L539.95 432.6 L537.8 430.97 L535.67 429.34 L533.56 427.72 L531.49 426.09 L529.44 424.46 L527.42 422.83 L525.43 421.21 L523.47 419.58 L521.54 417.95 L519.64 416.32 L517.77 414.7 L515.92 413.07 L514.11 411.44 L512.32 409.81 L510.56 408.19 L508.84 406.56 L507.14 404.93 L505.48 403.3 L503.84 401.68 L502.24 400.05 L500.66 398.42 L499.12 396.79 L497.6 395.17 L496.12 393.54 L494.67 391.91 L493.25 390.28 L491.86 388.66 L490.5 387.03 L489.17 385.4 L487.87 383.77 L486.61 382.15 L485.38 380.52 L484.18 378.89 L483.01 377.26 L481.87 375.64 L480.77 374.01 L479.69 372.38 L478.65 370.75 L477.64 369.13 L476.67 367.5 L475.72 365.87 L474.81 364.24 L473.93 362.62 L473.09 360.99 L472.27 359.36 L471.49 357.73 L470.74 356.11 L470.03 354.48 L469.35 352.85 L468.7 351.22 L468.08 349.6 L467.5 347.97 L466.95 346.34 L466.43 344.71 L465.95 343.09 L465.49 341.46 L465.08 339.83 L464.69 338.2 L464.34 336.58 L464.02 334.95 L463.74 333.32 L463.49 331.69 L463.27 330.07 L463.09 328.44 L462.94 326.81 L462.82 325.18 L462.74 323.56 L462.69 321.93 L462.67 320.3 L462.69 318.67 L462.74 317.04 L462.82 315.42 L462.94 313.79 L463.09 312.16 L463.27 310.53 L463.49 308.91 L463.74 307.28 L464.02 305.65 L464.34 304.02 L464.69 302.4 L465.08 300.77 L465.49 299.14 L465.95 297.51 L466.43 295.89 L466.95 294.26 L467.5 292.63 L468.08 291 L468.7 289.38 L469.35 287.75 L470.03 286.12 L470.74 284.49 L471.49 282.87 L472.27 281.24 L473.09 279.61 L473.93 277.98 L474.81 276.36 L475.72 274.73 L476.67 273.1 L477.64 271.47 L478.65 269.85 L479.69 268.22 L480.77 266.59 L481.87 264.96 L483.01 263.34 L484.18 261.71 L485.38 260.08 L486.61 258.45 L487.87 256.83 L489.17 255.2 L490.5 253.57 L491.86 251.94 L493.25 250.32 L494.67 248.69 L496.12 247.06 L497.6 245.43 L499.12 243.81 L500.66 242.18 L502.24 240.55 L503.84 238.92 L505.48 237.3 L507.14 235.67 L508.84 234.04 L510.56 232.41 L512.32 230.79 L514.11 229.16 L515.92 227.53 L517.77 225.9 L519.64 224.28 L521.54 222.65 L523.47 221.02 L525.43 219.39 L527.42 217.77 L529.44 216.14 L531.49 214.51 L533.56 212.88 L535.67 211.26 L537.8 209.63 L539.95 208 L542.14 206.37 L544.35 204.75 L546.59 203.12 L548.86 201.49 L551.16 199.86 L553.48 198.24 L555.82 196.61 L558.2 194.98 L560.6 193.35 L563.02 191.73 L565.48 190.1 L567.95 188.47 L570.46 186.84 L572.99 185.22 L575.54 183.59 L578.12 181.96 L580.72 180.33 L583.35 178.71 L586 177.08 L588.68 175.45 L591.38 173.82 L594.1 172.2 L596.85 170.57 L599.62 168.94 L602.41 167.31 L605.23 165.69 L608.06 164.06 L610.92 162.43 L613.81 160.8 L616.71 159.18 L619.64 157.55 L622.59 155.92 L625.56 154.29 L628.55 152.67 L631.56 151.04 L634.59 149.41 L637.64 147.78 L640.72 146.16 L643.81 144.53 L646.92 142.9 L650.05 141.27 L653.2 139.65 L656.37 138.02 L659.56 136.39 L662.77 134.76 L665.99 133.14 L669.24 131.51 L672.5 129.88 L675.78 128.25 L679.07 126.63 L682.38 125 L685.71 123.37 L689.06 121.74 L692.42 120.12 L695.8 118.49 L699.19 116.86 L702.6 115.23 L706.03 113.61 L709.47 111.98 L712.92 110.35 L716.39 108.72 L719.87 107.09 L723.37 105.47 L726.88 103.84 L730.4 102.21 L733.94 100.58 L737.49 98.96 L741.05 97.33 L744.62 95.7 L748.21 94.07 L751.81 92.45 L755.42 90.82 L759.04 89.19 L762.67 87.56 L766.31 85.94 L769.96 84.31 L773.62 82.68 L777.3 81.05 L780.98 79.43 L784.67 77.8 L788.37 76.17 L792.08 74.54 L795.79 72.92 L799.52 71.29 L803.25 69.66 L806.99 68.03 L810.74 66.41 L814.49 64.78 L818.25 63.15 L822.02 61.52 L825.79 59.9 L829.57 58.27 L833.36 56.64 L837.15 55.01 L840.94 53.39 L844.74 51.76 L848.55 50.13 L852.36 48.5 L856.17 46.88 L859.98 45.25 L863.8 43.62 L867.62 41.99 L871.45 40.37 L875.27 38.74 L879.1 37.11 L882.93 35.48 L886.76 33.86 L890.6 32.23 L894.43 30.6 L898.27 28.97 L902.1 27.35"/>
<path d="M902.1 613.25 L897.84 611.63 L893.58 610 L889.32 608.37 L885.06 606.74 L880.8 605.12 L876.55 603.49 L872.29 601.86 L868.04 600.23 L863.79 598.61 L859.55 596.98 L855.3 595.35 L851.06 593.72 L846.83 592.1 L842.6 590.47 L838.37 588.84 L834.15 587.21 L829.93 585.59 L825.72 583.96 L821.51 582.33 L817.32 580.7 L813.12 579.08 L808.94 577.45 L804.76 575.82 L800.59 574.19 L796.42 572.57 L792.27 570.94 L788.12 569.31 L783.98 567.68 L779.85 566.06 L775.73 564.43 L771.62 562.8 L767.52 561.17 L763.43 559.55 L759.35 557.92 L755.28 556.29 L751.22 554.66 L747.17 553.04 L743.14 551.41 L739.12 549.78 L735.11 548.15 L731.11 546.53 L727.12 544.9 L723.15 543.27 L719.2 541.64 L715.25 540.02 L711.32 538.39 L707.41 536.76 L703.51 535.13 L699.62 533.51 L695.75 531.88 L691.9 530.25 L688.06 528.62 L684.24 526.99 L680.44 525.37 L676.65 523.74 L672.88 522.11 L669.12 520.48 L665.39 518.86 L661.67 517.23 L657.97 515.6 L654.29 513.97 L650.63 512.35 L646.99 510.72 L643.36 509.09 L639.76 507.46 L636.18 505.84 L632.61 504.21 L629.07 502.58 L625.55 500.95 L622.05 499.33 L618.57 497.7 L615.11 496.07 L611.67 494.44 L608.26 492.82 L604.87 491.19 L601.5 489.56 L598.15 487.93 L594.83 486.31 L591.53 484.68 L588.26 483.05 L585 481.42 L581.78 479.8 L578.57 478.17 L575.39 476.54 L572.24 474.91 L569.11 473.29 L566.01 471.66 L562.93 470.03 L559.88 468.4 L556.85 466.78 L553.85 465.15 L550.88 463.52 L547.93 461.89 L545.01 460.27 L542.12 458.64 L539.26 457.01 L536.42 455.38 L533.61 453.76 L530.83 452.13 L528.07 450.5 L525.35 448.87 L522.65 447.25 L519.99 445.62 L517.35 443.99 L514.74 442.36 L512.16 440.74 L509.61 439.11 L507.09 437.48 L504.6 435.85 L502.14 434.23 L499.72 432.6 L497.32 430.97 L494.95 429.34 L492.61 427.72 L490.31 426.09 L488.04 424.46 L485.79 422.83 L483.58 421.21 L481.4 419.58 L479.26 417.95 L477.14 416.32 L475.06 414.7 L473.01 413.07 L471 411.44 L469.01 409.81 L467.06 408.19 L465.14 406.56 L463.26 404.93 L461.41 403.3 L459.59 401.68 L457.81 400.05 L456.06 398.42 L454.34 396.79 L452.66 395.17 L451.01 393.54 L449.4 391.91 L447.82 390.28 L446.27 388.66 L444.76 387.03 L443.29 385.4 L441.85 383.77 L440.45 382.15 L439.08 380.52 L437.74 378.89 L436.44 377.26 L435.18 375.64 L433.95 374.01 L432.76 372.38 L431.6 370.75 L430.48 369.13 L429.4 367.5 L428.35 365.87 L427.33 364.24 L426.36 362.62 L425.42 360.99 L424.51 359.36 L423.65 357.73 L422.81 356.11 L422.02 354.48 L421.26 352.85 L420.54 351.22 L419.86 349.6 L419.21 347.97 L418.6 346.34 L418.02 344.71 L417.48 343.09 L416.98 341.46 L416.52 339.83 L416.09 338.2 L415.7 336.58 L415.35 334.95 L415.03 333.32 L414.75 331.69 L414.51 330.07 L414.31 328.44 L414.14 326.81 L414.01 325.18 L413.92 323.56 L413.86 321.93 L413.84 320.3 L413.86 318.67 L413.92 317.04 L414.01 315.42 L414.14 313.79 L414.31 312.16 L414.51 310.53 L414.75 308.91 L415.03 307.28 L415.35 305.65 L415.7 304.02 L416.09 302.4 L416.52 300.77 L416.98 299.14 L417.48 297.51 L418.02 295.89 L418.6 294.26 L419.21 292.63 L419.86 291 L420.54 289.38 L421.26 287.75 L422.02 286.12 L422.81 284.49 L423.65 282.87 L424.51 281.24 L425.42 279.61 L426.36 277.98 L427.33 276.36 L428.35 274.73 L429.4 273.1 L430.48 271.47 L431.6 269.85 L432.76 268.22 L433.95 266.59 L435.18 264.96 L436.44 263.34 L437.74 261.71 L439.08 260.08 L440.45 258.45 L441.85 256.83 L443.29 255.2 L444.76 253.57 L446.27 251.94 L447.82 250.32 L449.4 248.69 L451.01 247.06 L452.66 245.43 L454.34 243.81 L456.06 242.18 L457.81 240.55 L459.59 238.92 L461.41 237.3 L463.26 235.67 L465.14 234.04 L467.06 232.41 L469.01 230.79 L471 229.16 L473.01 227.53 L475.06 225.9 L477.14 224.28 L479.26 222.65 L481.4 221.02 L483.58 219.39 L485.79 217.77 L488.04 216.14 L490.31 214.51 L492.61 212.88 L494.95 211.26 L497.32 209.63 L499.72 208 L502.14 206.37 L504.6 204.75 L507.09 203.12 L509.61 201.49 L512.16 199.86 L514.74 198.24 L517.35 196.61 L519.99 194.98 L522.65 193.35 L525.35 191.73 L528.07 190.1 L530.83 188.47 L533.61 186.84 L536.42 185.22 L539.26 183.59 L542.12 181.96 L545.01 180.33 L547.93 178.71 L550.88 177.08 L553.85 175.45 L556.85 173.82 L559.88 172.2 L562.93 170.57 L566.01 168.94 L569.11 167.31 L572.24 165.69 L575.39 164.06 L578.57 162.43 L581.78 160.8 L585 159.18 L588.26 157.55 L591.53 155.92 L594.83 154.29 L598.15 152.67 L601.5 151.04 L604.87 149.41 L608.26 147.78 L611.67 146.16 L615.11 144.53 L618.57 142.9 L622.05 141.27 L625.55 139.65 L629.07 138.02 L632.61 136.39 L636.18 134.76 L639.76 133.14 L643.36 131.51 L646.99 129.88 L650.63 128.25 L654.29 126.63 L657.97 125 L661.67 123.37 L665.39 121.74 L669.12 120.12 L672.88 118.49 L676.65 116.86 L680.44 115.23 L684.24 113.61 L688.06 111.98 L691.9 110.35 L695.75 108.72 L699.62 107.09 L703.51 105.47 L707.41 103.84 L711.32 102.21 L715.25 100.58 L719.2 98.96 L723.15 97.33 L727.12 95.7 L731.11 94.07 L735.11 92.45 L739.12 90.82 L743.14 89.19 L747.17 87.56 L751.22 85.94 L755.28 84.31 L759.35 82.68 L763.43 81.05 L767.52 79.43 L771.62 77.8 L775.73 76.17 L779.85 74.54 L783.98 72.92 L788.12 71.29 L792.27 69.66 L796.42 68.03 L800.59 66.41 L804.76 64.78 L808.94 63.15 L813.12 61.52 L817.32 59.9 L821.51 58.27 L825.72 56.64 L829.93 55.01 L834.15 53.39 L838.37 51.76 L842.6 50.13 L846.83 48.5 L851.06 46.88 L855.3 45.25 L859.55 43.62 L863.79 41.99 L868.04 40.37 L872.29 38.74 L876.55 37.11 L880.8 35.48 L885.06 33.86 L889.32 32.23 L893.58 30.6 L897.84 28.97 L902.1 27.35"/>
<path d="M902.1 613.25 L897.41 611.63 L892.73 610 L888.04 608.37 L883.36 606.74 L878.67 605.12 L873.99 603.49 L869.31 601.86 L864.64 600.23 L859.96 598.61 L855.29 596.98 L850.62 595.35 L845.96 593.72 L841.3 592.1 L836.65 590.47 L832 588.84 L827.35 587.21 L822.71 585.59 L818.08 583.96 L813.46 582.33 L808.84 580.7 L804.22 579.08 L799.62 577.45 L795.02 575.82 L790.43 574.19 L785.85 572.57 L781.28 570.94 L776.72 569.31 L772.17 567.68 L767.63 566.06 L763.09 564.43 L758.57 562.8 L754.06 561.17 L749.56 559.55 L745.07 557.92 L740.6 556.29 L736.13 554.66 L731.68 553.04 L727.24 551.41 L722.82 549.78 L718.41 548.15 L714.01 546.53 L709.63 544.9 L705.26 543.27 L700.91 541.64 L696.57 540.02 L692.25 538.39 L687.94 536.76 L683.65 535.13 L679.38 533.51 L675.12 531.88 L670.88 530.25 L666.66 528.62 L662.46 526.99 L658.27 525.37 L654.1 523.74 L649.96 522.11 L645.83 520.48 L641.72 518.86 L637.63 517.23 L633.56 515.6 L629.51 513.97 L625.48 512.35 L621.48 510.72 L617.49 509.09 L613.53 507.46 L609.58 505.84 L605.66 504.21 L601.77 502.58 L597.89 500.95 L594.04 499.33 L590.22 497.7 L586.41 496.07 L582.63 494.44 L578.88 492.82 L575.15 491.19 L571.44 489.56 L567.76 487.93 L564.1 486.31 L560.47 484.68 L556.87 483.05 L553.29 481.42 L549.74 479.8 L546.22 478.17 L542.72 476.54 L539.25 474.91 L535.81 473.29 L532.4 471.66 L529.01 470.03 L525.65 468.4 L522.33 466.78 L519.03 465.15 L515.76 463.52 L512.51 461.89 L509.3 460.27 L506.12 458.64 L502.97 457.01 L499.85 455.38 L496.76 453.76 L493.7 452.13 L490.67 450.5 L487.67 448.87 L484.71 447.25 L481.78 445.62 L478.87 443.99 L476 442.36 L473.17 440.74 L470.36 439.11 L467.59 437.48 L464.85 435.85 L462.15 434.23 L459.48 432.6 L456.84 430.97 L454.24 429.34 L451.67 427.72 L449.13 426.09 L446.63 424.46 L444.16 422.83 L441.73 421.21 L439.33 419.58 L436.97 417.95 L434.65 416.32 L432.36 414.7 L430.1 413.07 L427.89 411.44 L425.7 409.81 L423.56 408.19 L421.45 406.56 L419.37 404.93 L417.34 403.3 L415.34 401.68 L413.38 400.05 L411.45 398.42 L409.56 396.79 L407.71 395.17 L405.9 393.54 L404.13 391.91 L402.39 390.28 L400.69 388.66 L399.03 387.03 L397.41 385.4 L395.82 383.77 L394.28 382.15 L392.77 380.52 L391.31 378.89 L389.88 377.26 L388.49 375.64 L387.14 374.01 L385.82 372.38 L384.55 370.75 L383.32 369.13 L382.13 367.5 L380.97 365.87 L379.86 364.24 L378.78 362.62 L377.75 360.99 L376.76 359.36 L375.8 357.73 L374.89 356.11 L374.01 354.48 L373.18 352.85 L372.38 351.22 L371.63 349.6 L370.92 347.97 L370.25 346.34 L369.61 344.71 L369.02 343.09 L368.47 341.46 L367.96 339.83 L367.49 338.2 L367.06 336.58 L366.67 334.95 L366.33 333.32 L366.02 331.69 L365.75 330.07 L365.53 328.44 L365.35 326.81 L365.2 325.18 L365.1 323.56 L365.04 321.93 L365.02 320.3 L365.04 318.67 L365.1 317.04 L365.2 315.42 L365.35 313.79 L365.53 312.16 L365.75 310.53 L366.02 308.91 L366.33 307.28 L366.67 305.65 L367.06 304.02 L367.49 302.4 L367.96 300.77 L368.47 299.14 L369.02 297.51 L369.61 295.89 L370.25 294.26 L370.92 292.63 L371.63 291 L372.38 289.38 L373.18 287.75 L374.01 286.12 L374.89 284.49 L375.8 282.87 L376.76 281.24 L377.75 279.61 L378.78 277.98 L379.86 276.36 L380.97 274.73 L382.13 273.1 L383.32 271.47 L384.55 269.85 L385.82 268.22 L387.14 266.59 L388.49 264.96 L389.88 263.34 L391.31 261.71 L392.77 260.08 L394.28 258.45 L395.82 256.83 L397.41 255.2 L399.03 253.57 L400.69 251.94 L402.39 250.32 L404.13 248.69 L405.9 247.06 L407.71 245.43 L409.56 243.81 L411.45 242.18 L413.38 240.55 L415.34 238.92 L417.34 237.3 L419.37 235.67 L421.45 234.04 L423.56 232.41 L425.7 230.79 L427.89 229.16 L430.1 227.53 L432.36 225.9 L434.65 224.28 L436.97 222.65 L439.33 221.02 L441.73 219.39 L444.16 217.77 L446.63 216.14 L449.13 214.51 L451.67 212.88 L454.24 211.26 L456.84 209.63 L459.48 208 L462.15 206.37 L464.85 204.75 L467.59 203.12 L470.36 201.49 L473.17 199.86 L476 198.24 L478.87 196.61 L481.78 194.98 L484.71 193.35 L487.67 191.73 L490.67 190.1 L493.7 188.47 L496.76 186.84 L499.85 185.22 L502.97 183.59 L506.12 181.96 L509.3 180.33 L512.51 178.71 L515.76 177.08 L519.03 175.45 L522.33 173.82 L525.65 172.2 L529.01 170.57 L532.4 168.94 L535.81 167.31 L539.25 165.69 L542.72 164.06 L546.22 162.43 L549.74 160.8 L553.29 159.18 L556.87 157.55 L560.47 155.92 L564.1 154.29 L567.76 152.67 L571.44 151.04 L575.15 149.41 L578.88 147.78 L582.63 146.16 L586.41 144.53 L590.22 142.9 L594.04 141.27 L597.89 139.65 L601.77 138.02 L605.66 136.39 L609.58 134.76 L613.53 133.14 L617.49 131.51 L621.48 129.88 L625.48 128.25 L629.51 126.63 L633.56 125 L637.63 123.37 L641.72 121.74 L645.83 120.12 L649.96 118.49 L654.1 116.86 L658.27 115.23 L662.46 113.61 L666.66 111.98 L670.88 110.35 L675.12 108.72 L679.38 107.09 L683.65 105.47 L687.94 103.84 L692.25 102.21 L696.57 100.58 L700.91 98.96 L705.26 97.33 L709.63 95.7 L714.01 94.07 L718.41 92.45 L722.82 90.82 L727.24 89.19 L731.68 87.56 L736.13 85.94 L740.6 84.31 L745.07 82.68 L749.56 81.05 L754.06 79.43 L758.57 77.8 L763.09 76.17 L767.63 74.54 L772.17 72.92 L776.72 71.29 L781.28 69.66 L785.85 68.03 L790.43 66.41 L795.02 64.78 L799.62 63.15 L804.22 61.52 L808.84 59.9 L813.46 58.27 L818.08 56.64 L822.71 55.01 L827.35 53.39 L832 51.76 L836.65 50.13 L841.3 48.5 L845.96 46.88 L850.62 45.25 L855.29 43.62 L859.96 41.99 L864.64 40.37 L869.31 38.74 L873.99 37.11 L878.67 35.48 L883.36 33.86 L888.04 32.23 L892.73 30.6 L897.41 28.97 L902.1 27.35"/>
<path d="M902.1 613.25 L896.99 611.63 L891.87 610 L886.76 608.37 L881.65 606.74 L876.54 605.12 L871.44 603.49 L866.33 601.86 L861.23 600.23 L856.13 598.61 L851.03 596.98 L845.94 595.35 L840.86 593.72 L835.77 592.1 L830.7 590.47 L825.62 588.84 L820.56 587.21 L815.5 585.59 L810.44 583.96 L805.4 582.33 L800.36 580.7 L795.33 579.08 L790.3 577.45 L785.29 575.82 L780.28 574.19 L775.29 572.57 L770.3 570.94 L765.32 569.31 L760.36 567.68 L755.4 566.06 L750.46 564.43 L745.52 562.8 L740.6 561.17 L735.69 559.55 L730.8 557.92 L725.91 556.29 L721.04 554.66 L716.19 553.04 L711.35 551.41 L706.52 549.78 L701.71 548.15 L696.91 546.53 L692.13 544.9 L687.36 543.27 L682.62 541.64 L677.88 540.02 L673.17 538.39 L668.47 536.76 L663.79 535.13 L659.13 533.51 L654.48 531.88 L649.86 530.25 L645.26 528.62 L640.67 526.99 L636.1 525.37 L631.56 523.74 L627.03 522.11 L622.53 520.48 L618.05 518.86 L613.59 517.23 L609.15 515.6 L604.73 513.97 L600.34 512.35 L595.96 510.72 L591.62 509.09 L587.29 507.46 L582.99 505.84 L578.72 504.21 L574.46 502.58 L570.24 500.95 L566.04 499.33 L561.86 497.7 L557.71 496.07 L553.59 494.44 L549.49 492.82 L545.42 491.19 L541.38 489.56 L537.36 487.93 L533.38 486.31 L529.42 484.68 L525.49 483.05 L521.58 481.42 L517.71 479.8 L513.87 478.17 L510.05 476.54 L506.27 474.91 L502.51 473.29 L498.79 471.66 L495.09 470.03 L491.43 468.4 L487.8 466.78 L484.2 465.15 L480.63 463.52 L477.1 461.89 L473.59 460.27 L470.12 458.64 L466.69 457.01 L463.28 455.38 L459.91 453.76 L456.57 452.13 L453.27 450.5 L450 448.87 L446.76 447.25 L443.56 445.62 L440.4 443.99 L437.27 442.36 L434.17 440.74 L431.11 439.11 L428.09 437.48 L425.1 435.85 L422.15 434.23 L419.24 432.6 L416.36 430.97 L413.52 429.34 L410.72 427.72 L407.95 426.09 L405.22 424.46 L402.53 422.83 L399.88 421.21 L397.27 419.58 L394.69 417.95 L392.15 416.32 L389.65 414.7 L387.19 413.07 L384.77 411.44 L382.39 409.81 L380.05 408.19 L377.75 406.56 L375.49 404.93 L373.27 403.3 L371.09 401.68 L368.95 400.05 L366.85 398.42 L364.79 396.79 L362.77 395.17 L360.79 393.54 L358.86 391.91 L356.96 390.28 L355.11 388.66 L353.3 387.03 L351.53 385.4 L349.8 383.77 L348.11 382.15 L346.47 380.52 L344.87 378.89 L343.31 377.26 L341.79 375.64 L340.32 374.01 L338.89 372.38 L337.5 370.75 L336.16 369.13 L334.86 367.5 L333.6 365.87 L332.38 364.24 L331.21 362.62 L330.08 360.99 L329 359.36 L327.96 357.73 L326.96 356.11 L326 354.48 L325.09 352.85 L324.23 351.22 L323.41 349.6 L322.63 347.97 L321.89 346.34 L321.21 344.71 L320.56 343.09 L319.96 341.46 L319.4 339.83 L318.89 338.2 L318.42 336.58 L318 334.95 L317.62 333.32 L317.29 331.69 L317 330.07 L316.75 328.44 L316.55 326.81 L316.39 325.18 L316.28 323.56 L316.22 321.93 L316.19 320.3 L316.22 318.67 L316.28 317.04 L316.39 315.42 L316.55 313.79 L316.75 312.16 L317 310.53 L317.29 308.91 L317.62 307.28 L318 305.65 L318.42 304.02 L318.89 302.4 L319.4 300.77 L319.96 299.14 L320.56 297.51 L321.21 295.89 L321.89 294.26 L322.63 292.63 L323.41 291 L324.23 289.38 L325.09 287.75 L326 286.12 L326.96 284.49 L327.96 282.87 L329 281.24 L330.08 279.61 L331.21 277.98 L332.38 276.36 L333.6 274.73 L334.86 273.1 L336.16 271.47 L337.5 269.85 L338.89 268.22 L340.32 266.59 L341.79 264.96 L343.31 263.34 L344.87 261.71 L346.47 260.08 L348.11 258.45 L349.8 256.83 L351.53 255.2 L353.3 253.57 L355.11 251.94 L356.96 250.32 L358.86 248.69 L360.79 247.06 L362.77 245.43 L364.79 243.81 L366.85 242.18 L368.95 240.55 L371.09 238.92 L373.27 237.3 L375.49 235.67 L377.75 234.04 L380.05 232.41 L382.39 230.79 L384.77 229.16 L387.19 227.53 L389.65 225.9 L392.15 224.28 L394.69 222.65 L397.27 221.02 L399.88 219.39 L402.53 217.77 L405.22 216.14 L407.95 214.51 L410.72 212.88 L413.52 211.26 L416.36 209.63 L419.24 208 L422.15 206.37 L425.1 204.75 L428.09 203.12 L431.11 201.49 L434.17 199.86 L437.27 198.24 L440.4 196.61 L443.56 194.98 L446.76 193.35 L450 191.73 L453.27 190.1 L456.57 188.47 L459.91 186.84 L463.28 185.22 L466.69 183.59 L470.12 181.96 L473.59 180.33 L477.1 178.71 L480.63 177.08 L484.2 175.45 L487.8 173.82 L491.43 172.2 L495.09 170.57 L498.79 168.94 L502.51 167.31 L506.27 165.69 L510.05 164.06 L513.87 162.43 L517.71 160.8 L521.58 159.18 L525.49 157.55 L529.42 155.92 L533.38 154.29 L537.36 152.67 L541.38 151.04 L545.42 149.41 L549.49 147.78 L553.59 146.16 L557.71 144.53 L561.86 142.9 L566.04 141.27 L570.24 139.65 L574.46 138.02 L578.72 136.39 L582.99 134.76 L587.29 133.14 L591.62 131.51 L595.96 129.88 L600.34 128.25 L604.73 126.63 L609.15 125 L613.59 123.37 L618.05 121.74 L622.53 120.12 L627.03 118.49 L631.56 116.86 L636.1 115.23 L640.67 113.61 L645.26 111.98 L649.86 110.35 L654.48 108.72 L659.13 107.09 L663.79 105.47 L668.47 103.84 L673.17 102.21 L677.88 100.58 L682.62 98.96 L687.36 97.33 L692.13 95.7 L696.91 94.07 L701.71 92.45 L706.52 90.82 L711.35 89.19 L716.19 87.56 L721.04 85.94 L725.91 84.31 L730.8 82.68 L735.69 81.05 L740.6 79.43 L745.52 77.8 L750.46 76.17 L755.4 74.54 L760.36 72.92 L765.32 71.29 L770.3 69.66 L775.29 68.03 L780.28 66.41 L785.29 64.78 L790.3 63.15 L795.33 61.52 L800.36 59.9 L805.4 58.27 L810.44 56.64 L815.5 55.01 L820.56 53.39 L825.62 51.76 L830.7 50.13 L835.77 48.5 L840.86 46.88 L845.94 45.25 L851.03 43.62 L856.13 41.99 L861.23 40.37 L866.33 38.74 L871.44 37.11 L876.54 35.48 L881.65 33.86 L886.76 32.23 L891.87 30.6 L896.99 28.97 L902.1 27.35"/>
<path d="M750.46 564.43H1053.74"/>
<path d="M609.15 515.6H1195.05"/>
<path d="M487.8 466.78H1316.4"/>
<path d="M394.69 417.95H1409.51"/>
<path d="M336.16 369.13H1468.04"/>
<path d="M316.19 320.3H1488.01"/>
<path d="M336.16 271.47H1468.04"/>
<path d="M394.69 222.65H1409.51"/>
<path d="M487.8 173.82H1316.4"/>
<path d="M609.15 125H1195.05"/>
<path d="M750.46 76.17H1053.74"/>
</g>
<g fill="none" stroke="#5e5e5e" stroke-width="1.3" stroke-dasharray="1.3 2.0">
<path d="M701.9 169.2 C701.37 175.27 699.02 194.22 698.7 205.6 C698.38 216.98 698.12 225.35 700 237.5 C701.88 249.65 705.28 264.83 710 278.5 C714.72 292.17 720.32 305.08 728.3 319.5 C736.28 333.92 746.52 351.35 757.9 365 C769.28 378.65 782.57 389.25 796.6 401.4 C810.63 413.55 824.63 421.97 842.1 437.9 C859.57 453.83 891.52 487.15 901.4 497"/>
<path d="M430.4 325 C430.67 328.33 430.4 337.83 432 345 C433.6 352.17 435.67 360.17 440 368 C444.33 375.83 451 384.25 458 392 C465 399.75 473.5 407.5 482 414.5 C490.5 421.5 498 426.25 509 434 C520 441.75 534.5 453 548 461 C561.5 469 583 478.5 590 482"/>
<path d="M508 189.3 C509.33 187.3 511.05 183.42 516 177.3 C520.95 171.18 534.08 156.72 537.7 152.6"/>
<path d="M1126 145.3 C1127.33 144.12 1130.3 140.05 1134 138.2 C1137.7 136.35 1143.32 134.93 1148.2 134.2 C1153.08 133.47 1157.07 133.5 1163.3 133.8 C1169.53 134.1 1178.93 135.18 1185.6 136 C1192.27 136.82 1196.63 137.43 1203.3 138.7 C1209.97 139.97 1217.15 141.9 1225.6 143.6 C1234.05 145.3 1247.93 147.75 1254 148.9 C1260.07 150.05 1260.67 150.23 1262 150.5"/>
</g>
<g fill="none" stroke="#858585" stroke-width="1.1">
<path d="M698.7 128.2 Q703 133 703.3 141.9"/><path d="M429.5 318.5 L432.5 309.5"/><path d="M502.7 196 L508 189.3"/>
</g>
<g fill="#8c8c8c">
<text transform="matrix(0.57 0 0 0.55 1472.14 329.69)" font-size="20">+180</text>
<circle cx="1501.61" cy="322.5" r="1.05" fill="none" stroke="#8c8c8c" stroke-width="0.75"/>
<text transform="matrix(0.57 0 0 0.55 1374.49 329.69)" font-size="20">+210</text>
<circle cx="1403.96" cy="322.5" r="1.05" fill="none" stroke="#8c8c8c" stroke-width="0.75"/>
<text transform="matrix(0.57 0 0 0.55 1276.84 329.69)" font-size="20">+240</text>
<circle cx="1306.3" cy="322.5" r="1.05" fill="none" stroke="#8c8c8c" stroke-width="0.75"/>
<text transform="matrix(0.57 0 0 0.55 1179.19 329.69)" font-size="20">+270</text>
<circle cx="1208.65" cy="322.5" r="1.05" fill="none" stroke="#8c8c8c" stroke-width="0.75"/>
<text transform="matrix(0.57 0 0 0.55 1081.54 329.69)" font-size="20">+300</text>
<circle cx="1111" cy="322.5" r="1.05" fill="none" stroke="#8c8c8c" stroke-width="0.75"/>
<text transform="matrix(0.57 0 0 0.55 983.88 329.69)" font-size="20">+330</text>
<circle cx="1013.35" cy="322.5" r="1.05" fill="none" stroke="#8c8c8c" stroke-width="0.75"/>
<text transform="matrix(0.61 0 0 0.55 893.29 329.69)" font-size="20">+0</text>
<circle cx="911.1" cy="322.5" r="1.05" fill="none" stroke="#8c8c8c" stroke-width="0.75"/>
<text transform="matrix(0.59 0 0 0.55 792.76 329.69)" font-size="20">+30</text>
<circle cx="816.75" cy="322.5" r="1.05" fill="none" stroke="#8c8c8c" stroke-width="0.75"/>
<text transform="matrix(0.59 0 0 0.55 695.11 329.69)" font-size="20">+60</text>
<circle cx="719.1" cy="322.5" r="1.05" fill="none" stroke="#8c8c8c" stroke-width="0.75"/>
<text transform="matrix(0.59 0 0 0.55 597.46 329.69)" font-size="20">+90</text>
<circle cx="621.45" cy="322.5" r="1.05" fill="none" stroke="#8c8c8c" stroke-width="0.75"/>
<text transform="matrix(0.57 0 0 0.55 495.63 329.69)" font-size="20">+120</text>
<circle cx="525.1" cy="322.5" r="1.05" fill="none" stroke="#8c8c8c" stroke-width="0.75"/>
<text transform="matrix(0.57 0 0 0.55 397.98 329.69)" font-size="20">+150</text>
<circle cx="427.44" cy="322.5" r="1.05" fill="none" stroke="#8c8c8c" stroke-width="0.75"/>
<text transform="matrix(0.57 0 0 0.55 300.33 329.69)" font-size="20">+180</text>
<circle cx="329.79" cy="322.5" r="1.05" fill="none" stroke="#8c8c8c" stroke-width="0.75"/>
<text transform="matrix(0.59 0 0 0.55 890.41 24.59)" font-size="20">+90</text>
<circle cx="914.4" cy="17.4" r="1.05" fill="none" stroke="#8c8c8c" stroke-width="0.75"/>
<text transform="matrix(0.59 0 0 0.55 890.41 122.79)" font-size="20">+60</text>
<circle cx="914.4" cy="115.6" r="1.05" fill="none" stroke="#8c8c8c" stroke-width="0.75"/>
<text transform="matrix(0.59 0 0 0.55 890.41 220.69)" font-size="20">+30</text>
<circle cx="914.4" cy="213.5" r="1.05" fill="none" stroke="#8c8c8c" stroke-width="0.75"/>
<text transform="matrix(0.59 0 0 0.55 890.41 427.89)" font-size="20">−30</text>
<circle cx="914.4" cy="420.7" r="1.05" fill="none" stroke="#8c8c8c" stroke-width="0.75"/>
<text transform="matrix(0.59 0 0 0.55 890.41 525.89)" font-size="20">−60</text>
<circle cx="914.4" cy="518.7" r="1.05" fill="none" stroke="#8c8c8c" stroke-width="0.75"/>
<text transform="matrix(0.59 0 0 0.55 890.41 623.89)" font-size="20">−90</text>
<circle cx="914.4" cy="616.7" r="1.05" fill="none" stroke="#8c8c8c" stroke-width="0.75"/>
</g>
<ellipse cx="421.23" cy="229.98" rx="45.54" ry="14.14" transform="rotate(-27.9 421.23 229.98)" fill="none" stroke="#4cc06c" stroke-width="2.1"/>
<g fill="none" stroke="#40d060" stroke-width="1.25" stroke-dasharray="1.3 2.3">
<path d="M373.4 292.5 C374.08 290.45 375.68 284.4 377.5 280.2 C379.32 276 382.15 270.97 384.3 267.3 C386.45 263.63 387.82 261.62 390.4 258.2 C392.98 254.78 396.95 250.04 399.8 246.8 C402.65 243.56 405.32 240.93 407.5 238.75 C409.68 236.57 411.73 234.82 412.9 233.75 C414.07 232.68 414.23 232.54 414.5 232.3"/>
<path d="M419.2 208.3 L427.5 225"/>
<path d="M1258.7 190 Q1320 192 1385 207.3"/>
</g>
<rect x="371.8" y="293.2" width="2" height="2" fill="#ff6040"/>
<rect x="1257.7" y="189" width="2.2" height="2" fill="#ff6040"/>
<path d="M1259.7 190 H1264.5" stroke="#3ec85e" stroke-width="1.6"/>
<g stroke="#ff1010" stroke-width="1.2">
<path d="M414.2 231.2 H419.2 M416.7 228.7 V233.7"/>
<path d="M426.6 225.7 H431.6 M429.1 223.2 V228.2"/>
</g>
<text x="419.5" y="232.7" fill="#fff" font-size="10.4" text-anchor="middle">COM</text>
<g fill="#fff" class="mono" font-size="13.88" style="white-space:pre">
<text class="mono" x="315.2" y="29.5" xml:space="preserve">MX0001</text>
<text class="mono" x="315.2" y="42.8" xml:space="preserve">Beg: 20251226 03:58:19 (sol = 274.26°)</text>
<text class="mono" x="315.2" y="56.7" xml:space="preserve">End: 20251226 09:10:47 (sol = 274.49°)</text>
<text class="mono" x="315.2" y="69.6" xml:space="preserve">--------------------------------------</text>
<text class="mono" x="315.2" y="82" xml:space="preserve">...: 3</text>
<text class="mono" x="315.2" y="95" xml:space="preserve">COM: 2</text>
</g>
<g>
<rect x="106.2" y="831.75" width="22.6" height="4.1" fill="#bddf26"/>
<rect x="165" y="831.75" width="180" height="4.1" fill="#bddf26"/>
<rect x="366.1" y="831.75" width="258.9" height="4.1" fill="#bddf26"/>
<rect x="635" y="831.75" width="150.8" height="4.1" fill="#bddf26"/>
<rect x="807" y="831.75" width="91.8" height="4.1" fill="#bddf26"/>
<rect x="920" y="831.75" width="52.8" height="4.1" fill="#bddf26"/>
<rect x="984.2" y="831.75" width="81.6" height="4.1" fill="#bddf26"/>
<rect x="1082.1" y="831.75" width="120.7" height="4.1" fill="#bddf26"/>
<rect x="1244.2" y="831.75" width="81.6" height="4.1" fill="#bddf26"/>
<rect x="1337.2" y="831.75" width="17.8" height="4.1" fill="#bddf26"/>
<rect x="1381.2" y="831.75" width="62.6" height="4.1" fill="#bddf26"/>
<rect x="1459.2" y="831.75" width="52.8" height="4.1" fill="#bddf26"/>
<rect x="1523" y="831.75" width="24.2" height="4.1" fill="#bddf26"/>
<rect x="1723.8" y="831.75" width="24.2" height="4.1" fill="#bddf26"/>
<rect x="1758" y="831.75" width="24" height="4.1" fill="#bddf26"/>
<rect x="165" y="815.42" width="23" height="4.1" fill="#7ad151"/>
<rect x="223" y="815.42" width="62.8" height="4.1" fill="#7ad151"/>
<rect x="312" y="815.42" width="28" height="4.1" fill="#7ad151"/>
<rect x="366.1" y="815.42" width="125.9" height="4.1" fill="#7ad151"/>
<rect x="508" y="815.42" width="146.2" height="4.1" fill="#7ad151"/>
<rect x="704.2" y="815.42" width="32.8" height="4.1" fill="#7ad151"/>
<rect x="773" y="815.42" width="72" height="4.1" fill="#7ad151"/>
<rect x="870.8" y="815.42" width="117.2" height="4.1" fill="#7ad151"/>
<rect x="1003" y="815.42" width="14" height="4.1" fill="#7ad151"/>
<rect x="1062.2" y="815.42" width="150.8" height="4.1" fill="#7ad151"/>
<rect x="1244.2" y="815.42" width="22.8" height="4.1" fill="#7ad151"/>
<rect x="1293" y="815.42" width="22.8" height="4.1" fill="#7ad151"/>
<rect x="1342" y="815.42" width="22.7" height="4.1" fill="#7ad151"/>
<rect x="1386.2" y="815.42" width="42.6" height="4.1" fill="#7ad151"/>
<rect x="1459.2" y="815.42" width="23.8" height="4.1" fill="#7ad151"/>
<rect x="1548" y="815.42" width="23.2" height="4.1" fill="#7ad151"/>
<rect x="165" y="799.09" width="23" height="4.1" fill="#52c569"/>
<rect x="258" y="799.09" width="229" height="4.1" fill="#52c569"/>
<rect x="508" y="799.09" width="107" height="4.1" fill="#52c569"/>
<rect x="625.8" y="799.09" width="92.2" height="4.1" fill="#52c569"/>
<rect x="728.8" y="799.09" width="97.2" height="4.1" fill="#52c569"/>
<rect x="949.2" y="799.09" width="200" height="4.1" fill="#52c569"/>
<rect x="1160" y="799.09" width="87.8" height="4.1" fill="#52c569"/>
<rect x="1258" y="799.09" width="185.8" height="4.1" fill="#52c569"/>
<rect x="1459.2" y="799.09" width="23.8" height="4.1" fill="#52c569"/>
<rect x="1552.2" y="799.09" width="24" height="4.1" fill="#52c569"/>
<rect x="194.2" y="782.76" width="23.8" height="4.1" fill="#2ab07f"/>
<rect x="321.1" y="782.76" width="185.9" height="4.1" fill="#2ab07f"/>
<rect x="518" y="782.76" width="23" height="4.1" fill="#2ab07f"/>
<rect x="557" y="782.76" width="126" height="4.1" fill="#2ab07f"/>
<rect x="807" y="782.76" width="24" height="4.1" fill="#2ab07f"/>
<rect x="954.2" y="782.76" width="18.8" height="4.1" fill="#2ab07f"/>
<rect x="988" y="782.76" width="137" height="4.1" fill="#2ab07f"/>
<rect x="1155" y="782.76" width="63" height="4.1" fill="#2ab07f"/>
<rect x="1244.2" y="782.76" width="22.8" height="4.1" fill="#2ab07f"/>
<rect x="1317" y="782.76" width="23.8" height="4.1" fill="#2ab07f"/>
<rect x="1396.2" y="782.76" width="22.6" height="4.1" fill="#2ab07f"/>
<rect x="1464.2" y="782.76" width="185.8" height="4.1" fill="#2ab07f"/>
<rect x="341.2" y="766.43" width="28.8" height="4.1" fill="#1f9e89"/>
<rect x="410" y="766.43" width="38" height="4.1" fill="#1f9e89"/>
<rect x="469.2" y="766.43" width="22.8" height="4.1" fill="#1f9e89"/>
<rect x="527" y="766.43" width="19" height="4.1" fill="#1f9e89"/>
<rect x="562" y="766.43" width="28" height="4.1" fill="#1f9e89"/>
<rect x="616" y="766.43" width="33.2" height="4.1" fill="#1f9e89"/>
<rect x="959.2" y="766.43" width="28.8" height="4.1" fill="#1f9e89"/>
<rect x="1062.2" y="766.43" width="23.8" height="4.1" fill="#1f9e89"/>
<rect x="1101.2" y="766.43" width="23.8" height="4.1" fill="#1f9e89"/>
<rect x="1160" y="766.43" width="34.2" height="4.1" fill="#1f9e89"/>
<rect x="1248" y="766.43" width="24" height="4.1" fill="#1f9e89"/>
<rect x="1425" y="766.43" width="87" height="4.1" fill="#1f9e89"/>
<rect x="420" y="750.1" width="23" height="4.1" fill="#26828e"/>
<rect x="532" y="750.1" width="24" height="4.1" fill="#26828e"/>
<rect x="567" y="750.1" width="23" height="4.1" fill="#26828e"/>
<rect x="620.8" y="750.1" width="121.2" height="4.1" fill="#26828e"/>
<rect x="969.2" y="750.1" width="165.8" height="4.1" fill="#26828e"/>
<rect x="1185" y="750.1" width="160.8" height="4.1" fill="#26828e"/>
<rect x="1469.2" y="750.1" width="23.8" height="4.1" fill="#26828e"/>
<rect x="428.8" y="733.77" width="24.2" height="4.1" fill="#2c728e"/>
<rect x="575.8" y="733.77" width="157.2" height="4.1" fill="#2c728e"/>
<rect x="993" y="733.77" width="112" height="4.1" fill="#2c728e"/>
<rect x="1116.2" y="733.77" width="106.8" height="4.1" fill="#2c728e"/>
<rect x="1263" y="733.77" width="29" height="4.1" fill="#2c728e"/>
<rect x="1488.8" y="733.77" width="23.2" height="4.1" fill="#2c728e"/>
<rect x="590.8" y="717.44" width="24.2" height="4.1" fill="#3b528b"/>
<rect x="655" y="717.44" width="117" height="4.1" fill="#3b528b"/>
<rect x="1072" y="717.44" width="170.8" height="4.1" fill="#3b528b"/>
<rect x="1263" y="717.44" width="24" height="4.1" fill="#3b528b"/>
<rect x="595.8" y="701.11" width="137.2" height="4.1" fill="#433e85"/>
<rect x="1090.8" y="701.11" width="29.2" height="4.1" fill="#433e85"/>
<rect x="1199.2" y="701.11" width="23.8" height="4.1" fill="#433e85"/>
<rect x="1273" y="701.11" width="52.8" height="4.1" fill="#433e85"/>
<rect x="1111.2" y="684.78" width="23.8" height="4.1" fill="#482878"/>
</g>
<g fill="none" stroke="#fff" stroke-width="2">
<path d="M112.9 833.8H120.9 M116.9 829.8V837.8"/>
<path d="M240.7 833.8H248.7 M244.7 829.8V837.8"/>
<path d="M511 833.8H519 M515 829.8V837.8"/>
<path d="M706.8 833.8H714.8 M710.8 829.8V837.8"/>
<path d="M832.7 833.8H840.7 M836.7 829.8V837.8"/>
<path d="M961.8 833.8H969.8 M965.8 829.8V837.8"/>
<path d="M985.5 833.8H993.5 M989.5 829.8V837.8"/>
<path d="M1115.7 833.8H1123.7 M1119.7 829.8V837.8"/>
<path d="M1294.8 833.8H1302.8 M1298.8 829.8V837.8"/>
<path d="M1341.8 833.8H1349.8 M1345.8 829.8V837.8"/>
<path d="M1412.7 833.8H1420.7 M1416.7 829.8V837.8"/>
<path d="M1481.8 833.8H1489.8 M1485.8 829.8V837.8"/>
<path d="M1531 833.8H1539 M1535 829.8V837.8"/>
<path d="M1731.8 833.8H1739.8 M1735.8 829.8V837.8"/>
<path d="M1766 833.8H1774 M1770 829.8V837.8"/>
<path d="M171.7 817.47H179.7 M175.7 813.47V821.47"/>
<path d="M255.6 817.47H263.6 M259.6 813.47V821.47"/>
<path d="M322.7 817.47H330.7 M326.7 813.47V821.47"/>
<path d="M436.8 817.47H444.8 M440.8 813.47V821.47"/>
<path d="M598.8 817.47H606.8 M602.8 813.47V821.47"/>
<path d="M716.8 817.47H724.8 M720.8 813.47V821.47"/>
<path d="M792.7 817.47H800.7 M796.7 813.47V821.47"/>
<path d="M938.8 817.47H946.8 M942.8 813.47V821.47"/>
<path d="M1006 817.47H1014 M1010 813.47V821.47"/>
<path d="M1152.7 817.47H1160.7 M1156.7 813.47V821.47"/>
<path d="M1251 817.47H1259 M1255 813.47V821.47"/>
<path d="M1299.8 817.47H1307.8 M1303.8 813.47V821.47"/>
<path d="M1348.8 817.47H1356.8 M1352.8 813.47V821.47"/>
<path d="M1403 817.47H1411 M1407 813.47V821.47"/>
<path d="M1466.8 817.47H1474.8 M1470.8 813.47V821.47"/>
<path d="M1554.8 817.47H1562.8 M1558.8 813.47V821.47"/>
<path d="M173.8 801.14H181.8 M177.8 797.14V805.14"/>
<path d="M377.7 801.14H385.7 M381.7 797.14V805.14"/>
<path d="M544.8 801.14H552.8 M548.8 797.14V805.14"/>
<path d="M681.8 801.14H689.8 M685.8 797.14V805.14"/>
<path d="M741 801.14H749 M745 797.14V805.14"/>
<path d="M1074.7 801.14H1082.7 M1078.7 797.14V805.14"/>
<path d="M1216.8 801.14H1224.8 M1220.8 797.14V805.14"/>
<path d="M1304.8 801.14H1312.8 M1308.8 797.14V805.14"/>
<path d="M1466.8 801.14H1474.8 M1470.8 797.14V805.14"/>
<path d="M1559.8 801.14H1567.8 M1563.8 797.14V805.14"/>
<path d="M201.5 784.81H209.5 M205.5 780.81V788.81"/>
<path d="M399.7 784.81H407.7 M403.7 780.81V788.81"/>
<path d="M524.7 784.81H532.7 M528.7 780.81V788.81"/>
<path d="M638.8 784.81H646.8 M642.8 780.81V788.81"/>
<path d="M814.7 784.81H822.7 M818.7 780.81V788.81"/>
<path d="M958.8 784.81H966.8 M962.8 780.81V788.81"/>
<path d="M1039.8 784.81H1047.8 M1043.8 780.81V788.81"/>
<path d="M1187.7 784.81H1195.7 M1191.7 780.81V788.81"/>
<path d="M1251 784.81H1259 M1255 780.81V788.81"/>
<path d="M1324.8 784.81H1332.8 M1328.8 780.81V788.81"/>
<path d="M1403 784.81H1411 M1407 780.81V788.81"/>
<path d="M1545.7 784.81H1553.7 M1549.7 780.81V788.81"/>
<path d="M356 768.48H364 M360 764.48V772.48"/>
<path d="M425.7 768.48H433.7 M429.7 764.48V772.48"/>
<path d="M476 768.48H484 M480 764.48V772.48"/>
<path d="M534.8 768.48H542.8 M538.8 764.48V772.48"/>
<path d="M570.7 768.48H578.7 M574.7 764.48V772.48"/>
<path d="M630.7 768.48H638.7 M634.7 764.48V772.48"/>
<path d="M973.8 768.48H981.8 M977.8 764.48V772.48"/>
<path d="M1069.7 768.48H1077.7 M1073.7 764.48V772.48"/>
<path d="M1108.8 768.48H1116.8 M1112.8 764.48V772.48"/>
<path d="M1177.7 768.48H1185.7 M1181.7 764.48V772.48"/>
<path d="M1256 768.48H1264 M1260 764.48V772.48"/>
<path d="M1466.8 768.48H1474.8 M1470.8 764.48V772.48"/>
<path d="M426.8 752.15H434.8 M430.8 748.15V756.15"/>
<path d="M539.7 752.15H547.7 M543.7 748.15V756.15"/>
<path d="M573.8 752.15H581.8 M577.8 748.15V756.15"/>
<path d="M703.8 752.15H711.8 M707.8 748.15V756.15"/>
<path d="M1093.5 752.15H1101.5 M1097.5 748.15V756.15"/>
<path d="M1271 752.15H1279 M1275 748.15V756.15"/>
<path d="M1476.8 752.15H1484.8 M1480.8 748.15V756.15"/>
<path d="M436.8 735.82H444.8 M440.8 731.82V739.82"/>
<path d="M630.7 735.82H638.7 M634.7 731.82V739.82"/>
<path d="M1038.8 735.82H1046.8 M1042.8 731.82V739.82"/>
<path d="M1167.7 735.82H1175.7 M1171.7 731.82V739.82"/>
<path d="M1274.8 735.82H1282.8 M1278.8 731.82V739.82"/>
<path d="M1496.8 735.82H1504.8 M1500.8 731.82V739.82"/>
<path d="M598.8 719.49H606.8 M602.8 715.49V723.49"/>
<path d="M726.8 719.49H734.8 M730.8 715.49V723.49"/>
<path d="M1187.7 719.49H1195.7 M1191.7 715.49V723.49"/>
<path d="M1271 719.49H1279 M1275 715.49V723.49"/>
<path d="M686.8 703.16H694.8 M690.8 699.16V707.16"/>
<path d="M1101.8 703.16H1109.8 M1105.8 699.16V707.16"/>
<path d="M1206.8 703.16H1214.8 M1210.8 699.16V707.16"/>
<path d="M1299.8 703.16H1307.8 M1303.8 699.16V707.16"/>
<path d="M1118.8 686.83H1126.8 M1122.8 682.83V690.83"/>
</g>
<g fill="#ececec">
<text transform="matrix(0.51 0 0 0.54 106.68 831.7)" font-size="20">KSE</text>
<text transform="matrix(0.52 0 0 0.54 244.66 831.7)" font-size="20">ETA</text>
<text transform="matrix(0.57 0 0 0.54 482.39 831.7)" font-size="20">NZC</text>
<text transform="matrix(0.54 0 0 0.54 698.83 831.7)" font-size="20">NDA</text>
<text transform="matrix(0.49 0 0 0.54 842.81 831.7)" font-size="20">SPE</text>
<text transform="matrix(0.53 0 0 0.54 934.2 831.7)" font-size="20">ARD</text>
<text transform="matrix(0.51 0 0 0.54 1013.68 831.7)" font-size="20">EGE</text>
<text transform="matrix(0.56 0 0 0.54 1131.2 831.7)" font-size="20">NTA</text>
<text transform="matrix(0.56 0 0 0.54 1270.8 831.7)" font-size="20">MON</text>
<text transform="matrix(0.55 0 0 0.54 1331.63 831.7)" font-size="20">URS</text>
<text transform="matrix(0.51 0 0 0.54 1401.7 831.7)" font-size="20">AHY</text>
<text transform="matrix(0.56 0 0 0.54 1472.74 831.7)" font-size="20">GUM</text>
<text transform="matrix(0.53 0 0 0.54 1523.97 831.7)" font-size="20">OHY</text>
<text transform="matrix(0.52 0 0 0.54 1725.49 831.7)" font-size="20">XHE</text>
<text transform="matrix(0.56 0 0 0.54 1760.4 831.7)" font-size="20">EVI</text>
<text transform="matrix(0.54 0 0 0.54 165.3 815.24)" font-size="20">AVB</text>
<text transform="matrix(0.5 0 0 0.54 245.5 815.24)" font-size="20">ELY</text>
<text transform="matrix(0.56 0 0 0.54 311.44 815.24)" font-size="20">CAM</text>
<text transform="matrix(0.53 0 0 0.54 420.77 815.24)" font-size="20">SSG</text>
<text transform="matrix(0.52 0 0 0.54 567.47 815.24)" font-size="20">PCA</text>
<text transform="matrix(0.54 0 0 0.54 709.5 815.24)" font-size="20">AUD</text>
<text transform="matrix(0.52 0 0 0.54 797.5 815.24)" font-size="20">AUR</text>
<text transform="matrix(0.54 0 0 0.54 919.63 815.24)" font-size="20">DSX</text>
<text transform="matrix(0.55 0 0 0.54 997.75 815.24)" font-size="20">OCU</text>
<text transform="matrix(0.52 0 0 0.54 1125.78 815.24)" font-size="20">OER</text>
<text transform="matrix(0.56 0 0 0.54 1242.81 815.24)" font-size="20">DKD</text>
<text transform="matrix(0.54 0 0 0.54 1292.84 815.24)" font-size="20">DSV</text>
<text transform="matrix(0.48 0 0 0.54 1344.5 815.24)" font-size="20">ALY</text>
<text transform="matrix(0.45 0 0 0.54 1399.82 815.24)" font-size="20">JLE</text>
<text transform="matrix(0.5 0 0 0.54 1461.2 815.24)" font-size="20">SCC</text>
<text transform="matrix(0.51 0 0 0.54 1548.88 815.24)" font-size="20">FEV</text>
<text transform="matrix(0.5 0 0 0.54 166.7 798.78)" font-size="20">LYR</text>
<text transform="matrix(0.46 0 0 0.54 363.12 798.78)" font-size="20">JMC</text>
<text transform="matrix(0.45 0 0 0.54 550.32 798.78)" font-size="20">JPE</text>
<text transform="matrix(0.55 0 0 0.54 660.43 798.78)" font-size="20">PAU</text>
<text transform="matrix(0.54 0 0 0.54 764.94 798.78)" font-size="20">NIA</text>
<text transform="matrix(0.51 0 0 0.54 1039.99 798.78)" font-size="20">STA</text>
<text transform="matrix(0.56 0 0 0.54 1192.4 798.78)" font-size="20">NOO</text>
<text transform="matrix(0.55 0 0 0.54 1340.75 798.78)" font-size="20">COM</text>
<text transform="matrix(0.53 0 0 0.54 1458.86 798.78)" font-size="20">NCC</text>
<text transform="matrix(0.52 0 0 0.54 1552.86 798.78)" font-size="20">FED</text>
<text transform="matrix(0.55 0 0 0.54 195.81 782.32)" font-size="20">HVI</text>
<text transform="matrix(0.53 0 0 0.54 403.7 782.32)" font-size="20">ARI</text>
<text transform="matrix(0.53 0 0 0.54 519.17 782.32)" font-size="20">SZC</text>
<text transform="matrix(0.54 0 0 0.54 606.66 782.32)" font-size="20">CAP</text>
<text transform="matrix(0.54 0 0 0.54 806.64 782.32)" font-size="20">NUE</text>
<text transform="matrix(0.53 0 0 0.54 949.87 782.32)" font-size="20">OCT</text>
<text transform="matrix(0.54 0 0 0.54 1049.96 782.32)" font-size="20">ORI</text>
<text transform="matrix(0.54 0 0 0.54 1174.2 782.32)" font-size="20">AMO</text>
<text transform="matrix(0.53 0 0 0.54 1243.66 782.32)" font-size="20">DPC</text>
<text transform="matrix(0.56 0 0 0.54 1320.46 782.32)" font-size="20">XVI</text>
<text transform="matrix(0.54 0 0 0.54 1395.66 782.32)" font-size="20">QUA</text>
<text transform="matrix(0.53 0 0 0.54 1549.2 782.32)" font-size="20">AAN</text>
<text transform="matrix(0.57 0 0 0.54 342.27 765.86)" font-size="20">TAH</text>
<text transform="matrix(0.46 0 0 0.54 422.82 765.86)" font-size="20">JEA</text>
<text transform="matrix(0.44 0 0 0.54 474.02 765.86)" font-size="20">JIP</text>
<text transform="matrix(0.49 0 0 0.54 528.91 765.86)" font-size="20">PPS</text>
<text transform="matrix(0.54 0 0 0.54 567.97 765.86)" font-size="20">ZCS</text>
<text transform="matrix(0.55 0 0 0.54 620.75 765.86)" font-size="20">GDR</text>
<text transform="matrix(0.52 0 0 0.54 958.66 765.86)" font-size="20">DRA</text>
<text transform="matrix(0.56 0 0 0.54 1061.61 765.86)" font-size="20">LUM</text>
<text transform="matrix(0.52 0 0 0.54 1101.66 765.86)" font-size="20">RPU</text>
<text transform="matrix(0.54 0 0 0.54 1165.58 765.86)" font-size="20">THA</text>
<text transform="matrix(0.52 0 0 0.54 1248.67 765.86)" font-size="20">PSU</text>
<text transform="matrix(0.51 0 0 0.54 1460.5 765.86)" font-size="20">XCB</text>
<text transform="matrix(0.45 0 0 0.54 422.82 749.4)" font-size="20">JRC</text>
<text transform="matrix(0.56 0 0 0.54 532.74 749.4)" font-size="20">CAN</text>
<text transform="matrix(0.55 0 0 0.54 567.42 749.4)" font-size="20">FAN</text>
<text transform="matrix(0.49 0 0 0.54 670.91 749.4)" font-size="20">PER</text>
<text transform="matrix(0.52 0 0 0.54 1038.98 749.4)" font-size="20">CTA</text>
<text transform="matrix(0.55 0 0 0.54 1252.42 749.4)" font-size="20">HYD</text>
<text transform="matrix(0.55 0 0 0.54 1469.17 749.4)" font-size="20">XUM</text>
<text transform="matrix(0.54 0 0 0.54 429.76 732.94)" font-size="20">COR</text>
<text transform="matrix(0.53 0 0 0.54 645.77 732.94)" font-size="20">SDA</text>
<text transform="matrix(0.58 0 0 0.54 1039.07 732.94)" font-size="20">LMI</text>
<text transform="matrix(0.55 0 0 0.54 1155.43 732.94)" font-size="20">LEO</text>
<text transform="matrix(0.51 0 0 0.54 1263.88 732.94)" font-size="20">EHY</text>
<text transform="matrix(0.52 0 0 0.54 1488.67 732.94)" font-size="20">ECV</text>
<text transform="matrix(0.47 0 0 0.54 594.01 716.48)" font-size="20">JXA</text>
<text transform="matrix(0.51 0 0 0.54 703.88 716.48)" font-size="20">KCG</text>
<text transform="matrix(0.56 0 0 0.54 1145 716.48)" font-size="20">AND</text>
<text transform="matrix(0.56 0 0 0.54 1262.81 716.48)" font-size="20">DAD</text>
<text transform="matrix(0.53 0 0 0.54 657.45 700.02)" font-size="20">ERI</text>
<text transform="matrix(0.54 0 0 0.54 1097.76 700.02)" font-size="20">SLD</text>
<text transform="matrix(0.52 0 0 0.54 1199.98 700.02)" font-size="20">ORS</text>
<text transform="matrix(0.53 0 0 0.54 1286.97 700.02)" font-size="20">GEM</text>
<text transform="matrix(0.55 0 0 0.54 1110.83 683.56)" font-size="20">KUM</text>
</g>
<g fill="none" stroke="#fff" stroke-opacity="0.44" stroke-width="2" stroke-dasharray="2 3.52">
<path d="M74 842.2V641.4"/>
<path d="M218.1 842.2V641.4"/>
<path d="M364.7 842.2V641.4"/>
<path d="M505.1 842.2V641.4"/>
<path d="M649.8 842.2V641.4"/>
<path d="M797 842.2V641.4"/>
<path d="M939.8 842.2V641.4"/>
<path d="M1091 842.2V641.4"/>
<path d="M1239.2 842.2V641.4"/>
<path d="M1394.1 842.2V641.4"/>
<path d="M1547.9 842.2V641.4"/>
<path d="M1687 842.2V641.4"/>
</g>
<g fill="#555555" font-size="30">
<text transform="matrix(0 -0.87 0.99 0 148.9 696.7)">APR</text>
<text transform="matrix(0 -0.91 1 0 293.9 701.59)">MAY</text>
<text transform="matrix(0 -0.86 1 0 435.7 690.91)">JUN</text>
<text transform="matrix(0 -0.84 1 0 575.7 686.1)">JUL</text>
<text transform="matrix(0 -0.89 0.97 0 722.51 700.8)">AUG</text>
<text transform="matrix(0 -0.85 0.98 0 871.71 694.47)">SEP</text>
<text transform="matrix(0 -0.91 0.98 0 1015.51 700.96)">OCT</text>
<text transform="matrix(0 -0.91 0.99 0 1168.7 704.18)">NOV</text>
<text transform="matrix(0 -0.9 0.98 0 1317.71 701.35)">DEC</text>
<text transform="matrix(0 -0.84 1 0 1468.7 688.91)">JAN</text>
<text transform="matrix(0 -0.87 1.01 0 1628 696.49)">FEB</text>
<text transform="matrix(0 -0.92 0.99 0 1766 705.4)">MAR</text>
</g>
<path d="M1366.1 641.4V842.2" stroke="#ff0000" stroke-width="2.2" stroke-dasharray="5.2 2.05" stroke-dashoffset="2.85" fill="none"/>
<path d="M19.5 641.5H1785.5V842.5H19.5Z" fill="none" stroke="#fff" stroke-width="1.1"/>
<g stroke="#fff" stroke-width="1.1">
<path d="M19.4 842.2V847.1"/>
<path d="M264.71 842.2V847.1"/>
<path d="M510.01 842.2V847.1"/>
<path d="M755.32 842.2V847.1"/>
<path d="M1000.62 842.2V847.1"/>
<path d="M1245.93 842.2V847.1"/>
<path d="M1491.23 842.2V847.1"/>
<path d="M1736.54 842.2V847.1"/>
</g>
<g fill="#fff">
<text transform="matrix(0.77 0 0 0.68 16.09 861.86)" font-size="20">0</text>
<text transform="matrix(0.77 0 0 0.68 255.86 861.86)" font-size="20">50</text>
<text transform="matrix(0.77 0 0 0.68 496.54 861.86)" font-size="20">100</text>
<text transform="matrix(0.77 0 0 0.68 741.85 861.86)" font-size="20">150</text>
<text transform="matrix(0.77 0 0 0.68 987.39 861.86)" font-size="20">200</text>
<text transform="matrix(0.77 0 0 0.68 1232.69 861.86)" font-size="20">250</text>
<text transform="matrix(0.77 0 0 0.68 1478.07 861.86)" font-size="20">300</text>
<text transform="matrix(0.77 0 0 0.68 1723.38 861.86)" font-size="20">350</text>
<text transform="matrix(0.79 0 0 0.73 828.51 881.92)" font-size="20">Solar longitude (deg)</text>
</g>
</svg></body></html>
